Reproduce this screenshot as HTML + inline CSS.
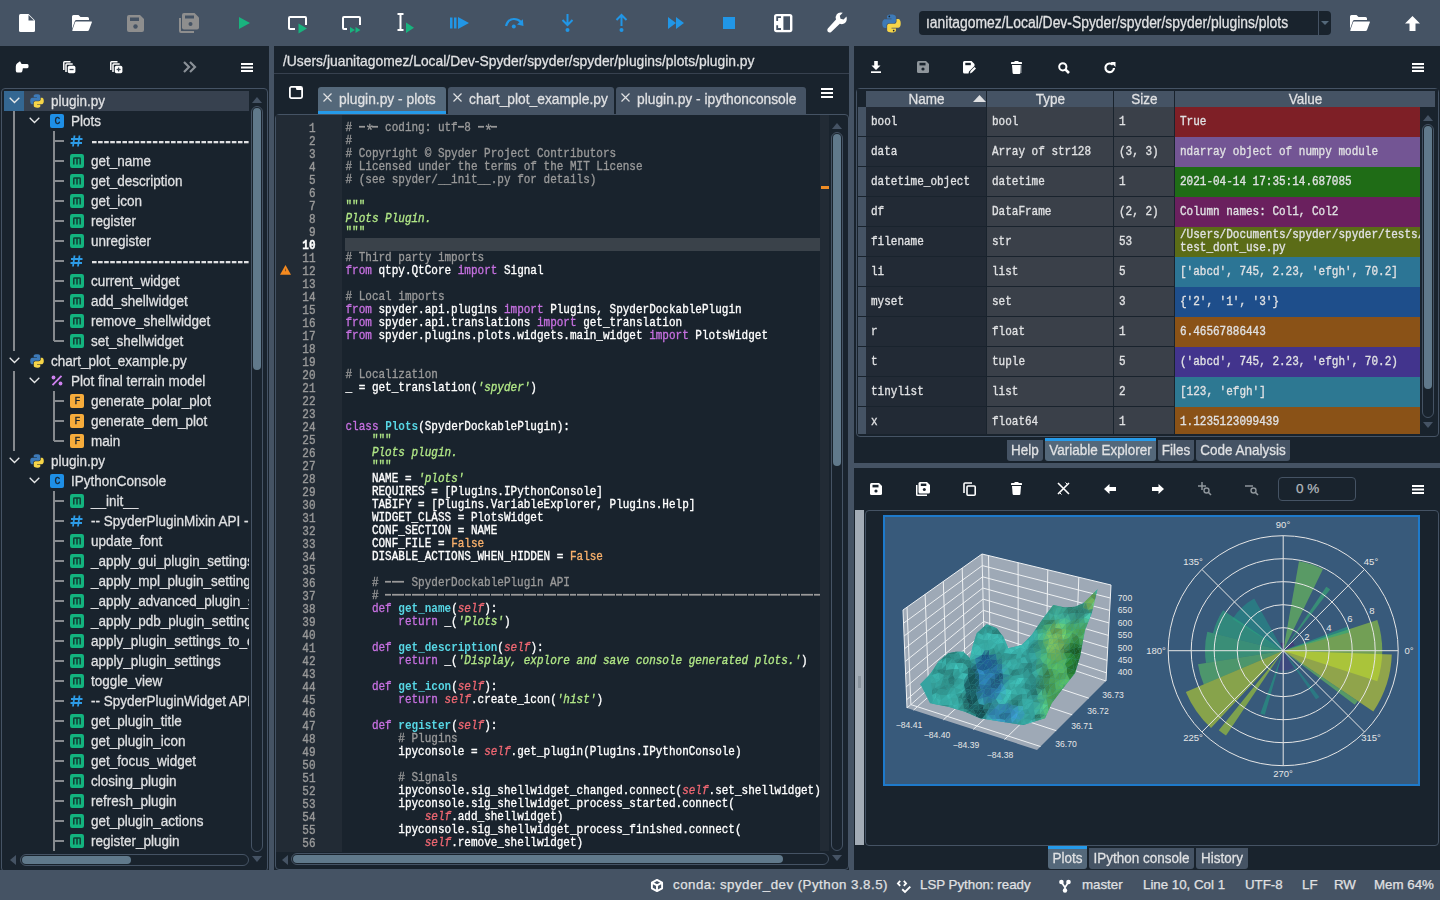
<!DOCTYPE html><html><head><meta charset="utf-8"><style>
*{margin:0;padding:0;box-sizing:border-box}
html,body{width:1440px;height:900px;overflow:hidden;background:#19232D;font-family:"Liberation Sans",sans-serif;color:#E0E1E3;-webkit-text-stroke-width:0.25px}
.a{position:absolute}
svg{position:absolute;overflow:visible}
.tr{position:absolute;height:20px;line-height:20px;font-size:13.5px;white-space:nowrap;color:#E0E1E3;transform:scaleY(1.13);transform-origin:0 14.7px}
.ico{position:absolute;width:14px;height:14px;border-radius:2px;font-family:"Liberation Mono",monospace;font-size:11.5px;font-weight:normal;line-height:14px;text-align:center;color:#19232D;-webkit-text-stroke-width:0.4px}.ico span{display:inline-block;transform:scaleX(0.85)}
.cl{position:absolute;left:345px;height:13px;line-height:13px;font-size:11px;font-family:"Liberation Mono",monospace;white-space:pre;color:#ffffff;transform:scaleY(1.1);transform-origin:0 40%;-webkit-text-stroke-width:0.3px}
.ln{position:absolute;left:280px;width:35.5px;text-align:right;height:13px;line-height:13px;font-size:11px;font-family:"Liberation Mono",monospace;color:#999999;transform:scaleY(1.1);transform-origin:0 40%;-webkit-text-stroke-width:0.35px}
.dsh{display:inline-block;width:6.6px;font-style:normal;color:transparent;-webkit-text-stroke-width:0;background:linear-gradient(currentColor,currentColor) no-repeat 0.2px 4.4px/6.2px 1.6px}.c .dsh{background-image:linear-gradient(#999,#999)}.s.sn{font-style:normal}.ast{display:inline-block;width:6.6px;font-style:normal;font-size:15px;line-height:13px;vertical-align:top;position:relative;top:2.5px;text-align:center}.k{color:#c670e0}.d{color:#57d6e4;font-weight:bold;-webkit-text-stroke-width:0}.c{color:#999999}.s{color:#b0e686;font-style:italic}.i{color:#ee6772;font-style:italic}.b{color:#fab16c}
.vr{position:absolute;height:30px;line-height:30px;font-size:11px;font-family:"Liberation Mono",monospace;white-space:pre;color:#E0E1E3;overflow:hidden;-webkit-text-stroke-width:0.3px;transform:scaleY(1.1);transform-origin:0 17.9px}
.tab{position:absolute;background:#455364;border-radius:3px 3px 0 0;font-size:13.8px;color:#E0E1E3;white-space:nowrap}
.st{position:absolute;top:869.5px;height:30px;line-height:30px;font-size:13.3px;color:#E0E1E3;white-space:nowrap}
.hd{position:absolute;top:91px;height:16px;line-height:18px;background:#455364;font-size:13.5px;text-align:center;color:#E0E1E3}.hd span{display:inline-block;transform:scaleY(1.12);transform-origin:0 13.7px}
</style></head><body><div class="a" style="left:0px;top:0px;width:1440px;height:46px;background:#455364;"></div><svg style="left:19px;top:14px" width="16" height="18" viewBox="0 0 16 18"><path d="M1.5 0 H9.5 L16 6.5 V16.5 Q16 18 14.5 18 H1.5 Q0 18 0 16.5 V1.5 Q0 0 1.5 0Z" fill="#ffffff"/><path d="M9.5 1 V6.5 H15" fill="#455364"/></svg><svg style="left:72px;top:15px" width="20" height="16" viewBox="0 0 20 16"><path d="M1.5 0 H6.5 L8.5 2 H15.5 Q17 2 17 3.5 V5 H4.5 Q3.2 5 2.8 6.2 L0 14 V1.5 Q0 0 1.5 0Z" fill="#ffffff"/><path d="M4 6.5 H19.5 Q20.2 6.5 19.8 7.5 L17 15 Q16.6 16 15.5 16 H0.8 Q0 16 0.3 15.2 L3 7.5 Q3.3 6.5 4 6.5Z" fill="#ffffff"/></svg><svg style="left:127px;top:15px" width="17" height="17" viewBox="0 0 17 17"><path d="M2 0 H13 L17 4 V15 Q17 17 15 17 H2 Q0 17 0 15 V2 Q0 0 2 0Z" fill="#8e8e8e"/><rect x="3" y="2.5" width="9" height="3.5" fill="#455364"/><circle cx="8.5" cy="11.5" r="2.2" fill="#455364"/></svg><svg style="left:179px;top:13px" width="20" height="20" viewBox="0 0 20 20"><path d="M0 5 V18 Q0 20 2 20 H15 V18 H2 V5Z" fill="#8e8e8e"/><path d="M5 0 H15.5 L20 4.5 V14.5 Q20 16.5 18 16.5 H5 Q3 16.5 3 14.5 V2 Q3 0 5 0Z" fill="#8e8e8e"/><rect x="6" y="2.5" width="9" height="3" fill="#455364"/><circle cx="11.5" cy="11" r="2" fill="#455364"/></svg><svg style="left:239px;top:17px" width="11" height="12" viewBox="0 0 11 12"><path d="M0 0 L11 6 L0 12Z" fill="#19b37e"/></svg><svg style="left:287px;top:16px" width="21" height="17" viewBox="0 0 21 17"><path d="M3 1 H18 Q19 1 19 2 V9 M8 13 H3 Q2 13 2 12 V2 Q2 1 3 1" fill="none" stroke="#ffffff" stroke-width="2"/><path d="M11.5 7.5 L20 12.5 L11.5 17.5Z" fill="#19b37e"/></svg><svg style="left:341px;top:16px" width="21" height="17" viewBox="0 0 21 17"><path d="M3 1 H18 Q19 1 19 2 V9 M6 13 H3 Q2 13 2 12 V2 Q2 1 3 1" fill="none" stroke="#ffffff" stroke-width="2"/><path d="M9 11 L14 14 L9 17Z M14.5 11 L19.5 14 L14.5 17Z" fill="#19b37e"/></svg><svg style="left:396px;top:13px" width="19" height="21" viewBox="0 0 19 21"><path d="M1.5 1 H7.5 M4.5 1 V17 M1.5 17 H7.5" fill="none" stroke="#ffffff" stroke-width="2"/><path d="M10 9.5 L18 14.75 L10 20Z" fill="#19b37e"/></svg><svg style="left:450px;top:17px" width="19" height="12" viewBox="0 0 19 12"><rect x="0" y="0.5" width="2.5" height="11" fill="#2196e6"/><rect x="4" y="0.5" width="2.5" height="11" fill="#2196e6"/><path d="M8 0 L19 6 L8 12Z" fill="#2196e6"/></svg><svg style="left:504px;top:16px" width="20" height="13" viewBox="0 0 20 13"><path d="M2 10 Q4 3 10 3 Q14 3 17 6" fill="none" stroke="#2196e6" stroke-width="2.2"/><path d="M18.8 3.2 L19.5 10 L13 8.5Z" fill="#2196e6"/><circle cx="9.8" cy="10.5" r="2" fill="#2196e6"/></svg><svg style="left:561px;top:14px" width="13" height="18" viewBox="0 0 13 18"><path d="M6.5 0 V10 M1.5 6 L6.5 11 L11.5 6" fill="none" stroke="#2196e6" stroke-width="2"/><circle cx="6.5" cy="16" r="2" fill="#2196e6"/></svg><svg style="left:615px;top:14px" width="13" height="18" viewBox="0 0 13 18"><path d="M6.5 12 V1 M1.5 6 L6.5 1 L11.5 6" fill="none" stroke="#2196e6" stroke-width="2"/><circle cx="6.5" cy="16" r="2" fill="#2196e6"/></svg><svg style="left:668px;top:17px" width="16" height="12" viewBox="0 0 16 12"><path d="M0 0 L8 6 L0 12Z M8 0 L16 6 L8 12Z" fill="#2196e6"/></svg><svg style="left:723px;top:17px" width="12" height="12" viewBox="0 0 12 12"><rect width="12" height="12" fill="#2196e6"/></svg><svg style="left:774px;top:14px" width="19" height="18" viewBox="0 0 19 18"><rect x="0" y="0" width="18.4" height="18.2" rx="2.6" fill="#ffffff"/><rect x="9.4" y="2.3" width="6.6" height="13.6" fill="#455364"/><path d="M2.3 2.3 H7 V4.1 H4.1 V6.9 H2.3Z M2.3 15.9 H7 V14.1 H4.1 V11.3 H2.3Z" fill="#455364"/></svg><svg style="left:827px;top:12px" width="21" height="22" viewBox="0 0 21 22"><path d="M19.5 4.5 L16.5 7.5 L13.5 6.8 L12.8 3.8 L15.8 0.8 Q12 -0.5 9.8 2.2 Q8 4.5 9 7.5 L0.8 16.5 Q-0.3 18 0.8 19.8 Q2.5 21.3 4.2 20 L12.8 11.8 Q15.8 12.8 18 11 Q20.5 8.5 19.5 4.5Z" fill="#ffffff"/></svg><svg style="left:882px;top:14px" width="19" height="19" viewBox="0 0 19 19"><g transform="scale(0.950)"><path d="M9.8 0.5 C5 0.5 5.3 2.6 5.3 2.6 V4.8 H10 V5.5 H3.4 C3.4 5.5 0.3 5.2 0.3 10.1 C0.3 15 3 14.8 3 14.8 H4.7 V12.5 C4.7 12.5 4.6 9.8 7.4 9.8 H12 C12 9.8 14.6 9.8 14.6 7.3 V3.1 C14.6 3.1 15 0.5 9.8 0.5Z" fill="#3d7ab8"/><circle cx="7.7" cy="2.6" r="0.9" fill="#19232D"/><path d="M10.2 19.5 C15 19.5 14.7 17.4 14.7 17.4 V15.2 H10 V14.5 H16.6 C16.6 14.5 19.7 14.8 19.7 9.9 C19.7 5 17 5.2 17 5.2 H15.3 V7.5 C15.3 7.5 15.4 10.2 12.6 10.2 H8 C8 10.2 5.4 10.2 5.4 12.7 V16.9 C5.4 16.9 5 19.5 10.2 19.5Z" fill="#f6d548"/><circle cx="12.3" cy="17.4" r="0.9" fill="#19232D"/></g></svg><div class="a" style="left:919px;top:11px;width:412px;height:24px;background:#19232D;border-radius:4px"></div><div class="a" style="left:1318px;top:11px;width:1px;height:24px;background:#455364;"></div><div class="a" style="left:919px;top:11px;width:399px;height:24px;overflow:hidden"><div class="a" style="left:7px;top:0;height:24px;line-height:24px;font-size:13.9px;white-space:nowrap;color:#E0E1E3;transform:scaleY(1.12);transform-origin:0 16.8px">ıanitagomez/Local/Dev-Spyder/spyder/spyder/plugins/plots</div></div><svg style="left:1321px;top:21px" width="8" height="4" viewBox="0 0 8 4"><path d="M0 0 H8 L4 4Z" fill="#54687A"/></svg><svg style="left:1350px;top:15px" width="20" height="16" viewBox="0 0 20 16"><path d="M1.5 0 H6.5 L8.5 2 H15.5 Q17 2 17 3.5 V5 H4.5 Q3.2 5 2.8 6.2 L0 14 V1.5 Q0 0 1.5 0Z" fill="#ffffff"/><path d="M4 6.5 H19.5 Q20.2 6.5 19.8 7.5 L17 15 Q16.6 16 15.5 16 H0.8 Q0 16 0.3 15.2 L3 7.5 Q3.3 6.5 4 6.5Z" fill="#ffffff"/></svg><svg style="left:1405px;top:16px" width="15" height="15" viewBox="0 0 15 15"><path d="M7.5 0 L15 7.5 H10.5 V15 H4.5 V7.5 H0Z" fill="#ffffff"/></svg><div class="a" style="left:269px;top:46px;width:5px;height:824px;background:#455364;"></div><div class="a" style="left:849px;top:46px;width:5px;height:824px;background:#455364;"></div><div class="a" style="left:854px;top:463px;width:586px;height:5px;background:#455364;"></div><div class="a" style="left:0px;top:870px;width:1440px;height:30px;background:#455364;"></div><svg style="left:15px;top:60px" width="14" height="13" viewBox="0 0 14 13"><path d="M5 1.2 L6.6 3.9 H12.3 Q13.6 3.9 13.6 6.1 Q13.6 8.3 12.3 8.3 H7.9 L7.3 11.3 Q7 12.6 5.6 12.6 H2.7 Q0.8 12.6 0.8 10.7 V6.6 Q0.8 4.8 2 3.6Z" fill="#ffffff"/></svg><svg style="left:63px;top:61px" width="13" height="13" viewBox="0 0 13 13"><path d="M0.8 9 V1.6 Q0.8 0.8 1.6 0.8 H7.5 M3 11 V3.8 Q3 3 3.8 3 H9.7" fill="none" stroke="#ffffff" stroke-width="1.5"/><rect x="4.8" y="4.8" width="7.6" height="7.4" rx="1.6" fill="#ffffff"/><path d="M6.6 8.5 H10.6" stroke="#3a4450" stroke-width="1.3"/></svg><svg style="left:110px;top:61px" width="13" height="13" viewBox="0 0 13 13"><path d="M0.8 9 V1.6 Q0.8 0.8 1.6 0.8 H7.5 M3 11 V3.8 Q3 3 3.8 3 H9.7" fill="none" stroke="#ffffff" stroke-width="1.5"/><rect x="4.8" y="4.8" width="7.6" height="7.4" rx="1.6" fill="#ffffff"/><path d="M6.6 8.5 H10.6" stroke="#3a4450" stroke-width="1.3"/><path d="M8.6 6.5 V10.5" stroke="#3a4450" stroke-width="1.3"/></svg><svg style="left:183px;top:61px" width="15" height="12" viewBox="0 0 15 12"><path d="M1 1 L6 6 L1 11 M7 1 L12 6 L7 11" fill="none" stroke="#8a9097" stroke-width="2.2"/></svg><svg style="left:241px;top:63px" width="12" height="9" viewBox="0 0 12 9"><path d="M0 1 H12 M0 4.5 H12 M0 8 H12" stroke="#ffffff" stroke-width="1.8"/></svg><div class="a" style="left:1px;top:88px;width:267px;height:784px;border:1px solid #455364;border-radius:4px"></div><div class="a" style="left:3px;top:91px;width:246px;height:760px;overflow:hidden"><div class="a" style="left:1px;top:0px;width:245px;height:20px;background:#37414F"></div><div class="a" style="left:1px;top:0px;width:20px;height:20px;background:#346792"></div><div class="a" style="left:10px;top:20px;width:2px;height:240px;background:#868a8f"></div><div class="a" style="left:10px;top:280px;width:2px;height:80px;background:#868a8f"></div><svg style="left:5.6px;top:6.4px" width="11" height="7" viewBox="0 0 11 7"><path d="M0.7 0.7 L5.5 5.5 L10.3 0.7" fill="none" stroke="#E8E9EA" stroke-width="1.3"/></svg><svg style="left:27px;top:3px" width="14" height="14" viewBox="0 0 20 20"><path d="M9.8 0.5 C5 0.5 5.3 2.6 5.3 2.6 V4.8 H10 V5.5 H3.4 C3.4 5.5 0.3 5.2 0.3 10.1 C0.3 15 3 14.8 3 14.8 H4.7 V12.5 C4.7 12.5 4.6 9.8 7.4 9.8 H12 C12 9.8 14.6 9.8 14.6 7.3 V3.1 C14.6 3.1 15 0.5 9.8 0.5Z" fill="#3d7ab8"/><path d="M10.2 19.5 C15 19.5 14.7 17.4 14.7 17.4 V15.2 H10 V14.5 H16.6 C16.6 14.5 19.7 14.8 19.7 9.9 C19.7 5 17 5.2 17 5.2 H15.3 V7.5 C15.3 7.5 15.4 10.2 12.6 10.2 H8 C8 10.2 5.4 10.2 5.4 12.7 V16.9 C5.4 16.9 5 19.5 10.2 19.5Z" fill="#f6d548"/></svg><div class="tr" style="left:48px;top:0.5px">plugin.py</div><svg style="left:25.6px;top:26.4px" width="11" height="7" viewBox="0 0 11 7"><path d="M0.7 0.7 L5.5 5.5 L10.3 0.7" fill="none" stroke="#E8E9EA" stroke-width="1.3"/></svg><div class="ico" style="left:47px;top:23px;background:#1e8fe6"><span>C</span></div><div class="tr" style="left:68px;top:20.5px">Plots</div><div class="a" style="left:50px;top:40px;width:2px;height:20px;background:#868a8f"></div><div class="a" style="left:51px;top:49px;width:10px;height:2px;background:#868a8f"></div><svg style="left:67px;top:44px" width="13" height="12" viewBox="0 0 13 12"><path d="M4.5 0.5 L3 11.5 M9.5 0.5 L8 11.5 M1 4 H12.5 M0.5 8 H12" fill="none" stroke="#2d9be6" stroke-width="1.8"/></svg><svg style="left:88.7px;top:49.6px" width="160" height="3"><rect x="0.00" y="0" width="4.6" height="2.3" fill="#E0E1E3"/><rect x="6.08" y="0" width="4.6" height="2.3" fill="#E0E1E3"/><rect x="12.16" y="0" width="4.6" height="2.3" fill="#E0E1E3"/><rect x="18.24" y="0" width="4.6" height="2.3" fill="#E0E1E3"/><rect x="24.32" y="0" width="4.6" height="2.3" fill="#E0E1E3"/><rect x="30.40" y="0" width="4.6" height="2.3" fill="#E0E1E3"/><rect x="36.48" y="0" width="4.6" height="2.3" fill="#E0E1E3"/><rect x="42.56" y="0" width="4.6" height="2.3" fill="#E0E1E3"/><rect x="48.64" y="0" width="4.6" height="2.3" fill="#E0E1E3"/><rect x="54.72" y="0" width="4.6" height="2.3" fill="#E0E1E3"/><rect x="60.80" y="0" width="4.6" height="2.3" fill="#E0E1E3"/><rect x="66.88" y="0" width="4.6" height="2.3" fill="#E0E1E3"/><rect x="72.96" y="0" width="4.6" height="2.3" fill="#E0E1E3"/><rect x="79.04" y="0" width="4.6" height="2.3" fill="#E0E1E3"/><rect x="85.12" y="0" width="4.6" height="2.3" fill="#E0E1E3"/><rect x="91.20" y="0" width="4.6" height="2.3" fill="#E0E1E3"/><rect x="97.28" y="0" width="4.6" height="2.3" fill="#E0E1E3"/><rect x="103.36" y="0" width="4.6" height="2.3" fill="#E0E1E3"/><rect x="109.44" y="0" width="4.6" height="2.3" fill="#E0E1E3"/><rect x="115.52" y="0" width="4.6" height="2.3" fill="#E0E1E3"/><rect x="121.60" y="0" width="4.6" height="2.3" fill="#E0E1E3"/><rect x="127.68" y="0" width="4.6" height="2.3" fill="#E0E1E3"/><rect x="133.76" y="0" width="4.6" height="2.3" fill="#E0E1E3"/><rect x="139.84" y="0" width="4.6" height="2.3" fill="#E0E1E3"/><rect x="145.92" y="0" width="4.6" height="2.3" fill="#E0E1E3"/><rect x="152.00" y="0" width="4.6" height="2.3" fill="#E0E1E3"/></svg><div class="a" style="left:50px;top:60px;width:2px;height:20px;background:#868a8f"></div><div class="a" style="left:51px;top:69px;width:10px;height:2px;background:#868a8f"></div><svg style="left:67px;top:63px" width="14" height="14" viewBox="0 0 14 14"><rect width="14" height="14" rx="2.2" fill="#13b37e"/><path d="M3.8 10.6 V4.6 Q3.8 3.9 4.5 3.9 H9.5 Q10.2 3.9 10.2 4.6 V10.6 M7 3.9 V10.6" fill="none" stroke="#123d33" stroke-width="1.5"/></svg><div class="tr" style="left:88px;top:60.5px">get_name</div><div class="a" style="left:50px;top:80px;width:2px;height:20px;background:#868a8f"></div><div class="a" style="left:51px;top:89px;width:10px;height:2px;background:#868a8f"></div><svg style="left:67px;top:83px" width="14" height="14" viewBox="0 0 14 14"><rect width="14" height="14" rx="2.2" fill="#13b37e"/><path d="M3.8 10.6 V4.6 Q3.8 3.9 4.5 3.9 H9.5 Q10.2 3.9 10.2 4.6 V10.6 M7 3.9 V10.6" fill="none" stroke="#123d33" stroke-width="1.5"/></svg><div class="tr" style="left:88px;top:80.5px">get_description</div><div class="a" style="left:50px;top:100px;width:2px;height:20px;background:#868a8f"></div><div class="a" style="left:51px;top:109px;width:10px;height:2px;background:#868a8f"></div><svg style="left:67px;top:103px" width="14" height="14" viewBox="0 0 14 14"><rect width="14" height="14" rx="2.2" fill="#13b37e"/><path d="M3.8 10.6 V4.6 Q3.8 3.9 4.5 3.9 H9.5 Q10.2 3.9 10.2 4.6 V10.6 M7 3.9 V10.6" fill="none" stroke="#123d33" stroke-width="1.5"/></svg><div class="tr" style="left:88px;top:100.5px">get_icon</div><div class="a" style="left:50px;top:120px;width:2px;height:20px;background:#868a8f"></div><div class="a" style="left:51px;top:129px;width:10px;height:2px;background:#868a8f"></div><svg style="left:67px;top:123px" width="14" height="14" viewBox="0 0 14 14"><rect width="14" height="14" rx="2.2" fill="#13b37e"/><path d="M3.8 10.6 V4.6 Q3.8 3.9 4.5 3.9 H9.5 Q10.2 3.9 10.2 4.6 V10.6 M7 3.9 V10.6" fill="none" stroke="#123d33" stroke-width="1.5"/></svg><div class="tr" style="left:88px;top:120.5px">register</div><div class="a" style="left:50px;top:140px;width:2px;height:20px;background:#868a8f"></div><div class="a" style="left:51px;top:149px;width:10px;height:2px;background:#868a8f"></div><svg style="left:67px;top:143px" width="14" height="14" viewBox="0 0 14 14"><rect width="14" height="14" rx="2.2" fill="#13b37e"/><path d="M3.8 10.6 V4.6 Q3.8 3.9 4.5 3.9 H9.5 Q10.2 3.9 10.2 4.6 V10.6 M7 3.9 V10.6" fill="none" stroke="#123d33" stroke-width="1.5"/></svg><div class="tr" style="left:88px;top:140.5px">unregister</div><div class="a" style="left:50px;top:160px;width:2px;height:20px;background:#868a8f"></div><div class="a" style="left:51px;top:169px;width:10px;height:2px;background:#868a8f"></div><svg style="left:67px;top:164px" width="13" height="12" viewBox="0 0 13 12"><path d="M4.5 0.5 L3 11.5 M9.5 0.5 L8 11.5 M1 4 H12.5 M0.5 8 H12" fill="none" stroke="#2d9be6" stroke-width="1.8"/></svg><svg style="left:88.7px;top:169.6px" width="160" height="3"><rect x="0.00" y="0" width="4.6" height="2.3" fill="#E0E1E3"/><rect x="6.08" y="0" width="4.6" height="2.3" fill="#E0E1E3"/><rect x="12.16" y="0" width="4.6" height="2.3" fill="#E0E1E3"/><rect x="18.24" y="0" width="4.6" height="2.3" fill="#E0E1E3"/><rect x="24.32" y="0" width="4.6" height="2.3" fill="#E0E1E3"/><rect x="30.40" y="0" width="4.6" height="2.3" fill="#E0E1E3"/><rect x="36.48" y="0" width="4.6" height="2.3" fill="#E0E1E3"/><rect x="42.56" y="0" width="4.6" height="2.3" fill="#E0E1E3"/><rect x="48.64" y="0" width="4.6" height="2.3" fill="#E0E1E3"/><rect x="54.72" y="0" width="4.6" height="2.3" fill="#E0E1E3"/><rect x="60.80" y="0" width="4.6" height="2.3" fill="#E0E1E3"/><rect x="66.88" y="0" width="4.6" height="2.3" fill="#E0E1E3"/><rect x="72.96" y="0" width="4.6" height="2.3" fill="#E0E1E3"/><rect x="79.04" y="0" width="4.6" height="2.3" fill="#E0E1E3"/><rect x="85.12" y="0" width="4.6" height="2.3" fill="#E0E1E3"/><rect x="91.20" y="0" width="4.6" height="2.3" fill="#E0E1E3"/><rect x="97.28" y="0" width="4.6" height="2.3" fill="#E0E1E3"/><rect x="103.36" y="0" width="4.6" height="2.3" fill="#E0E1E3"/><rect x="109.44" y="0" width="4.6" height="2.3" fill="#E0E1E3"/><rect x="115.52" y="0" width="4.6" height="2.3" fill="#E0E1E3"/><rect x="121.60" y="0" width="4.6" height="2.3" fill="#E0E1E3"/><rect x="127.68" y="0" width="4.6" height="2.3" fill="#E0E1E3"/><rect x="133.76" y="0" width="4.6" height="2.3" fill="#E0E1E3"/><rect x="139.84" y="0" width="4.6" height="2.3" fill="#E0E1E3"/><rect x="145.92" y="0" width="4.6" height="2.3" fill="#E0E1E3"/><rect x="152.00" y="0" width="4.6" height="2.3" fill="#E0E1E3"/></svg><div class="a" style="left:50px;top:180px;width:2px;height:20px;background:#868a8f"></div><div class="a" style="left:51px;top:189px;width:10px;height:2px;background:#868a8f"></div><svg style="left:67px;top:183px" width="14" height="14" viewBox="0 0 14 14"><rect width="14" height="14" rx="2.2" fill="#13b37e"/><path d="M3.8 10.6 V4.6 Q3.8 3.9 4.5 3.9 H9.5 Q10.2 3.9 10.2 4.6 V10.6 M7 3.9 V10.6" fill="none" stroke="#123d33" stroke-width="1.5"/></svg><div class="tr" style="left:88px;top:180.5px">current_widget</div><div class="a" style="left:50px;top:200px;width:2px;height:20px;background:#868a8f"></div><div class="a" style="left:51px;top:209px;width:10px;height:2px;background:#868a8f"></div><svg style="left:67px;top:203px" width="14" height="14" viewBox="0 0 14 14"><rect width="14" height="14" rx="2.2" fill="#13b37e"/><path d="M3.8 10.6 V4.6 Q3.8 3.9 4.5 3.9 H9.5 Q10.2 3.9 10.2 4.6 V10.6 M7 3.9 V10.6" fill="none" stroke="#123d33" stroke-width="1.5"/></svg><div class="tr" style="left:88px;top:200.5px">add_shellwidget</div><div class="a" style="left:50px;top:220px;width:2px;height:20px;background:#868a8f"></div><div class="a" style="left:51px;top:229px;width:10px;height:2px;background:#868a8f"></div><svg style="left:67px;top:223px" width="14" height="14" viewBox="0 0 14 14"><rect width="14" height="14" rx="2.2" fill="#13b37e"/><path d="M3.8 10.6 V4.6 Q3.8 3.9 4.5 3.9 H9.5 Q10.2 3.9 10.2 4.6 V10.6 M7 3.9 V10.6" fill="none" stroke="#123d33" stroke-width="1.5"/></svg><div class="tr" style="left:88px;top:220.5px">remove_shellwidget</div><div class="a" style="left:50px;top:240px;width:2px;height:10px;background:#868a8f"></div><div class="a" style="left:51px;top:249px;width:10px;height:2px;background:#868a8f"></div><svg style="left:67px;top:243px" width="14" height="14" viewBox="0 0 14 14"><rect width="14" height="14" rx="2.2" fill="#13b37e"/><path d="M3.8 10.6 V4.6 Q3.8 3.9 4.5 3.9 H9.5 Q10.2 3.9 10.2 4.6 V10.6 M7 3.9 V10.6" fill="none" stroke="#123d33" stroke-width="1.5"/></svg><div class="tr" style="left:88px;top:240.5px">set_shellwidget</div><svg style="left:5.6px;top:266.4px" width="11" height="7" viewBox="0 0 11 7"><path d="M0.7 0.7 L5.5 5.5 L10.3 0.7" fill="none" stroke="#E8E9EA" stroke-width="1.3"/></svg><svg style="left:27px;top:263px" width="14" height="14" viewBox="0 0 20 20"><path d="M9.8 0.5 C5 0.5 5.3 2.6 5.3 2.6 V4.8 H10 V5.5 H3.4 C3.4 5.5 0.3 5.2 0.3 10.1 C0.3 15 3 14.8 3 14.8 H4.7 V12.5 C4.7 12.5 4.6 9.8 7.4 9.8 H12 C12 9.8 14.6 9.8 14.6 7.3 V3.1 C14.6 3.1 15 0.5 9.8 0.5Z" fill="#3d7ab8"/><path d="M10.2 19.5 C15 19.5 14.7 17.4 14.7 17.4 V15.2 H10 V14.5 H16.6 C16.6 14.5 19.7 14.8 19.7 9.9 C19.7 5 17 5.2 17 5.2 H15.3 V7.5 C15.3 7.5 15.4 10.2 12.6 10.2 H8 C8 10.2 5.4 10.2 5.4 12.7 V16.9 C5.4 16.9 5 19.5 10.2 19.5Z" fill="#f6d548"/></svg><div class="tr" style="left:48px;top:260.5px">chart_plot_example.py</div><svg style="left:25.6px;top:286.4px" width="11" height="7" viewBox="0 0 11 7"><path d="M0.7 0.7 L5.5 5.5 L10.3 0.7" fill="none" stroke="#E8E9EA" stroke-width="1.3"/></svg><svg style="left:48px;top:284px" width="12" height="11" viewBox="0 0 12 11"><circle cx="2.5" cy="2.5" r="1.9" fill="#cf82f0"/><circle cx="9.5" cy="8.5" r="1.9" fill="#cf82f0"/><path d="M10.5 0.8 L1.5 10.2" stroke="#cf82f0" stroke-width="1.8"/></svg><div class="tr" style="left:68px;top:280.5px">Plot final terrain model</div><div class="a" style="left:50px;top:300px;width:2px;height:20px;background:#868a8f"></div><div class="a" style="left:51px;top:309px;width:10px;height:2px;background:#868a8f"></div><div class="ico" style="left:67px;top:303px;background:#f7ac3b"><span>F</span></div><div class="tr" style="left:88px;top:300.5px">generate_polar_plot</div><div class="a" style="left:50px;top:320px;width:2px;height:20px;background:#868a8f"></div><div class="a" style="left:51px;top:329px;width:10px;height:2px;background:#868a8f"></div><div class="ico" style="left:67px;top:323px;background:#f7ac3b"><span>F</span></div><div class="tr" style="left:88px;top:320.5px">generate_dem_plot</div><div class="a" style="left:50px;top:340px;width:2px;height:10px;background:#868a8f"></div><div class="a" style="left:51px;top:349px;width:10px;height:2px;background:#868a8f"></div><div class="ico" style="left:67px;top:343px;background:#f7ac3b"><span>F</span></div><div class="tr" style="left:88px;top:340.5px">main</div><svg style="left:5.6px;top:366.4px" width="11" height="7" viewBox="0 0 11 7"><path d="M0.7 0.7 L5.5 5.5 L10.3 0.7" fill="none" stroke="#E8E9EA" stroke-width="1.3"/></svg><svg style="left:27px;top:363px" width="14" height="14" viewBox="0 0 20 20"><path d="M9.8 0.5 C5 0.5 5.3 2.6 5.3 2.6 V4.8 H10 V5.5 H3.4 C3.4 5.5 0.3 5.2 0.3 10.1 C0.3 15 3 14.8 3 14.8 H4.7 V12.5 C4.7 12.5 4.6 9.8 7.4 9.8 H12 C12 9.8 14.6 9.8 14.6 7.3 V3.1 C14.6 3.1 15 0.5 9.8 0.5Z" fill="#3d7ab8"/><path d="M10.2 19.5 C15 19.5 14.7 17.4 14.7 17.4 V15.2 H10 V14.5 H16.6 C16.6 14.5 19.7 14.8 19.7 9.9 C19.7 5 17 5.2 17 5.2 H15.3 V7.5 C15.3 7.5 15.4 10.2 12.6 10.2 H8 C8 10.2 5.4 10.2 5.4 12.7 V16.9 C5.4 16.9 5 19.5 10.2 19.5Z" fill="#f6d548"/></svg><div class="tr" style="left:48px;top:360.5px">plugin.py</div><svg style="left:25.6px;top:386.4px" width="11" height="7" viewBox="0 0 11 7"><path d="M0.7 0.7 L5.5 5.5 L10.3 0.7" fill="none" stroke="#E8E9EA" stroke-width="1.3"/></svg><div class="ico" style="left:47px;top:383px;background:#1e8fe6"><span>C</span></div><div class="tr" style="left:68px;top:380.5px">IPythonConsole</div><div class="a" style="left:50px;top:400px;width:2px;height:20px;background:#868a8f"></div><div class="a" style="left:51px;top:409px;width:10px;height:2px;background:#868a8f"></div><svg style="left:67px;top:403px" width="14" height="14" viewBox="0 0 14 14"><rect width="14" height="14" rx="2.2" fill="#13b37e"/><path d="M3.8 10.6 V4.6 Q3.8 3.9 4.5 3.9 H9.5 Q10.2 3.9 10.2 4.6 V10.6 M7 3.9 V10.6" fill="none" stroke="#123d33" stroke-width="1.5"/></svg><div class="tr" style="left:88px;top:400.5px">__init__</div><div class="a" style="left:50px;top:420px;width:2px;height:20px;background:#868a8f"></div><div class="a" style="left:51px;top:429px;width:10px;height:2px;background:#868a8f"></div><svg style="left:67px;top:424px" width="13" height="12" viewBox="0 0 13 12"><path d="M4.5 0.5 L3 11.5 M9.5 0.5 L8 11.5 M1 4 H12.5 M0.5 8 H12" fill="none" stroke="#2d9be6" stroke-width="1.8"/></svg><div class="tr" style="left:88px;top:420.5px">-- SpyderPluginMixin API -----</div><div class="a" style="left:50px;top:440px;width:2px;height:20px;background:#868a8f"></div><div class="a" style="left:51px;top:449px;width:10px;height:2px;background:#868a8f"></div><svg style="left:67px;top:443px" width="14" height="14" viewBox="0 0 14 14"><rect width="14" height="14" rx="2.2" fill="#13b37e"/><path d="M3.8 10.6 V4.6 Q3.8 3.9 4.5 3.9 H9.5 Q10.2 3.9 10.2 4.6 V10.6 M7 3.9 V10.6" fill="none" stroke="#123d33" stroke-width="1.5"/></svg><div class="tr" style="left:88px;top:440.5px">update_font</div><div class="a" style="left:50px;top:460px;width:2px;height:20px;background:#868a8f"></div><div class="a" style="left:51px;top:469px;width:10px;height:2px;background:#868a8f"></div><svg style="left:67px;top:463px" width="14" height="14" viewBox="0 0 14 14"><rect width="14" height="14" rx="2.2" fill="#13b37e"/><path d="M3.8 10.6 V4.6 Q3.8 3.9 4.5 3.9 H9.5 Q10.2 3.9 10.2 4.6 V10.6 M7 3.9 V10.6" fill="none" stroke="#123d33" stroke-width="1.5"/></svg><div class="tr" style="left:88px;top:460.5px">_apply_gui_plugin_settings</div><div class="a" style="left:50px;top:480px;width:2px;height:20px;background:#868a8f"></div><div class="a" style="left:51px;top:489px;width:10px;height:2px;background:#868a8f"></div><svg style="left:67px;top:483px" width="14" height="14" viewBox="0 0 14 14"><rect width="14" height="14" rx="2.2" fill="#13b37e"/><path d="M3.8 10.6 V4.6 Q3.8 3.9 4.5 3.9 H9.5 Q10.2 3.9 10.2 4.6 V10.6 M7 3.9 V10.6" fill="none" stroke="#123d33" stroke-width="1.5"/></svg><div class="tr" style="left:88px;top:480.5px">_apply_mpl_plugin_settings</div><div class="a" style="left:50px;top:500px;width:2px;height:20px;background:#868a8f"></div><div class="a" style="left:51px;top:509px;width:10px;height:2px;background:#868a8f"></div><svg style="left:67px;top:503px" width="14" height="14" viewBox="0 0 14 14"><rect width="14" height="14" rx="2.2" fill="#13b37e"/><path d="M3.8 10.6 V4.6 Q3.8 3.9 4.5 3.9 H9.5 Q10.2 3.9 10.2 4.6 V10.6 M7 3.9 V10.6" fill="none" stroke="#123d33" stroke-width="1.5"/></svg><div class="tr" style="left:88px;top:500.5px">_apply_advanced_plugin_settings</div><div class="a" style="left:50px;top:520px;width:2px;height:20px;background:#868a8f"></div><div class="a" style="left:51px;top:529px;width:10px;height:2px;background:#868a8f"></div><svg style="left:67px;top:523px" width="14" height="14" viewBox="0 0 14 14"><rect width="14" height="14" rx="2.2" fill="#13b37e"/><path d="M3.8 10.6 V4.6 Q3.8 3.9 4.5 3.9 H9.5 Q10.2 3.9 10.2 4.6 V10.6 M7 3.9 V10.6" fill="none" stroke="#123d33" stroke-width="1.5"/></svg><div class="tr" style="left:88px;top:520.5px">_apply_pdb_plugin_settings</div><div class="a" style="left:50px;top:540px;width:2px;height:20px;background:#868a8f"></div><div class="a" style="left:51px;top:549px;width:10px;height:2px;background:#868a8f"></div><svg style="left:67px;top:543px" width="14" height="14" viewBox="0 0 14 14"><rect width="14" height="14" rx="2.2" fill="#13b37e"/><path d="M3.8 10.6 V4.6 Q3.8 3.9 4.5 3.9 H9.5 Q10.2 3.9 10.2 4.6 V10.6 M7 3.9 V10.6" fill="none" stroke="#123d33" stroke-width="1.5"/></svg><div class="tr" style="left:88px;top:540.5px">apply_plugin_settings_to_console</div><div class="a" style="left:50px;top:560px;width:2px;height:20px;background:#868a8f"></div><div class="a" style="left:51px;top:569px;width:10px;height:2px;background:#868a8f"></div><svg style="left:67px;top:563px" width="14" height="14" viewBox="0 0 14 14"><rect width="14" height="14" rx="2.2" fill="#13b37e"/><path d="M3.8 10.6 V4.6 Q3.8 3.9 4.5 3.9 H9.5 Q10.2 3.9 10.2 4.6 V10.6 M7 3.9 V10.6" fill="none" stroke="#123d33" stroke-width="1.5"/></svg><div class="tr" style="left:88px;top:560.5px">apply_plugin_settings</div><div class="a" style="left:50px;top:580px;width:2px;height:20px;background:#868a8f"></div><div class="a" style="left:51px;top:589px;width:10px;height:2px;background:#868a8f"></div><svg style="left:67px;top:583px" width="14" height="14" viewBox="0 0 14 14"><rect width="14" height="14" rx="2.2" fill="#13b37e"/><path d="M3.8 10.6 V4.6 Q3.8 3.9 4.5 3.9 H9.5 Q10.2 3.9 10.2 4.6 V10.6 M7 3.9 V10.6" fill="none" stroke="#123d33" stroke-width="1.5"/></svg><div class="tr" style="left:88px;top:580.5px">toggle_view</div><div class="a" style="left:50px;top:600px;width:2px;height:20px;background:#868a8f"></div><div class="a" style="left:51px;top:609px;width:10px;height:2px;background:#868a8f"></div><svg style="left:67px;top:604px" width="13" height="12" viewBox="0 0 13 12"><path d="M4.5 0.5 L3 11.5 M9.5 0.5 L8 11.5 M1 4 H12.5 M0.5 8 H12" fill="none" stroke="#2d9be6" stroke-width="1.8"/></svg><div class="tr" style="left:88px;top:600.5px">-- SpyderPluginWidget API -----</div><div class="a" style="left:50px;top:620px;width:2px;height:20px;background:#868a8f"></div><div class="a" style="left:51px;top:629px;width:10px;height:2px;background:#868a8f"></div><svg style="left:67px;top:623px" width="14" height="14" viewBox="0 0 14 14"><rect width="14" height="14" rx="2.2" fill="#13b37e"/><path d="M3.8 10.6 V4.6 Q3.8 3.9 4.5 3.9 H9.5 Q10.2 3.9 10.2 4.6 V10.6 M7 3.9 V10.6" fill="none" stroke="#123d33" stroke-width="1.5"/></svg><div class="tr" style="left:88px;top:620.5px">get_plugin_title</div><div class="a" style="left:50px;top:640px;width:2px;height:20px;background:#868a8f"></div><div class="a" style="left:51px;top:649px;width:10px;height:2px;background:#868a8f"></div><svg style="left:67px;top:643px" width="14" height="14" viewBox="0 0 14 14"><rect width="14" height="14" rx="2.2" fill="#13b37e"/><path d="M3.8 10.6 V4.6 Q3.8 3.9 4.5 3.9 H9.5 Q10.2 3.9 10.2 4.6 V10.6 M7 3.9 V10.6" fill="none" stroke="#123d33" stroke-width="1.5"/></svg><div class="tr" style="left:88px;top:640.5px">get_plugin_icon</div><div class="a" style="left:50px;top:660px;width:2px;height:20px;background:#868a8f"></div><div class="a" style="left:51px;top:669px;width:10px;height:2px;background:#868a8f"></div><svg style="left:67px;top:663px" width="14" height="14" viewBox="0 0 14 14"><rect width="14" height="14" rx="2.2" fill="#13b37e"/><path d="M3.8 10.6 V4.6 Q3.8 3.9 4.5 3.9 H9.5 Q10.2 3.9 10.2 4.6 V10.6 M7 3.9 V10.6" fill="none" stroke="#123d33" stroke-width="1.5"/></svg><div class="tr" style="left:88px;top:660.5px">get_focus_widget</div><div class="a" style="left:50px;top:680px;width:2px;height:20px;background:#868a8f"></div><div class="a" style="left:51px;top:689px;width:10px;height:2px;background:#868a8f"></div><svg style="left:67px;top:683px" width="14" height="14" viewBox="0 0 14 14"><rect width="14" height="14" rx="2.2" fill="#13b37e"/><path d="M3.8 10.6 V4.6 Q3.8 3.9 4.5 3.9 H9.5 Q10.2 3.9 10.2 4.6 V10.6 M7 3.9 V10.6" fill="none" stroke="#123d33" stroke-width="1.5"/></svg><div class="tr" style="left:88px;top:680.5px">closing_plugin</div><div class="a" style="left:50px;top:700px;width:2px;height:20px;background:#868a8f"></div><div class="a" style="left:51px;top:709px;width:10px;height:2px;background:#868a8f"></div><svg style="left:67px;top:703px" width="14" height="14" viewBox="0 0 14 14"><rect width="14" height="14" rx="2.2" fill="#13b37e"/><path d="M3.8 10.6 V4.6 Q3.8 3.9 4.5 3.9 H9.5 Q10.2 3.9 10.2 4.6 V10.6 M7 3.9 V10.6" fill="none" stroke="#123d33" stroke-width="1.5"/></svg><div class="tr" style="left:88px;top:700.5px">refresh_plugin</div><div class="a" style="left:50px;top:720px;width:2px;height:20px;background:#868a8f"></div><div class="a" style="left:51px;top:729px;width:10px;height:2px;background:#868a8f"></div><svg style="left:67px;top:723px" width="14" height="14" viewBox="0 0 14 14"><rect width="14" height="14" rx="2.2" fill="#13b37e"/><path d="M3.8 10.6 V4.6 Q3.8 3.9 4.5 3.9 H9.5 Q10.2 3.9 10.2 4.6 V10.6 M7 3.9 V10.6" fill="none" stroke="#123d33" stroke-width="1.5"/></svg><div class="tr" style="left:88px;top:720.5px">get_plugin_actions</div><div class="a" style="left:50px;top:740px;width:2px;height:20px;background:#868a8f"></div><div class="a" style="left:51px;top:749px;width:10px;height:2px;background:#868a8f"></div><svg style="left:67px;top:743px" width="14" height="14" viewBox="0 0 14 14"><rect width="14" height="14" rx="2.2" fill="#13b37e"/><path d="M3.8 10.6 V4.6 Q3.8 3.9 4.5 3.9 H9.5 Q10.2 3.9 10.2 4.6 V10.6 M7 3.9 V10.6" fill="none" stroke="#123d33" stroke-width="1.5"/></svg><div class="tr" style="left:88px;top:740.5px">register_plugin</div></div><svg style="left:252px;top:97px" width="10" height="6" viewBox="0 0 10 6"><path d="M0 6 L5 0 L10 6Z" fill="#455364"/></svg><div class="a" style="left:251px;top:106px;width:12px;height:746px;border:1px solid #455364;border-radius:6px"></div><div class="a" style="left:253px;top:108px;width:8px;height:262px;background:#60798B;border-radius:4px"></div><svg style="left:252px;top:856px" width="10" height="6" viewBox="0 0 10 6"><path d="M0 0 L10 0 L5 6Z" fill="#455364"/></svg><svg style="left:10px;top:855px" width="6" height="10" viewBox="0 0 6 10"><path d="M6 0 L6 10 L0 5Z" fill="#455364"/></svg><div class="a" style="left:20px;top:854px;width:229px;height:12px;border:1px solid #455364;border-radius:6px"></div><div class="a" style="left:22px;top:856px;width:109px;height:8px;background:#60798B;border-radius:4px"></div><div class="a" style="left:283px;top:51px;height:20px;line-height:20px;font-size:13.86px;white-space:nowrap;color:#E0E1E3;transform:scaleY(1.12);transform-origin:0 14.8px">/Users/juanitagomez/Local/Dev-Spyder/spyder/spyder/plugins/plots/plugin.py</div><div class="a" style="left:274px;top:73px;width:575px;height:1px;background:#37414F;"></div><svg style="left:289px;top:86px" width="14" height="13" viewBox="0 0 14 13"><rect x="0.9" y="0.9" width="12.2" height="11.2" rx="1.5" fill="none" stroke="#ffffff" stroke-width="1.8"/><path d="M1 1 H6.5 L7.5 4 H13 V1Z" fill="#ffffff"/></svg><div class="tab" style="left:318px;top:87px;width:128px;height:27px;background:#54687A"><svg style="left:5px;top:6px" width="9" height="9" viewBox="0 0 9 9"><path d="M0.5 0.5 L8.5 8.5 M8.5 0.5 L0.5 8.5" stroke="#E0E1E3" stroke-width="1.2"/></svg><div class="a" style="left:21px;top:3px;height:20px;line-height:20px;transform:scaleY(1.12);transform-origin:0 14.8px">plugin.py - plots</div><div class="a" style="left:0;top:24px;width:100%;height:3px;background:#259AE9"></div></div><div class="tab" style="left:448px;top:87px;width:166px;height:27px;background:#455364"><svg style="left:5px;top:6px" width="9" height="9" viewBox="0 0 9 9"><path d="M0.5 0.5 L8.5 8.5 M8.5 0.5 L0.5 8.5" stroke="#E0E1E3" stroke-width="1.2"/></svg><div class="a" style="left:21px;top:3px;height:20px;line-height:20px;transform:scaleY(1.12);transform-origin:0 14.8px">chart_plot_example.py</div></div><div class="tab" style="left:616px;top:87px;width:190px;height:27px;background:#455364"><svg style="left:5px;top:6px" width="9" height="9" viewBox="0 0 9 9"><path d="M0.5 0.5 L8.5 8.5 M8.5 0.5 L0.5 8.5" stroke="#E0E1E3" stroke-width="1.2"/></svg><div class="a" style="left:21px;top:3px;height:20px;line-height:20px;transform:scaleY(1.12);transform-origin:0 14.8px">plugin.py - ipythonconsole</div></div><svg style="left:821px;top:88px" width="12" height="10" viewBox="0 0 12 10"><path d="M0 1 H12 M0 5 H12 M0 9 H12" stroke="#ffffff" stroke-width="1.8"/></svg><div class="a" style="left:275px;top:114px;width:574px;height:756px;border:1px solid #455364;border-radius:4px"></div><div class="a" style="left:276px;top:115px;width:66px;height:737px;background:#222b35;"></div><div class="a" style="left:345px;top:238px;width:475px;height:13px;background:#3a424a;"></div><svg style="left:280px;top:265.3px" width="11" height="10" viewBox="0 0 11 10"><path d="M5.5 0 L11 9.8 H0Z" fill="#f58a1f"/><path d="M5.5 3.5 V6.5" stroke="#b86a20" stroke-width="0.9"/><circle cx="5.5" cy="5.2" r="0.6" fill="#6a4a30"/></svg><div class="a" style="left:276px;top:115px;width:544px;height:737px;overflow:hidden"><div class="ln" style="left:4px;top:8.200000000000006px;color:#999999">1</div><div class="cl" style="left:69.5px;top:7.400000000000006px"><span class="c"># <i class="dsh">-</i><i class="ast">*</i><i class="dsh">-</i> coding: utf<i class="dsh">-</i>8 <i class="dsh">-</i><i class="ast">*</i><i class="dsh">-</i></span></div><div class="ln" style="left:4px;top:21.200000000000006px;color:#999999">2</div><div class="cl" style="left:69.5px;top:20.400000000000006px"><span class="c">#</span></div><div class="ln" style="left:4px;top:34.2px;color:#999999">3</div><div class="cl" style="left:69.5px;top:33.400000000000006px"><span class="c"># Copyright © Spyder Project Contributors</span></div><div class="ln" style="left:4px;top:47.2px;color:#999999">4</div><div class="cl" style="left:69.5px;top:46.400000000000006px"><span class="c"># Licensed under the terms of the MIT License</span></div><div class="ln" style="left:4px;top:60.2px;color:#999999">5</div><div class="cl" style="left:69.5px;top:59.400000000000006px"><span class="c"># (see spyder/__init__.py for details)</span></div><div class="ln" style="left:4px;top:73.2px;color:#999999">6</div><div class="cl" style="left:69.5px;top:72.4px"></div><div class="ln" style="left:4px;top:86.2px;color:#999999">7</div><div class="cl" style="left:69.5px;top:85.4px"><span class="s sn">&quot;&quot;&quot;</span></div><div class="ln" style="left:4px;top:99.2px;color:#999999">8</div><div class="cl" style="left:69.5px;top:98.4px"><span class="s">Plots Plugin.</span></div><div class="ln" style="left:4px;top:112.2px;color:#999999">9</div><div class="cl" style="left:69.5px;top:111.4px"><span class="s sn">&quot;&quot;&quot;</span></div><div class="ln" style="left:4px;top:125.2px;color:#ffffff;font-weight:bold">10</div><div class="cl" style="left:69.5px;top:124.4px"></div><div class="ln" style="left:4px;top:138.20000000000002px;color:#999999">11</div><div class="cl" style="left:69.5px;top:137.4px"><span class="c"># Third party imports</span></div><div class="ln" style="left:4px;top:151.2px;color:#999999">12</div><div class="cl" style="left:69.5px;top:150.39999999999998px"><span class="k">from</span> qtpy.QtCore <span class="k">import</span> Signal</div><div class="ln" style="left:4px;top:164.2px;color:#999999">13</div><div class="cl" style="left:69.5px;top:163.39999999999998px"></div><div class="ln" style="left:4px;top:177.2px;color:#999999">14</div><div class="cl" style="left:69.5px;top:176.39999999999998px"><span class="c"># Local imports</span></div><div class="ln" style="left:4px;top:190.2px;color:#999999">15</div><div class="cl" style="left:69.5px;top:189.39999999999998px"><span class="k">from</span> spyder.api.plugins <span class="k">import</span> Plugins, SpyderDockablePlugin</div><div class="ln" style="left:4px;top:203.2px;color:#999999">16</div><div class="cl" style="left:69.5px;top:202.39999999999998px"><span class="k">from</span> spyder.api.translations <span class="k">import</span> get_translation</div><div class="ln" style="left:4px;top:216.2px;color:#999999">17</div><div class="cl" style="left:69.5px;top:215.39999999999998px"><span class="k">from</span> spyder.plugins.plots.widgets.main_widget <span class="k">import</span> PlotsWidget</div><div class="ln" style="left:4px;top:229.2px;color:#999999">18</div><div class="cl" style="left:69.5px;top:228.39999999999998px"></div><div class="ln" style="left:4px;top:242.2px;color:#999999">19</div><div class="cl" style="left:69.5px;top:241.39999999999998px"></div><div class="ln" style="left:4px;top:255.2px;color:#999999">20</div><div class="cl" style="left:69.5px;top:254.39999999999998px"><span class="c"># Localization</span></div><div class="ln" style="left:4px;top:268.2px;color:#999999">21</div><div class="cl" style="left:69.5px;top:267.4px">_ = get_translation(<span class="s">&#x27;spyder&#x27;</span>)</div><div class="ln" style="left:4px;top:281.2px;color:#999999">22</div><div class="cl" style="left:69.5px;top:280.4px"></div><div class="ln" style="left:4px;top:294.2px;color:#999999">23</div><div class="cl" style="left:69.5px;top:293.4px"></div><div class="ln" style="left:4px;top:307.2px;color:#999999">24</div><div class="cl" style="left:69.5px;top:306.4px"><span class="k">class</span> <span class="d">Plots</span>(SpyderDockablePlugin):</div><div class="ln" style="left:4px;top:320.2px;color:#999999">25</div><div class="cl" style="left:69.5px;top:319.4px">    <span class="s sn">&quot;&quot;&quot;</span></div><div class="ln" style="left:4px;top:333.2px;color:#999999">26</div><div class="cl" style="left:69.5px;top:332.4px">    <span class="s">Plots plugin.</span></div><div class="ln" style="left:4px;top:346.2px;color:#999999">27</div><div class="cl" style="left:69.5px;top:345.4px">    <span class="s sn">&quot;&quot;&quot;</span></div><div class="ln" style="left:4px;top:359.2px;color:#999999">28</div><div class="cl" style="left:69.5px;top:358.4px">    NAME = <span class="s">&#x27;plots&#x27;</span></div><div class="ln" style="left:4px;top:372.2px;color:#999999">29</div><div class="cl" style="left:69.5px;top:371.4px">    REQUIRES = [Plugins.IPythonConsole]</div><div class="ln" style="left:4px;top:385.2px;color:#999999">30</div><div class="cl" style="left:69.5px;top:384.4px">    TABIFY = [Plugins.VariableExplorer, Plugins.Help]</div><div class="ln" style="left:4px;top:398.2px;color:#999999">31</div><div class="cl" style="left:69.5px;top:397.4px">    WIDGET_CLASS = PlotsWidget</div><div class="ln" style="left:4px;top:411.2px;color:#999999">32</div><div class="cl" style="left:69.5px;top:410.4px">    CONF_SECTION = NAME</div><div class="ln" style="left:4px;top:424.2px;color:#999999">33</div><div class="cl" style="left:69.5px;top:423.4px">    CONF_FILE = <span class="b">False</span></div><div class="ln" style="left:4px;top:437.2px;color:#999999">34</div><div class="cl" style="left:69.5px;top:436.4px">    DISABLE_ACTIONS_WHEN_HIDDEN = <span class="b">False</span></div><div class="ln" style="left:4px;top:450.2px;color:#999999">35</div><div class="cl" style="left:69.5px;top:449.4px"></div><div class="ln" style="left:4px;top:463.2px;color:#999999">36</div><div class="cl" style="left:69.5px;top:462.4px">    <span class="c"># <i class="dsh">-</i><i class="dsh">-</i><i class="dsh">-</i> SpyderDockablePlugin API</span></div><div class="ln" style="left:4px;top:476.2px;color:#999999">37</div><div class="cl" style="left:69.5px;top:475.4px">    <span class="c"># <i class="dsh">-</i><i class="dsh">-</i><i class="dsh">-</i><i class="dsh">-</i><i class="dsh">-</i><i class="dsh">-</i><i class="dsh">-</i><i class="dsh">-</i><i class="dsh">-</i><i class="dsh">-</i><i class="dsh">-</i><i class="dsh">-</i><i class="dsh">-</i><i class="dsh">-</i><i class="dsh">-</i><i class="dsh">-</i><i class="dsh">-</i><i class="dsh">-</i><i class="dsh">-</i><i class="dsh">-</i><i class="dsh">-</i><i class="dsh">-</i><i class="dsh">-</i><i class="dsh">-</i><i class="dsh">-</i><i class="dsh">-</i><i class="dsh">-</i><i class="dsh">-</i><i class="dsh">-</i><i class="dsh">-</i><i class="dsh">-</i><i class="dsh">-</i><i class="dsh">-</i><i class="dsh">-</i><i class="dsh">-</i><i class="dsh">-</i><i class="dsh">-</i><i class="dsh">-</i><i class="dsh">-</i><i class="dsh">-</i><i class="dsh">-</i><i class="dsh">-</i><i class="dsh">-</i><i class="dsh">-</i><i class="dsh">-</i><i class="dsh">-</i><i class="dsh">-</i><i class="dsh">-</i><i class="dsh">-</i><i class="dsh">-</i><i class="dsh">-</i><i class="dsh">-</i><i class="dsh">-</i><i class="dsh">-</i><i class="dsh">-</i><i class="dsh">-</i><i class="dsh">-</i><i class="dsh">-</i><i class="dsh">-</i><i class="dsh">-</i><i class="dsh">-</i><i class="dsh">-</i><i class="dsh">-</i><i class="dsh">-</i><i class="dsh">-</i><i class="dsh">-</i><i class="dsh">-</i><i class="dsh">-</i><i class="dsh">-</i><i class="dsh">-</i><i class="dsh">-</i><i class="dsh">-</i></span></div><div class="ln" style="left:4px;top:489.2px;color:#999999">38</div><div class="cl" style="left:69.5px;top:488.4px">    <span class="k">def</span> <span class="d">get_name</span>(<span class="i">self</span>):</div><div class="ln" style="left:4px;top:502.2px;color:#999999">39</div><div class="cl" style="left:69.5px;top:501.4px">        <span class="k">return</span> _(<span class="s">&#x27;Plots&#x27;</span>)</div><div class="ln" style="left:4px;top:515.1999999999999px;color:#999999">40</div><div class="cl" style="left:69.5px;top:514.4px"></div><div class="ln" style="left:4px;top:528.1999999999999px;color:#999999">41</div><div class="cl" style="left:69.5px;top:527.4px">    <span class="k">def</span> <span class="d">get_description</span>(<span class="i">self</span>):</div><div class="ln" style="left:4px;top:541.1999999999999px;color:#999999">42</div><div class="cl" style="left:69.5px;top:540.4px">        <span class="k">return</span> _(<span class="s">&#x27;Display, explore and save console generated plots.&#x27;</span>)</div><div class="ln" style="left:4px;top:554.1999999999999px;color:#999999">43</div><div class="cl" style="left:69.5px;top:553.4px"></div><div class="ln" style="left:4px;top:567.1999999999999px;color:#999999">44</div><div class="cl" style="left:69.5px;top:566.4px">    <span class="k">def</span> <span class="d">get_icon</span>(<span class="i">self</span>):</div><div class="ln" style="left:4px;top:580.1999999999999px;color:#999999">45</div><div class="cl" style="left:69.5px;top:579.4px">        <span class="k">return</span> <span class="i">self</span>.create_icon(<span class="s">&#x27;hist&#x27;</span>)</div><div class="ln" style="left:4px;top:593.1999999999999px;color:#999999">46</div><div class="cl" style="left:69.5px;top:592.4px"></div><div class="ln" style="left:4px;top:606.1999999999999px;color:#999999">47</div><div class="cl" style="left:69.5px;top:605.4px">    <span class="k">def</span> <span class="d">register</span>(<span class="i">self</span>):</div><div class="ln" style="left:4px;top:619.1999999999999px;color:#999999">48</div><div class="cl" style="left:69.5px;top:618.4px">        <span class="c"># Plugins</span></div><div class="ln" style="left:4px;top:632.1999999999999px;color:#999999">49</div><div class="cl" style="left:69.5px;top:631.4px">        ipyconsole = <span class="i">self</span>.get_plugin(Plugins.IPythonConsole)</div><div class="ln" style="left:4px;top:645.1999999999999px;color:#999999">50</div><div class="cl" style="left:69.5px;top:644.4px"></div><div class="ln" style="left:4px;top:658.1999999999999px;color:#999999">51</div><div class="cl" style="left:69.5px;top:657.4px">        <span class="c"># Signals</span></div><div class="ln" style="left:4px;top:671.1999999999999px;color:#999999">52</div><div class="cl" style="left:69.5px;top:670.4px">        ipyconsole.sig_shellwidget_changed.connect(<span class="i">self</span>.set_shellwidget)</div><div class="ln" style="left:4px;top:684.1999999999999px;color:#999999">53</div><div class="cl" style="left:69.5px;top:683.4px">        ipyconsole.sig_shellwidget_process_started.connect(</div><div class="ln" style="left:4px;top:697.1999999999999px;color:#999999">54</div><div class="cl" style="left:69.5px;top:696.4px">            <span class="i">self</span>.add_shellwidget)</div><div class="ln" style="left:4px;top:710.1999999999999px;color:#999999">55</div><div class="cl" style="left:69.5px;top:709.4px">        ipyconsole.sig_shellwidget_process_finished.connect(</div><div class="ln" style="left:4px;top:723.1999999999999px;color:#999999">56</div><div class="cl" style="left:69.5px;top:722.4px">            <span class="i">self</span>.remove_shellwidget)</div></div><div class="a" style="left:820px;top:115px;width:9px;height:736px;background:#222b35;"></div><div class="a" style="left:821px;top:186px;width:8px;height:3px;background:#f08d24;"></div><svg style="left:832px;top:123px" width="10" height="6" viewBox="0 0 10 6"><path d="M0 6 L5 0 L10 6Z" fill="#455364"/></svg><div class="a" style="left:831px;top:132px;width:12px;height:719px;border:1px solid #455364;border-radius:6px"></div><div class="a" style="left:833px;top:134px;width:8px;height:332px;background:#60798B;border-radius:4px"></div><svg style="left:282px;top:855px" width="6" height="10" viewBox="0 0 6 10"><path d="M6 0 L6 10 L0 5Z" fill="#455364"/></svg><div class="a" style="left:291px;top:853px;width:538px;height:12px;border:1px solid #455364;border-radius:6px"></div><div class="a" style="left:293px;top:855px;width:490px;height:8px;background:#60798B;border-radius:4px"></div><svg style="left:832px;top:855px" width="10" height="6" viewBox="0 0 10 6"><path d="M0 0 L10 0 L5 6Z" fill="#455364"/></svg><svg style="left:871px;top:61px" width="10" height="12" viewBox="0 0 10 12"><path d="M3.2 0 H6.8 V4.5 H9.5 L5 9 L0.5 4.5 H3.2Z" fill="#ffffff"/><rect x="0" y="10.3" width="10" height="1.7" fill="#ffffff"/></svg><svg style="left:917px;top:61px" width="12" height="12" viewBox="0 0 12 12"><path d="M1.5 0 H9 L12 3 V10.5 Q12 12 10.5 12 H1.5 Q0 12 0 10.5 V1.5 Q0 0 1.5 0Z" fill="#8f969c"/><rect x="2.5" y="1.8" width="6" height="2.6" fill="#19232D"/><circle cx="6" cy="8" r="1.6" fill="#19232D"/></svg><svg style="left:963px;top:61px" width="13" height="13" viewBox="0 0 13 13"><path d="M1.5 0 H8.5 L11.5 3 V5 L6 10.5 L5.5 12.5 H1.5 Q0 12.5 0 11 V1.5 Q0 0 1.5 0Z" fill="#ffffff"/><rect x="2.3" y="1.8" width="5.5" height="2.4" fill="#19232D"/><path d="M7 12.5 L7.5 10 L11.5 6 L13 7.5 L9 11.5Z" fill="#ffffff"/></svg><svg style="left:1011px;top:61px" width="11" height="13" viewBox="0 0 11 13"><rect x="0" y="1" width="11" height="2" rx="0.6" fill="#ffffff"/><rect x="3.5" y="0" width="4" height="1.5" fill="#ffffff"/><path d="M1 4 H10 L9.4 12 Q9.3 13 8.3 13 H2.7 Q1.7 13 1.6 12Z" fill="#ffffff"/><path d="M10 4 V12" stroke="#9aa0a6" stroke-width="1"/></svg><svg style="left:1058px;top:62px" width="12" height="12" viewBox="0 0 12 12"><circle cx="4.8" cy="4.8" r="3.6" fill="none" stroke="#ffffff" stroke-width="2"/><path d="M7.3 7.3 L11 11" stroke="#ffffff" stroke-width="2.6"/></svg><svg style="left:1104px;top:62px" width="12" height="12" viewBox="0 0 12 12"><path d="M10 6 A4.3 4.3 0 1 1 8.8 2.8" fill="none" stroke="#ffffff" stroke-width="2.2"/><path d="M6.5 0 H11.5 V5Z" fill="#ffffff"/></svg><svg style="left:1412px;top:63px" width="12" height="9" viewBox="0 0 12 9"><path d="M0 1 H12 M0 4.5 H12 M0 8 H12" stroke="#ffffff" stroke-width="1.8"/></svg><div class="a" style="left:856px;top:88px;width:583px;height:349px;border:1px solid #455364;border-radius:4px"></div><div class="a" style="left:857px;top:89px;width:581px;height:18px;background:#19232D"></div><div class="hd" style="left:866px;width:121px"><span>Name</span></div><div class="a" style="left:986px;top:91px;width:1px;height:16px;background:#19232D;"></div><div class="hd" style="left:987px;width:127px"><span>Type</span></div><div class="a" style="left:1113px;top:91px;width:1px;height:16px;background:#19232D;"></div><div class="hd" style="left:1114px;width:61px"><span>Size</span></div><div class="a" style="left:1174px;top:91px;width:1px;height:16px;background:#19232D;"></div><div class="hd" style="left:1175px;width:261px"><span>Value</span></div><div class="a" style="left:1435px;top:91px;width:1px;height:16px;background:#19232D;"></div><svg style="left:973px;top:95px" width="13" height="7" viewBox="0 0 13 7"><path d="M0 7 L6.5 0 L13 7Z" fill="#E0E1E3"/></svg><div class="a" style="left:857px;top:107px;width:581px;height:327px;overflow:hidden"><div class="a" style="left:1px;top:0px;width:8px;height:29px;background:#455364"></div><div class="a" style="left:9px;top:0px;width:120px;height:29px;background:#222a35"></div><div class="a" style="left:130px;top:0px;width:126px;height:29px;background:#3a4049"></div><div class="a" style="left:257px;top:0px;width:60px;height:29px;background:#3a4049"></div><div class="a" style="left:318px;top:0px;width:245px;height:30px;background:#7e1f26"></div><div class="vr" style="left:14px;top:0px">bool</div><div class="vr" style="left:135px;top:0px">bool</div><div class="vr" style="left:262px;top:0px">1</div><div class="vr" style="left:323px;top:0px">True</div><div class="a" style="left:1px;top:30px;width:8px;height:29px;background:#455364"></div><div class="a" style="left:9px;top:30px;width:120px;height:29px;background:#222a35"></div><div class="a" style="left:130px;top:30px;width:126px;height:29px;background:#3a4049"></div><div class="a" style="left:257px;top:30px;width:60px;height:29px;background:#3a4049"></div><div class="a" style="left:318px;top:30px;width:245px;height:30px;background:#735594"></div><div class="vr" style="left:14px;top:30px">data</div><div class="vr" style="left:135px;top:30px">Array of str128</div><div class="vr" style="left:262px;top:30px">(3, 3)</div><div class="vr" style="left:323px;top:30px">ndarray object of numpy module</div><div class="a" style="left:1px;top:60px;width:8px;height:29px;background:#455364"></div><div class="a" style="left:9px;top:60px;width:120px;height:29px;background:#222a35"></div><div class="a" style="left:130px;top:60px;width:126px;height:29px;background:#3a4049"></div><div class="a" style="left:257px;top:60px;width:60px;height:29px;background:#3a4049"></div><div class="a" style="left:318px;top:60px;width:245px;height:30px;background:#1f6c16"></div><div class="vr" style="left:14px;top:60px">datetime_object</div><div class="vr" style="left:135px;top:60px">datetime</div><div class="vr" style="left:262px;top:60px">1</div><div class="vr" style="left:323px;top:60px">2021-04-14 17:35:14.687085</div><div class="a" style="left:1px;top:90px;width:8px;height:29px;background:#455364"></div><div class="a" style="left:9px;top:90px;width:120px;height:29px;background:#222a35"></div><div class="a" style="left:130px;top:90px;width:126px;height:29px;background:#3a4049"></div><div class="a" style="left:257px;top:90px;width:60px;height:29px;background:#3a4049"></div><div class="a" style="left:318px;top:90px;width:245px;height:30px;background:#6a205e"></div><div class="vr" style="left:14px;top:90px">df</div><div class="vr" style="left:135px;top:90px">DataFrame</div><div class="vr" style="left:262px;top:90px">(2, 2)</div><div class="vr" style="left:323px;top:90px">Column names: Col1, Col2</div><div class="a" style="left:1px;top:120px;width:8px;height:29px;background:#455364"></div><div class="a" style="left:9px;top:120px;width:120px;height:29px;background:#222a35"></div><div class="a" style="left:130px;top:120px;width:126px;height:29px;background:#3a4049"></div><div class="a" style="left:257px;top:120px;width:60px;height:29px;background:#3a4049"></div><div class="a" style="left:318px;top:120px;width:245px;height:30px;background:#5b6c17"></div><div class="vr" style="left:14px;top:120px">filename</div><div class="vr" style="left:135px;top:120px">str</div><div class="vr" style="left:262px;top:120px">53</div><div class="vr" style="left:323px;top:122px;height:13px;line-height:13px;transform-origin:0 9.4px">/Users/Documents/spyder/spyder/tests/</div><div class="vr" style="left:323px;top:135px;height:13px;line-height:13px;transform-origin:0 9.4px">test_dont_use.py</div><div class="a" style="left:1px;top:150px;width:8px;height:29px;background:#455364"></div><div class="a" style="left:9px;top:150px;width:120px;height:29px;background:#222a35"></div><div class="a" style="left:130px;top:150px;width:126px;height:29px;background:#3a4049"></div><div class="a" style="left:257px;top:150px;width:60px;height:29px;background:#3a4049"></div><div class="a" style="left:318px;top:150px;width:245px;height:30px;background:#2c7595"></div><div class="vr" style="left:14px;top:150px">li</div><div class="vr" style="left:135px;top:150px">list</div><div class="vr" style="left:262px;top:150px">5</div><div class="vr" style="left:323px;top:150px">[&#x27;abcd&#x27;, 745, 2.23, &#x27;efgh&#x27;, 70.2]</div><div class="a" style="left:1px;top:180px;width:8px;height:29px;background:#455364"></div><div class="a" style="left:9px;top:180px;width:120px;height:29px;background:#222a35"></div><div class="a" style="left:130px;top:180px;width:126px;height:29px;background:#3a4049"></div><div class="a" style="left:257px;top:180px;width:60px;height:29px;background:#3a4049"></div><div class="a" style="left:318px;top:180px;width:245px;height:30px;background:#1e4e8b"></div><div class="vr" style="left:14px;top:180px">myset</div><div class="vr" style="left:135px;top:180px">set</div><div class="vr" style="left:262px;top:180px">3</div><div class="vr" style="left:323px;top:180px">{&#x27;2&#x27;, &#x27;1&#x27;, &#x27;3&#x27;}</div><div class="a" style="left:1px;top:210px;width:8px;height:29px;background:#455364"></div><div class="a" style="left:9px;top:210px;width:120px;height:29px;background:#222a35"></div><div class="a" style="left:130px;top:210px;width:126px;height:29px;background:#3a4049"></div><div class="a" style="left:257px;top:210px;width:60px;height:29px;background:#3a4049"></div><div class="a" style="left:318px;top:210px;width:245px;height:30px;background:#8a5217"></div><div class="vr" style="left:14px;top:210px">r</div><div class="vr" style="left:135px;top:210px">float</div><div class="vr" style="left:262px;top:210px">1</div><div class="vr" style="left:323px;top:210px">6.46567886443</div><div class="a" style="left:1px;top:240px;width:8px;height:29px;background:#455364"></div><div class="a" style="left:9px;top:240px;width:120px;height:29px;background:#222a35"></div><div class="a" style="left:130px;top:240px;width:126px;height:29px;background:#3a4049"></div><div class="a" style="left:257px;top:240px;width:60px;height:29px;background:#3a4049"></div><div class="a" style="left:318px;top:240px;width:245px;height:30px;background:#42348d"></div><div class="vr" style="left:14px;top:240px">t</div><div class="vr" style="left:135px;top:240px">tuple</div><div class="vr" style="left:262px;top:240px">5</div><div class="vr" style="left:323px;top:240px">(&#x27;abcd&#x27;, 745, 2.23, &#x27;efgh&#x27;, 70.2)</div><div class="a" style="left:1px;top:270px;width:8px;height:29px;background:#455364"></div><div class="a" style="left:9px;top:270px;width:120px;height:29px;background:#222a35"></div><div class="a" style="left:130px;top:270px;width:126px;height:29px;background:#3a4049"></div><div class="a" style="left:257px;top:270px;width:60px;height:29px;background:#3a4049"></div><div class="a" style="left:318px;top:270px;width:245px;height:30px;background:#2d7892"></div><div class="vr" style="left:14px;top:270px">tinylist</div><div class="vr" style="left:135px;top:270px">list</div><div class="vr" style="left:262px;top:270px">2</div><div class="vr" style="left:323px;top:270px">[123, &#x27;efgh&#x27;]</div><div class="a" style="left:1px;top:300px;width:8px;height:29px;background:#455364"></div><div class="a" style="left:9px;top:300px;width:120px;height:29px;background:#222a35"></div><div class="a" style="left:130px;top:300px;width:126px;height:29px;background:#3a4049"></div><div class="a" style="left:257px;top:300px;width:60px;height:29px;background:#3a4049"></div><div class="a" style="left:318px;top:300px;width:245px;height:30px;background:#8a5217"></div><div class="vr" style="left:14px;top:300px">x</div><div class="vr" style="left:135px;top:300px">float64</div><div class="vr" style="left:262px;top:300px">1</div><div class="vr" style="left:323px;top:300px">1.1235123099439</div></div><div class="a" style="left:1420px;top:107px;width:17px;height:327px;background:#19232D;"></div><svg style="left:1423px;top:115px" width="10" height="6" viewBox="0 0 10 6"><path d="M0 6 L5 0 L10 6Z" fill="#455364"/></svg><div class="a" style="left:1422px;top:124px;width:12px;height:294px;border:1px solid #455364;border-radius:6px"></div><div class="a" style="left:1424px;top:126px;width:8px;height:263px;background:#60798B;border-radius:4px"></div><svg style="left:1423px;top:422px" width="10" height="6" viewBox="0 0 10 6"><path d="M0 0 L10 0 L5 6Z" fill="#455364"/></svg><div class="a" style="left:1007px;top:440px;width:36px;height:21px;background:#455364;border-radius:0 0 3px 3px"></div><div class="a" style="left:1007px;top:440.2px;width:36px;height:21px;font-size:13.5px;line-height:21px;text-align:center;color:#E0E1E3;white-space:nowrap"><span style="display:inline-block;transform:scaleY(1.12);transform-origin:0 15.2px">Help</span></div><div class="a" style="left:1045px;top:438px;width:111px;height:23px;background:#54687A;border-radius:0 0 3px 3px"></div><div class="a" style="left:1045px;top:440.2px;width:111px;height:21px;font-size:13.5px;line-height:21px;text-align:center;color:#E0E1E3;white-space:nowrap"><span style="display:inline-block;transform:scaleY(1.12);transform-origin:0 15.2px">Variable Explorer</span></div><div class="a" style="left:1045px;top:438px;width:111px;height:3px;background:#259AE9;"></div><div class="a" style="left:1158px;top:440px;width:36px;height:21px;background:#455364;border-radius:0 0 3px 3px"></div><div class="a" style="left:1158px;top:440.2px;width:36px;height:21px;font-size:13.5px;line-height:21px;text-align:center;color:#E0E1E3;white-space:nowrap"><span style="display:inline-block;transform:scaleY(1.12);transform-origin:0 15.2px">Files</span></div><div class="a" style="left:1196px;top:440px;width:94px;height:21px;background:#455364;border-radius:0 0 3px 3px"></div><div class="a" style="left:1196px;top:440.2px;width:94px;height:21px;font-size:13.5px;line-height:21px;text-align:center;color:#E0E1E3;white-space:nowrap"><span style="display:inline-block;transform:scaleY(1.12);transform-origin:0 15.2px">Code Analysis</span></div><svg style="left:870px;top:483px" width="12" height="12" viewBox="0 0 12 12"><path d="M1.5 0 H9 L12 3 V10.5 Q12 12 10.5 12 H1.5 Q0 12 0 10.5 V1.5 Q0 0 1.5 0Z" fill="#ffffff"/><rect x="2.5" y="1.8" width="6" height="2.6" fill="#19232D"/><circle cx="6" cy="8" r="1.6" fill="#19232D"/></svg><svg style="left:916px;top:482px" width="14" height="14" viewBox="0 0 14 14"><path d="M0 3 V12.5 Q0 14 1.5 14 H11 V12.5 H1.5 V3Z" fill="#ffffff"/><path d="M4 0 H11 L14 3 V10 Q14 11.5 12.5 11.5 H4 Q2.5 11.5 2.5 10 V1.5 Q2.5 0 4 0Z" fill="#ffffff"/><rect x="4.8" y="1.6" width="5.5" height="2.4" fill="#19232D"/><circle cx="8.3" cy="7.5" r="1.5" fill="#19232D"/></svg><svg style="left:963px;top:482px" width="13" height="14" viewBox="0 0 13 14"><path d="M1 11 V2 Q1 1 2 1 H9" fill="none" stroke="#ffffff" stroke-width="1.6"/><rect x="4" y="4" width="8.2" height="9.2" rx="1" fill="none" stroke="#ffffff" stroke-width="1.6"/></svg><svg style="left:1011px;top:482px" width="11" height="13" viewBox="0 0 11 13"><rect x="0" y="1" width="11" height="2" rx="0.6" fill="#ffffff"/><rect x="3.5" y="0" width="4" height="1.5" fill="#ffffff"/><path d="M1 4 H10 L9.4 12 Q9.3 13 8.3 13 H2.7 Q1.7 13 1.6 12Z" fill="#ffffff"/></svg><svg style="left:1057px;top:482px" width="13" height="13" viewBox="0 0 13 13"><path d="M1 1 L12 12 M12 1 L1 12" stroke="#ffffff" stroke-width="1.6"/><path d="M8.5 0.5 L11 3 M2 10 L4.5 12.5" stroke="#ffffff" stroke-width="1"/></svg><svg style="left:1104px;top:484px" width="12" height="10" viewBox="0 0 12 10"><path d="M0 5 L5.5 0 V3 H12 V7 H5.5 V10Z" fill="#ffffff"/></svg><svg style="left:1152px;top:484px" width="12" height="10" viewBox="0 0 12 10"><path d="M12 5 L6.5 0 V3 H0 V7 H6.5 V10Z" fill="#ffffff"/></svg><svg style="left:1198px;top:482px" width="14" height="14" viewBox="0 0 14 14"><path d="M4 0 V8 M0 4 H8" stroke="#8f969c" stroke-width="1.5"/><circle cx="8.5" cy="8.5" r="2.5" fill="none" stroke="#8f969c" stroke-width="1.4"/><path d="M10.3 10.3 L13 13" stroke="#8f969c" stroke-width="1.6"/></svg><svg style="left:1245px;top:484px" width="14" height="12" viewBox="0 0 14 12"><path d="M0 2 H8" stroke="#8f969c" stroke-width="1.5"/><circle cx="8.5" cy="6.5" r="2.5" fill="none" stroke="#8f969c" stroke-width="1.4"/><path d="M10.3 8.3 L13 11" stroke="#8f969c" stroke-width="1.6"/></svg><div class="a" style="left:1278px;top:477px;width:78px;height:24px;border:1px solid #455364;border-radius:4px;font-size:13.5px;line-height:22px;color:#b4b9be;padding-left:17px">0 %</div><svg style="left:1412px;top:485px" width="12" height="9" viewBox="0 0 12 9"><path d="M0 1 H12 M0 4.5 H12 M0 8 H12" stroke="#ffffff" stroke-width="1.8"/></svg><div class="a" style="left:855px;top:510px;width:9px;height:335px;background:#a3acb6;"></div><div class="a" style="left:858px;top:676px;width:3px;height:12px;background:#8a949e;"></div><div class="a" style="left:865px;top:510px;width:574px;height:336px;border:1px solid #455364;border-radius:4px"></div><div class="a" style="left:883px;top:515px;width:537px;height:271px;border:2px solid #1e7acb;background:#385a7b"></div><svg style="left:0;top:0;-webkit-text-stroke-width:0" width="1440" height="900" viewBox="0 0 1440 900"><defs><clipPath id="cv"><rect x="885" y="517" width="533" height="267"/></clipPath></defs><g clip-path="url(#cv)" font-family="Liberation Sans"><path d="M1283.2 650.7 L1377.3 681.3 A98.9 98.9 0 0 0 1377.3 620.1Z" fill="#a2d937" fill-opacity="0.55"/><path d="M1283.2 650.7 L1373.3 711.5 A108.7 108.7 0 0 0 1391.8 654.5Z" fill="#d9e225" fill-opacity="0.55"/><path d="M1283.2 650.7 L1349.7 632.3 A69.0 69.0 0 0 0 1347.8 626.5Z" fill="#22a884" fill-opacity="0.55"/><path d="M1283.2 650.7 L1330.1 589.6 A77.0 77.0 0 0 0 1326.3 586.8Z" fill="#39b875" fill-opacity="0.55"/><path d="M1283.2 650.7 L1323.0 569.0 A90.9 90.9 0 0 0 1299.0 561.2Z" fill="#74cf54" fill-opacity="0.55"/><path d="M1283.2 650.7 L1254.2 598.4 A59.8 59.8 0 0 0 1232.5 619.0Z" fill="#21958a" fill-opacity="0.55"/><path d="M1283.2 650.7 L1223.1 610.2 A72.5 72.5 0 0 0 1212.9 633.2Z" fill="#2cae7e" fill-opacity="0.55"/><path d="M1283.2 650.7 L1207.3 631.8 A78.2 78.2 0 0 0 1206.0 662.9Z" fill="#3dba74" fill-opacity="0.55"/><path d="M1283.2 650.7 L1198.0 664.2 A86.2 86.2 0 0 0 1203.8 684.4Z" fill="#5fc860" fill-opacity="0.55"/><path d="M1283.2 650.7 L1185.8 692.0 A105.8 105.8 0 0 0 1211.0 728.1Z" fill="#c9e025" fill-opacity="0.55"/><path d="M1283.2 650.7 L1218.8 730.2 A102.4 102.4 0 0 0 1226.0 735.6Z" fill="#b6dd2a" fill-opacity="0.55"/><path d="M1283.2 650.7 L1260.4 713.4 A66.7 66.7 0 0 0 1264.8 714.8Z" fill="#21a385" fill-opacity="0.55"/><path d="M1283.2 650.7 L1316.0 699.3 A58.6 58.6 0 0 0 1319.3 696.9Z" fill="#21938b" fill-opacity="0.55"/><path d="M1283.2 650.7 L1354.8 704.7 A89.7 89.7 0 0 0 1357.6 700.9Z" fill="#6fcd57" fill-opacity="0.55"/><path d="M1283.2 650.7 L1284.6 642.8 A8.0 8.0 0 0 0 1280.4 643.1Z" fill="#46196b" fill-opacity="0.55"/><path d="M1283.2 650.7 L1294.7 645.4 A12.7 12.7 0 0 0 1292.1 641.8Z" fill="#472776" fill-opacity="0.55"/><path d="M1283.2 650.7 L1278.0 670.1 A20.1 20.1 0 0 0 1293.3 668.1Z" fill="#423b82" fill-opacity="0.55"/><circle cx="1283.2" cy="650.7" r="23.0" fill="none" stroke="#e6e6e6" stroke-width="1"/><circle cx="1283.2" cy="650.7" r="46.0" fill="none" stroke="#e6e6e6" stroke-width="1"/><circle cx="1283.2" cy="650.7" r="69.0" fill="none" stroke="#e6e6e6" stroke-width="1"/><circle cx="1283.2" cy="650.7" r="92.0" fill="none" stroke="#e6e6e6" stroke-width="1"/><circle cx="1283.2" cy="650.7" r="115.0" fill="none" stroke="#e6e6e6" stroke-width="1"/><path d="M1283.2 650.7 L1398.2 650.7" stroke="#e6e6e6" stroke-width="1"/><path d="M1283.2 650.7 L1364.5 569.4" stroke="#e6e6e6" stroke-width="1"/><path d="M1283.2 650.7 L1283.2 535.7" stroke="#e6e6e6" stroke-width="1"/><path d="M1283.2 650.7 L1201.9 569.4" stroke="#e6e6e6" stroke-width="1"/><path d="M1283.2 650.7 L1168.2 650.7" stroke="#e6e6e6" stroke-width="1"/><path d="M1283.2 650.7 L1201.9 732.0" stroke="#e6e6e6" stroke-width="1"/><path d="M1283.2 650.7 L1283.2 765.7" stroke="#e6e6e6" stroke-width="1"/><path d="M1283.2 650.7 L1364.5 732.0" stroke="#e6e6e6" stroke-width="1"/><text x="1283" y="528" text-anchor="middle" font-size="9.5" fill="#e6e6e6">90°</text><text x="1371" y="565" text-anchor="middle" font-size="9.5" fill="#e6e6e6">45°</text><text x="1409" y="654" text-anchor="middle" font-size="9.5" fill="#e6e6e6">0°</text><text x="1193" y="565" text-anchor="middle" font-size="9.5" fill="#e6e6e6">135°</text><text x="1156" y="654" text-anchor="middle" font-size="9.5" fill="#e6e6e6">180°</text><text x="1193" y="741" text-anchor="middle" font-size="9.5" fill="#e6e6e6">225°</text><text x="1283" y="777" text-anchor="middle" font-size="9.5" fill="#e6e6e6">270°</text><text x="1371" y="741" text-anchor="middle" font-size="9.5" fill="#e6e6e6">315°</text><text x="1307" y="640" text-anchor="middle" font-size="9.5" fill="#e6e6e6">2</text><text x="1329" y="631" text-anchor="middle" font-size="9.5" fill="#e6e6e6">4</text><text x="1350" y="622" text-anchor="middle" font-size="9.5" fill="#e6e6e6">6</text><text x="1372" y="614" text-anchor="middle" font-size="9.5" fill="#e6e6e6">8</text><path d="M903 610 L982 554 L984 640 L907 708Z" fill="#9ea9b6"/><path d="M982 554 L1111 585 L1106 681 L984 640Z" fill="#9ea9b6"/><path d="M907 708 L984 640 L1106 681 L1037 750Z" fill="#9ea9b6"/><path d="M907.0 607.2 L910.9 704.6" stroke="#eef1f3" stroke-width="1"/><path d="M988.5 555.5 L990.1 642.0" stroke="#eef1f3" stroke-width="1"/><path d="M913.5 710.1 L990.1 642.0" stroke="#eef1f3" stroke-width="1"/><path d="M910.9 704.6 L1040.5 746.5" stroke="#eef1f3" stroke-width="1"/><path d="M925.1 594.3 L928.6 689.0" stroke="#eef1f3" stroke-width="1"/><path d="M1018.1 562.7 L1018.2 651.5" stroke="#eef1f3" stroke-width="1"/><path d="M943.4 719.8 L1018.2 651.5" stroke="#eef1f3" stroke-width="1"/><path d="M928.6 689.0 L1056.3 730.7" stroke="#eef1f3" stroke-width="1"/><path d="M943.3 581.4 L946.3 673.3" stroke="#eef1f3" stroke-width="1"/><path d="M1047.8 569.8 L1046.2 660.9" stroke="#eef1f3" stroke-width="1"/><path d="M973.3 729.4 L1046.2 660.9" stroke="#eef1f3" stroke-width="1"/><path d="M946.3 673.3 L1072.2 714.8" stroke="#eef1f3" stroke-width="1"/><path d="M962.2 568.0 L964.8 657.0" stroke="#eef1f3" stroke-width="1"/><path d="M1078.8 577.2 L1075.5 670.8" stroke="#eef1f3" stroke-width="1"/><path d="M1004.5 739.5 L1075.5 670.8" stroke="#eef1f3" stroke-width="1"/><path d="M964.8 657.0 L1088.8 698.2" stroke="#eef1f3" stroke-width="1"/><path d="M903.5 623.2 L982.3 565.6" stroke="#eef1f3" stroke-width="1"/><path d="M982.3 565.6 L1110.3 598.0" stroke="#eef1f3" stroke-width="1"/><path d="M904.1 636.0 L982.5 576.8" stroke="#eef1f3" stroke-width="1"/><path d="M982.5 576.8 L1109.7 610.4" stroke="#eef1f3" stroke-width="1"/><path d="M904.6 648.7 L982.8 588.0" stroke="#eef1f3" stroke-width="1"/><path d="M982.8 588.0 L1109.0 622.9" stroke="#eef1f3" stroke-width="1"/><path d="M905.1 661.5 L983.0 599.1" stroke="#eef1f3" stroke-width="1"/><path d="M983.0 599.1 L1108.4 635.4" stroke="#eef1f3" stroke-width="1"/><path d="M905.6 674.2 L983.3 610.3" stroke="#eef1f3" stroke-width="1"/><path d="M983.3 610.3 L1107.7 647.9" stroke="#eef1f3" stroke-width="1"/><path d="M906.1 686.9 L983.6 621.5" stroke="#eef1f3" stroke-width="1"/><path d="M983.6 621.5 L1107.1 660.4" stroke="#eef1f3" stroke-width="1"/><path d="M906.7 699.7 L983.8 632.7" stroke="#eef1f3" stroke-width="1"/><path d="M983.8 632.7 L1106.4 672.8" stroke="#eef1f3" stroke-width="1"/><path d="M903.0 610.0 L982.0 554.0" stroke="#eef1f3" stroke-width="1"/><path d="M982.0 554.0 L1111.0 585.0" stroke="#eef1f3" stroke-width="1"/><path d="M982.0 554.0 L984.0 640.0" stroke="#eef1f3" stroke-width="1"/><path d="M903.0 610.0 L907.0 708.0" stroke="#eef1f3" stroke-width="1"/><path d="M1111.0 585.0 L1106.0 681.0" stroke="#eef1f3" stroke-width="1"/><path d="M907.0 708.0 L984.0 640.0" stroke="#eef1f3" stroke-width="1"/><path d="M984.0 640.0 L1106.0 681.0" stroke="#eef1f3" stroke-width="1"/><defs><clipPath id="sil"><path d="M920.0 684.2 L930.8 673.3 L938.3 661.7 L948.3 653.3 L955.8 651.7 L963.3 651.7 L970.0 658.3 L972.5 646.7 L976.7 633.3 L986.7 624.2 L996.7 628.3 L1003.3 636.7 L1008.3 648.3 L1021.7 645.0 L1031.7 635.0 L1043.3 618.3 L1053.3 605.0 L1065.0 607.5 L1075.0 606.7 L1083.3 603.3 L1097.5 589.2 L1091.7 613.3 L1085.0 630.0 L1080.0 656.7 L1075.0 673.3 L1061.7 690.0 L1051.7 703.3 L1045.0 718.3 L1023.3 725.0 L1001.7 721.7 L980.0 718.3 L965.0 711.7 L948.3 706.7 L930.0 703.3 L921.7 686.7Z"/></clipPath></defs><defs><filter id="bl2" x="-5%" y="-5%" width="110%" height="110%"><feGaussianBlur stdDeviation="0.35"/></filter></defs><path d="M920.0 684.2 L930.8 673.3 L938.3 661.7 L948.3 653.3 L955.8 651.7 L963.3 651.7 L970.0 658.3 L972.5 646.7 L976.7 633.3 L986.7 624.2 L996.7 628.3 L1003.3 636.7 L1008.3 648.3 L1021.7 645.0 L1031.7 635.0 L1043.3 618.3 L1053.3 605.0 L1065.0 607.5 L1075.0 606.7 L1083.3 603.3 L1097.5 589.2 L1091.7 613.3 L1085.0 630.0 L1080.0 656.7 L1075.0 673.3 L1061.7 690.0 L1051.7 703.3 L1045.0 718.3 L1023.3 725.0 L1001.7 721.7 L980.0 718.3 L965.0 711.7 L948.3 706.7 L930.0 703.3 L921.7 686.7Z" fill="#35a3a0"/><g clip-path="url(#sil)" filter="url(#bl2)"><path d="M913 585 920 586 915 589Z" fill="#39ada6"/><path d="M920 586 920 589 915 589Z" fill="#36a49e"/><path d="M915 589 920 589 915 595Z" fill="#3cb5ae"/><path d="M920 589 921 595 915 595Z" fill="#3dbab3"/><path d="M915 595 921 595 917 599Z" fill="#3cb7b0"/><path d="M921 595 921 599 917 599Z" fill="#3bb2ab"/><path d="M917 599 921 599 917 603Z" fill="#349e98"/><path d="M921 599 922 604 917 603Z" fill="#2f908a"/><path d="M917 603 922 604 916 609Z" fill="#2b827d"/><path d="M922 604 922 608 916 609Z" fill="#2a817c"/><path d="M916 609 922 608 919 613Z" fill="#319590"/><path d="M922 608 923 615 919 613Z" fill="#3ab1ab"/><path d="M919 613 923 615 921 618Z" fill="#3bb2ac"/><path d="M923 615 924 619 921 618Z" fill="#3ab1aa"/><path d="M921 618 924 619 920 623Z" fill="#3bb3ac"/><path d="M924 619 925 623 920 623Z" fill="#39aea7"/><path d="M920 623 925 623 923 630Z" fill="#38aaa3"/><path d="M925 623 925 630 923 630Z" fill="#339a94"/><path d="M923 630 925 630 923 634Z" fill="#36a39d"/><path d="M925 630 928 634 923 634Z" fill="#349e98"/><path d="M923 634 928 634 921 638Z" fill="#339b95"/><path d="M928 634 928 640 921 638Z" fill="#2c8580"/><path d="M921 638 928 640 924 643Z" fill="#31938e"/><path d="M928 640 930 645 924 643Z" fill="#339994"/><path d="M924 643 930 645 926 649Z" fill="#38aba5"/><path d="M930 645 929 651 926 649Z" fill="#40c1ba"/><path d="M926 649 929 651 924 655Z" fill="#38aaa4"/><path d="M929 651 932 654 924 655Z" fill="#3aafa8"/><path d="M924 655 932 654 925 660Z" fill="#3db8b1"/><path d="M932 654 932 659 925 660Z" fill="#37a7a1"/><path d="M925 660 932 659 927 664Z" fill="#349f99"/><path d="M932 659 931 663 927 664Z" fill="#339c96"/><path d="M927 664 931 663 927 669Z" fill="#3ebbb4"/><path d="M931 663 934 668 927 669Z" fill="#3bb2ac"/><path d="M927 669 934 668 927 673Z" fill="#3bb3ac"/><path d="M934 668 932 675 927 673Z" fill="#35a19b"/><path d="M927 673 932 675 930 678Z" fill="#37a7a0"/><path d="M932 675 935 679 930 678Z" fill="#37a6a0"/><path d="M930 678 935 679 931 683Z" fill="#38a9a2"/><path d="M935 679 936 683 931 683Z" fill="#37a6a0"/><path d="M931 683 936 683 932 690Z" fill="#349d97"/><path d="M936 683 935 688 932 690Z" fill="#329791"/><path d="M932 690 935 688 932 695Z" fill="#2e8b86"/><path d="M935 688 936 693 932 695Z" fill="#2f8f89"/><path d="M932 695 936 693 933 700Z" fill="#3ab1aa"/><path d="M936 693 936 698 933 700Z" fill="#3db8b1"/><path d="M933 700 936 698 932 704Z" fill="#3bb3ac"/><path d="M936 698 939 706 932 704Z" fill="#39aea7"/><path d="M932 704 939 706 935 708Z" fill="#36a49e"/><path d="M939 706 940 709 935 708Z" fill="#31948f"/><path d="M935 708 940 709 936 715Z" fill="#2d8883"/><path d="M940 709 939 715 936 715Z" fill="#287a76"/><path d="M936 715 939 715 935 719Z" fill="#287a75"/><path d="M939 715 941 720 935 719Z" fill="#2e8c86"/><path d="M935 719 941 720 936 724Z" fill="#36a59f"/><path d="M941 720 940 723 936 724Z" fill="#39aca5"/><path d="M936 724 940 723 939 729Z" fill="#36a49e"/><path d="M940 723 943 730 939 729Z" fill="#30938d"/><path d="M939 729 943 730 936 733Z" fill="#329892"/><path d="M943 730 944 734 936 733Z" fill="#339a94"/><path d="M920 586 924 584 920 589Z" fill="#39aea7"/><path d="M924 584 926 588 920 589Z" fill="#36a59f"/><path d="M920 589 926 588 921 595Z" fill="#38a9a2"/><path d="M926 588 926 593 921 595Z" fill="#38a9a3"/><path d="M921 595 926 593 921 599Z" fill="#3db9b2"/><path d="M926 593 927 597 921 599Z" fill="#3fbeb6"/><path d="M921 599 927 597 922 604Z" fill="#35a29c"/><path d="M927 597 928 605 922 604Z" fill="#37a6a0"/><path d="M922 604 928 605 922 608Z" fill="#30928d"/><path d="M928 605 926 609 922 608Z" fill="#329993"/><path d="M922 608 926 609 923 615Z" fill="#36a59f"/><path d="M926 609 929 615 923 615Z" fill="#37a59f"/><path d="M923 615 929 615 924 619Z" fill="#35a19a"/><path d="M929 615 930 618 924 619Z" fill="#30928c"/><path d="M924 619 930 618 925 623Z" fill="#36a29c"/><path d="M930 618 930 625 925 623Z" fill="#339a95"/><path d="M925 623 930 625 925 630Z" fill="#36a39c"/><path d="M930 625 932 628 925 630Z" fill="#349e98"/><path d="M925 630 932 628 928 634Z" fill="#35a09a"/><path d="M932 628 931 633 928 634Z" fill="#30938d"/><path d="M928 634 931 633 928 640Z" fill="#2a7e7a"/><path d="M931 633 931 639 928 640Z" fill="#2a7f7a"/><path d="M928 640 931 639 930 645Z" fill="#349d97"/><path d="M931 639 932 645 930 645Z" fill="#39aca5"/><path d="M930 645 932 645 929 651Z" fill="#3ebcb5"/><path d="M932 645 935 648 929 651Z" fill="#3db8b1"/><path d="M929 651 935 648 932 654Z" fill="#3cb7b0"/><path d="M935 648 935 653 932 654Z" fill="#3aafa9"/><path d="M932 654 935 653 932 659Z" fill="#359f99"/><path d="M935 653 936 658 932 659Z" fill="#329791"/><path d="M932 659 936 658 931 663Z" fill="#31948e"/><path d="M936 658 936 663 931 663Z" fill="#2f8f89"/><path d="M931 663 936 663 934 668Z" fill="#349f99"/><path d="M936 663 937 670 934 668Z" fill="#339c96"/><path d="M934 668 937 670 932 675Z" fill="#2f908a"/><path d="M937 670 939 673 932 675Z" fill="#31948e"/><path d="M932 675 939 673 935 679Z" fill="#3bb2ab"/><path d="M939 673 940 680 935 679Z" fill="#3ab1aa"/><path d="M935 679 940 680 936 683Z" fill="#39aca6"/><path d="M940 680 941 685 936 683Z" fill="#35a09a"/><path d="M936 683 941 685 935 688Z" fill="#36a49e"/><path d="M941 685 939 689 935 688Z" fill="#339a94"/><path d="M935 688 939 689 936 693Z" fill="#2e8c87"/><path d="M939 689 940 695 936 693Z" fill="#329791"/><path d="M936 693 940 695 936 698Z" fill="#37a7a1"/><path d="M940 695 941 700 936 698Z" fill="#39ada6"/><path d="M936 698 941 700 939 706Z" fill="#3cb5af"/><path d="M941 700 942 705 939 706Z" fill="#38aba5"/><path d="M939 706 942 705 940 709Z" fill="#2f8e88"/><path d="M942 705 943 708 940 709Z" fill="#2c8681"/><path d="M940 709 943 708 939 715Z" fill="#2a807b"/><path d="M943 708 944 713 939 715Z" fill="#2c8681"/><path d="M939 715 944 713 941 720Z" fill="#2e8b86"/><path d="M944 713 947 718 941 720Z" fill="#3bb1ab"/><path d="M941 720 947 718 940 723Z" fill="#39aea8"/><path d="M947 718 946 724 940 723Z" fill="#38aaa4"/><path d="M940 723 946 724 943 730Z" fill="#35a09a"/><path d="M946 724 949 728 943 730Z" fill="#339c96"/><path d="M943 730 949 728 944 734Z" fill="#30928c"/><path d="M949 728 948 734 944 734Z" fill="#297e79"/><path d="M924 584 930 585 926 588Z" fill="#3cb7b0"/><path d="M930 585 929 590 926 588Z" fill="#39ada7"/><path d="M926 588 929 590 926 593Z" fill="#35a19b"/><path d="M929 590 931 594 926 593Z" fill="#349d97"/><path d="M926 593 931 594 927 597Z" fill="#329993"/><path d="M931 594 930 600 927 597Z" fill="#39aca5"/><path d="M927 597 930 600 928 605Z" fill="#40c1ba"/><path d="M930 600 934 604 928 605Z" fill="#3ab0a9"/><path d="M928 605 934 604 926 609Z" fill="#349d97"/><path d="M934 604 932 611 926 609Z" fill="#37a8a2"/><path d="M926 609 932 611 929 615Z" fill="#36a39d"/><path d="M932 611 933 613 929 615Z" fill="#35a19b"/><path d="M929 615 933 613 930 618Z" fill="#2f908a"/><path d="M933 613 933 620 930 618Z" fill="#2f8e88"/><path d="M930 618 933 620 930 625Z" fill="#30908b"/><path d="M933 620 936 624 930 625Z" fill="#30938d"/><path d="M930 625 936 624 932 628Z" fill="#2f8f89"/><path d="M936 624 937 627 932 628Z" fill="#2d8984"/><path d="M932 628 937 627 931 633Z" fill="#2c8782"/><path d="M937 627 937 634 931 633Z" fill="#329892"/><path d="M931 633 937 634 931 639Z" fill="#2d8a84"/><path d="M937 634 938 639 931 639Z" fill="#339b96"/><path d="M931 639 938 639 932 645Z" fill="#3ab0a9"/><path d="M938 639 938 643 932 645Z" fill="#3bb3ac"/><path d="M932 645 938 643 935 648Z" fill="#3ab1aa"/><path d="M938 643 938 649 935 648Z" fill="#35a29b"/><path d="M935 648 938 649 935 653Z" fill="#35a09a"/><path d="M938 649 939 655 935 653Z" fill="#349c96"/><path d="M935 653 939 655 936 658Z" fill="#329892"/><path d="M939 655 942 660 936 658Z" fill="#339b95"/><path d="M936 658 942 660 936 663Z" fill="#319690"/><path d="M942 660 942 663 936 663Z" fill="#3aafa9"/><path d="M936 663 942 663 937 670Z" fill="#35a19a"/><path d="M942 663 942 669 937 670Z" fill="#339a94"/><path d="M937 670 942 669 939 673Z" fill="#2a807b"/><path d="M942 669 944 675 939 673Z" fill="#2b847f"/><path d="M939 673 944 675 940 680Z" fill="#37a8a1"/><path d="M944 675 943 679 940 680Z" fill="#359f99"/><path d="M940 680 943 679 941 685Z" fill="#36a49e"/><path d="M943 679 945 685 941 685Z" fill="#30928c"/><path d="M941 685 945 685 939 689Z" fill="#30938d"/><path d="M945 685 947 690 939 689Z" fill="#2d8883"/><path d="M939 689 947 690 940 695Z" fill="#31958f"/><path d="M947 690 947 695 940 695Z" fill="#329791"/><path d="M940 695 947 695 941 700Z" fill="#36a49d"/><path d="M947 695 948 700 941 700Z" fill="#39ada7"/><path d="M941 700 948 700 942 705Z" fill="#38aaa4"/><path d="M948 700 949 705 942 705Z" fill="#38aaa4"/><path d="M942 705 949 705 943 708Z" fill="#30918b"/><path d="M949 705 948 710 943 708Z" fill="#329993"/><path d="M943 708 948 710 944 713Z" fill="#2f8f8a"/><path d="M948 710 949 714 944 713Z" fill="#349d97"/><path d="M944 713 949 714 947 718Z" fill="#3ab1aa"/><path d="M949 714 952 720 947 718Z" fill="#38aba5"/><path d="M947 718 952 720 946 724Z" fill="#339a94"/><path d="M952 720 953 722 946 724Z" fill="#339c96"/><path d="M946 724 953 722 949 728Z" fill="#349f99"/><path d="M953 722 952 728 949 728Z" fill="#2d8a85"/><path d="M949 728 952 728 948 734Z" fill="#2b837e"/><path d="M952 728 953 733 948 734Z" fill="#2c8781"/><path d="M930 585 934 583 929 590Z" fill="#39aca5"/><path d="M934 583 934 590 929 590Z" fill="#35a29c"/><path d="M929 590 934 590 931 594Z" fill="#2e8c86"/><path d="M934 590 936 594 931 594Z" fill="#2f8f8a"/><path d="M931 594 936 594 930 600Z" fill="#35a19b"/><path d="M936 594 935 600 930 600Z" fill="#3bb3ac"/><path d="M930 600 935 600 934 604Z" fill="#3fc0b9"/><path d="M935 600 938 603 934 604Z" fill="#3cb5ae"/><path d="M934 604 938 603 932 611Z" fill="#3aafa8"/><path d="M938 603 937 609 932 611Z" fill="#3cb7b0"/><path d="M932 611 937 609 933 613Z" fill="#3ab0a9"/><path d="M937 609 939 613 933 613Z" fill="#38a9a3"/><path d="M933 613 939 613 933 620Z" fill="#2f908b"/><path d="M939 613 941 618 933 620Z" fill="#329993"/><path d="M933 620 941 618 936 624Z" fill="#2d8983"/><path d="M941 618 940 625 936 624Z" fill="#2f908b"/><path d="M936 624 940 625 937 627Z" fill="#2e8c87"/><path d="M940 625 940 630 937 627Z" fill="#319590"/><path d="M937 627 940 630 937 634Z" fill="#339a94"/><path d="M940 630 941 634 937 634Z" fill="#36a49d"/><path d="M937 634 941 634 938 639Z" fill="#3bb3ad"/><path d="M941 634 942 639 938 639Z" fill="#3db9b2"/><path d="M938 639 942 639 938 643Z" fill="#38aaa3"/><path d="M942 639 945 644 938 643Z" fill="#38aaa3"/><path d="M938 643 945 644 938 649Z" fill="#349f99"/><path d="M945 644 944 649 938 649Z" fill="#2c8681"/><path d="M938 649 944 649 939 655Z" fill="#2d8984"/><path d="M944 649 944 653 939 655Z" fill="#30928d"/><path d="M939 655 944 653 942 660Z" fill="#2f908b"/><path d="M944 653 946 658 942 660Z" fill="#2a807b"/><path d="M942 660 946 658 942 663Z" fill="#329791"/><path d="M946 658 946 665 942 663Z" fill="#39ada7"/><path d="M942 663 946 665 942 669Z" fill="#37a6a0"/><path d="M946 665 946 670 942 669Z" fill="#2f8e88"/><path d="M942 669 946 670 944 675Z" fill="#2a7f7b"/><path d="M946 670 950 675 944 675Z" fill="#2e8b85"/><path d="M944 675 950 675 943 679Z" fill="#30918b"/><path d="M950 675 948 679 943 679Z" fill="#329791"/><path d="M943 679 948 679 945 685Z" fill="#2f8f89"/><path d="M948 679 949 684 945 685Z" fill="#30928c"/><path d="M945 685 949 684 947 690Z" fill="#2f8e89"/><path d="M949 684 951 688 947 690Z" fill="#30918c"/><path d="M947 690 951 688 947 695Z" fill="#329791"/><path d="M951 688 950 694 947 695Z" fill="#36a59f"/><path d="M947 695 950 694 948 700Z" fill="#3ebbb4"/><path d="M950 694 951 698 948 700Z" fill="#3cb6af"/><path d="M948 700 951 698 949 705Z" fill="#39aea7"/><path d="M951 698 953 705 949 705Z" fill="#3bb3ac"/><path d="M949 705 953 705 948 710Z" fill="#37a8a2"/><path d="M953 705 954 708 948 710Z" fill="#37a6a0"/><path d="M948 710 954 708 949 714Z" fill="#38a8a2"/><path d="M954 708 956 715 949 714Z" fill="#39ada7"/><path d="M949 714 956 715 952 720Z" fill="#3aafa8"/><path d="M956 715 956 718 952 720Z" fill="#35a29b"/><path d="M952 720 956 718 953 722Z" fill="#36a39d"/><path d="M956 718 955 724 953 722Z" fill="#329993"/><path d="M953 722 955 724 952 728Z" fill="#2e8b86"/><path d="M955 724 957 728 952 728Z" fill="#2f908a"/><path d="M952 728 957 728 953 733Z" fill="#30938d"/><path d="M957 728 959 735 953 733Z" fill="#39aea7"/><path d="M934 583 940 585 934 590Z" fill="#3db8b1"/><path d="M940 585 938 589 934 590Z" fill="#3fbfb8"/><path d="M934 590 938 589 936 594Z" fill="#36a49d"/><path d="M938 589 939 595 936 594Z" fill="#339b95"/><path d="M936 594 939 595 935 600Z" fill="#37a6a0"/><path d="M939 595 942 600 935 600Z" fill="#39aca5"/><path d="M935 600 942 600 938 603Z" fill="#36a59f"/><path d="M942 600 941 603 938 603Z" fill="#30918c"/><path d="M938 603 941 603 937 609Z" fill="#329691"/><path d="M941 603 944 609 937 609Z" fill="#38aba4"/><path d="M937 609 944 609 939 613Z" fill="#41c4bd"/><path d="M944 609 944 614 939 613Z" fill="#36a39d"/><path d="M939 613 944 614 941 618Z" fill="#36a49e"/><path d="M944 614 946 618 941 618Z" fill="#349d97"/><path d="M941 618 946 618 940 625Z" fill="#329892"/><path d="M946 618 945 624 940 625Z" fill="#30928d"/><path d="M940 625 945 624 940 630Z" fill="#30918b"/><path d="M945 624 946 629 940 630Z" fill="#31958f"/><path d="M940 630 946 629 941 634Z" fill="#38aba5"/><path d="M946 629 948 633 941 634Z" fill="#3bb2ab"/><path d="M941 634 948 633 942 639Z" fill="#3cb6af"/><path d="M948 633 946 639 942 639Z" fill="#3bb3ac"/><path d="M942 639 946 639 945 644Z" fill="#39aea7"/><path d="M946 639 949 643 945 644Z" fill="#37a6a0"/><path d="M945 644 949 643 944 649Z" fill="#30938e"/><path d="M949 643 949 648 944 649Z" fill="#31958f"/><path d="M944 649 949 648 944 653Z" fill="#2d8a85"/><path d="M949 648 949 654 944 653Z" fill="#2a807b"/><path d="M944 653 949 654 946 658Z" fill="#2c847f"/><path d="M949 654 952 659 946 658Z" fill="#2b827d"/><path d="M946 658 952 659 946 665Z" fill="#2f8f89"/><path d="M952 659 951 663 946 665Z" fill="#35a19a"/><path d="M946 665 951 663 946 670Z" fill="#37a8a2"/><path d="M951 663 954 669 946 670Z" fill="#3aafa8"/><path d="M946 670 954 669 950 675Z" fill="#2d8a85"/><path d="M954 669 953 675 950 675Z" fill="#2b827d"/><path d="M950 675 953 675 948 679Z" fill="#2b847f"/><path d="M953 675 955 679 948 679Z" fill="#287974"/><path d="M948 679 955 679 949 684Z" fill="#2a7e7a"/><path d="M955 679 954 685 949 684Z" fill="#2a807b"/><path d="M949 684 954 685 951 688Z" fill="#2e8c86"/><path d="M954 685 955 688 951 688Z" fill="#329892"/><path d="M951 688 955 688 950 694Z" fill="#35a19a"/><path d="M955 688 956 694 950 694Z" fill="#38aba5"/><path d="M950 694 956 694 951 698Z" fill="#3ab0a9"/><path d="M956 694 958 698 951 698Z" fill="#39aca5"/><path d="M951 698 958 698 953 705Z" fill="#37a7a0"/><path d="M958 698 959 704 953 705Z" fill="#39aca5"/><path d="M953 705 959 704 954 708Z" fill="#3cb5ae"/><path d="M959 704 958 710 954 708Z" fill="#3aafa9"/><path d="M954 708 958 710 956 715Z" fill="#37a7a1"/><path d="M958 710 961 715 956 715Z" fill="#35a09a"/><path d="M956 715 961 715 956 718Z" fill="#339b95"/><path d="M961 715 961 718 956 718Z" fill="#329993"/><path d="M956 718 961 718 955 724Z" fill="#31948f"/><path d="M961 718 962 725 955 724Z" fill="#2e8d88"/><path d="M955 724 962 725 957 728Z" fill="#339b95"/><path d="M962 725 962 730 957 728Z" fill="#38aaa3"/><path d="M957 728 962 730 959 735Z" fill="#38a9a2"/><path d="M962 730 965 734 959 735Z" fill="#38aaa4"/><path d="M940 585 945 585 938 589Z" fill="#3db8b1"/><path d="M945 585 946 587 938 589Z" fill="#3bb4ad"/><path d="M938 589 946 587 939 595Z" fill="#3bb3ac"/><path d="M946 587 945 594 939 595Z" fill="#3bb3ac"/><path d="M939 595 945 594 942 600Z" fill="#36a39d"/><path d="M945 594 947 600 942 600Z" fill="#36a59f"/><path d="M942 600 947 600 941 603Z" fill="#30938d"/><path d="M947 600 948 603 941 603Z" fill="#2f8e89"/><path d="M941 603 948 603 944 609Z" fill="#2e8d88"/><path d="M948 603 949 609 944 609Z" fill="#2e8c86"/><path d="M944 609 949 609 944 614Z" fill="#31958f"/><path d="M949 609 950 613 944 614Z" fill="#31958f"/><path d="M944 614 950 613 946 618Z" fill="#349f99"/><path d="M950 613 951 619 946 618Z" fill="#36a39d"/><path d="M946 618 951 619 945 624Z" fill="#30928d"/><path d="M951 619 951 625 945 624Z" fill="#2e8b86"/><path d="M945 624 951 625 946 629Z" fill="#2c8782"/><path d="M951 625 952 629 946 629Z" fill="#31948e"/><path d="M946 629 952 629 948 633Z" fill="#329993"/><path d="M952 629 951 634 948 633Z" fill="#339c96"/><path d="M948 633 951 634 946 639Z" fill="#39ada6"/><path d="M951 634 952 639 946 639Z" fill="#39ada6"/><path d="M946 639 952 639 949 643Z" fill="#38aaa4"/><path d="M952 639 955 644 949 643Z" fill="#349d97"/><path d="M949 643 955 644 949 648Z" fill="#30928d"/><path d="M955 644 953 647 949 648Z" fill="#2b847f"/><path d="M949 648 953 647 949 654Z" fill="#2b827d"/><path d="M953 647 955 654 949 654Z" fill="#2a7e79"/><path d="M949 654 955 654 952 659Z" fill="#2f8f89"/><path d="M955 654 954 660 952 659Z" fill="#2e8c87"/><path d="M952 659 954 660 951 663Z" fill="#31948e"/><path d="M954 660 956 663 951 663Z" fill="#339a94"/><path d="M951 663 956 663 954 669Z" fill="#39ada6"/><path d="M956 663 959 669 954 669Z" fill="#40c4bc"/><path d="M954 669 959 669 953 675Z" fill="#36a49d"/><path d="M959 669 960 674 953 675Z" fill="#339c96"/><path d="M953 675 960 674 955 679Z" fill="#329893"/><path d="M960 674 958 678 955 679Z" fill="#339b95"/><path d="M955 679 958 678 954 685Z" fill="#2f908a"/><path d="M958 678 960 684 954 685Z" fill="#339c96"/><path d="M954 685 960 684 955 688Z" fill="#35a29c"/><path d="M960 684 962 690 955 688Z" fill="#39aea7"/><path d="M955 688 962 690 956 694Z" fill="#36a39c"/><path d="M962 690 962 693 956 694Z" fill="#3bb2ab"/><path d="M956 694 962 693 958 698Z" fill="#329993"/><path d="M962 693 962 699 958 698Z" fill="#2a807b"/><path d="M958 698 962 699 959 704Z" fill="#2f8e89"/><path d="M962 699 963 703 959 704Z" fill="#329893"/><path d="M959 704 963 703 958 710Z" fill="#36a49d"/><path d="M963 703 964 709 958 710Z" fill="#30908b"/><path d="M958 710 964 709 961 715Z" fill="#349f99"/><path d="M964 709 963 715 961 715Z" fill="#339b95"/><path d="M961 715 963 715 961 718Z" fill="#329993"/><path d="M963 715 966 720 961 718Z" fill="#319690"/><path d="M961 718 966 720 962 725Z" fill="#319590"/><path d="M966 720 967 725 962 725Z" fill="#30938d"/><path d="M962 725 967 725 962 730Z" fill="#36a39c"/><path d="M967 725 969 729 962 730Z" fill="#38aaa4"/><path d="M962 730 969 729 965 734Z" fill="#3db8b1"/><path d="M969 729 968 732 965 734Z" fill="#3aafa9"/><path d="M945 585 950 584 946 587Z" fill="#36a39d"/><path d="M950 584 950 591 946 587Z" fill="#3ab1ab"/><path d="M946 587 950 591 945 594Z" fill="#3cb5ae"/><path d="M950 591 950 593 945 594Z" fill="#38aaa3"/><path d="M945 594 950 593 947 600Z" fill="#349d97"/><path d="M950 593 952 600 947 600Z" fill="#349e98"/><path d="M947 600 952 600 948 603Z" fill="#329892"/><path d="M952 600 952 603 948 603Z" fill="#30938d"/><path d="M948 603 952 603 949 609Z" fill="#2e8b86"/><path d="M952 603 953 610 949 609Z" fill="#2d8983"/><path d="M949 609 953 610 950 613Z" fill="#30918b"/><path d="M953 610 954 614 950 613Z" fill="#339a94"/><path d="M950 613 954 614 951 619Z" fill="#37a7a1"/><path d="M954 614 954 619 951 619Z" fill="#36a59f"/><path d="M951 619 954 619 951 625Z" fill="#329892"/><path d="M954 619 956 625 951 625Z" fill="#349e98"/><path d="M951 625 956 625 952 629Z" fill="#329791"/><path d="M956 625 957 630 952 629Z" fill="#329892"/><path d="M952 629 957 630 951 634Z" fill="#349e98"/><path d="M957 630 957 633 951 634Z" fill="#35a19b"/><path d="M951 634 957 633 952 639Z" fill="#38a9a2"/><path d="M957 633 959 640 952 639Z" fill="#2f908a"/><path d="M952 639 959 640 955 644Z" fill="#2d8984"/><path d="M959 640 960 643 955 644Z" fill="#287a76"/><path d="M955 644 960 643 953 647Z" fill="#277671"/><path d="M960 643 961 650 953 647Z" fill="#2c8782"/><path d="M953 647 961 650 955 654Z" fill="#2c847f"/><path d="M961 650 959 653 955 654Z" fill="#36a59e"/><path d="M955 654 959 653 954 660Z" fill="#31948e"/><path d="M959 653 961 658 954 660Z" fill="#329691"/><path d="M954 660 961 658 956 663Z" fill="#2d8a85"/><path d="M961 658 963 663 956 663Z" fill="#2a7f7a"/><path d="M956 663 963 663 959 669Z" fill="#39ada6"/><path d="M963 663 963 668 959 669Z" fill="#3cb6af"/><path d="M959 669 963 668 960 674Z" fill="#3ab1ab"/><path d="M963 668 962 673 960 674Z" fill="#37a7a1"/><path d="M960 674 962 673 958 678Z" fill="#36a49e"/><path d="M962 673 964 680 958 678Z" fill="#3cb6af"/><path d="M958 678 964 680 960 684Z" fill="#35a19b"/><path d="M964 680 964 685 960 684Z" fill="#38a8a2"/><path d="M960 684 964 685 962 690Z" fill="#39ada6"/><path d="M964 685 965 689 962 690Z" fill="#35a29e"/><path d="M962 690 965 689 962 693Z" fill="#3cb7b0"/><path d="M965 689 966 693 962 693Z" fill="#319896"/><path d="M962 693 966 693 962 699Z" fill="#30928d"/><path d="M966 693 966 698 962 699Z" fill="#247170"/><path d="M962 699 966 698 963 703Z" fill="#2a807c"/><path d="M966 698 969 704 963 703Z" fill="#206767"/><path d="M963 703 969 704 964 709Z" fill="#25716e"/><path d="M969 704 968 710 964 709Z" fill="#226c6b"/><path d="M964 709 968 710 963 715Z" fill="#30928c"/><path d="M968 710 970 712 963 715Z" fill="#287b77"/><path d="M963 715 970 712 966 720Z" fill="#31958f"/><path d="M970 712 971 719 966 720Z" fill="#2f918c"/><path d="M966 720 971 719 967 725Z" fill="#349f99"/><path d="M971 719 971 724 967 725Z" fill="#36a39d"/><path d="M967 725 971 724 969 729Z" fill="#38aaa4"/><path d="M971 724 974 729 969 729Z" fill="#40c2ba"/><path d="M969 729 974 729 968 732Z" fill="#3fc0b8"/><path d="M974 729 973 734 968 732Z" fill="#3db9b2"/><path d="M950 584 954 584 950 591Z" fill="#30938d"/><path d="M954 584 956 589 950 591Z" fill="#329993"/><path d="M950 591 956 589 950 593Z" fill="#38aaa4"/><path d="M956 589 955 594 950 593Z" fill="#36a59f"/><path d="M950 593 955 594 952 600Z" fill="#31958f"/><path d="M955 594 956 600 952 600Z" fill="#329792"/><path d="M952 600 956 600 952 603Z" fill="#31938e"/><path d="M956 600 956 604 952 603Z" fill="#30928c"/><path d="M952 603 956 604 953 610Z" fill="#2f8f8a"/><path d="M956 604 958 608 953 610Z" fill="#349f99"/><path d="M953 610 958 608 954 614Z" fill="#39aea7"/><path d="M958 608 959 614 954 614Z" fill="#3fc0b9"/><path d="M954 614 959 614 954 619Z" fill="#39aea7"/><path d="M959 614 958 619 954 619Z" fill="#3ab0a9"/><path d="M954 619 958 619 956 625Z" fill="#3bb2ac"/><path d="M958 619 959 625 956 625Z" fill="#39aea7"/><path d="M956 625 959 625 957 630Z" fill="#36a59f"/><path d="M959 625 961 628 957 630Z" fill="#39ada6"/><path d="M957 630 961 628 957 633Z" fill="#35a09a"/><path d="M961 628 961 633 957 633Z" fill="#35a09a"/><path d="M957 633 961 633 959 640Z" fill="#2e8d88"/><path d="M961 633 962 638 959 640Z" fill="#2a7f7a"/><path d="M959 640 962 638 960 643Z" fill="#297d78"/><path d="M962 638 964 645 960 643Z" fill="#2f8f8a"/><path d="M960 643 964 645 961 650Z" fill="#36a49e"/><path d="M964 645 964 648 961 650Z" fill="#3ab1aa"/><path d="M961 650 964 648 959 653Z" fill="#3bb4ad"/><path d="M964 648 965 653 959 653Z" fill="#39aea7"/><path d="M959 653 965 653 961 658Z" fill="#38aba4"/><path d="M965 653 966 660 961 658Z" fill="#329691"/><path d="M961 658 966 660 963 663Z" fill="#2b827d"/><path d="M966 660 966 665 963 663Z" fill="#2c8580"/><path d="M963 663 966 665 963 668Z" fill="#37a69f"/><path d="M966 665 968 668 963 668Z" fill="#37a7a0"/><path d="M963 668 968 668 962 673Z" fill="#37a7a1"/><path d="M968 668 968 674 962 673Z" fill="#2d8b88"/><path d="M962 673 968 674 964 680Z" fill="#3dbab4"/><path d="M968 674 968 678 964 680Z" fill="#2d8e8f"/><path d="M964 680 968 678 964 685Z" fill="#2c8b8b"/><path d="M968 678 970 685 964 685Z" fill="#1e6468"/><path d="M964 685 970 685 965 689Z" fill="#1f6669"/><path d="M970 685 971 690 965 689Z" fill="#19555a"/><path d="M965 689 971 690 966 693Z" fill="#1d6369"/><path d="M971 690 970 693 966 693Z" fill="#1c6167"/><path d="M966 693 970 693 966 698Z" fill="#1d6267"/><path d="M970 693 972 700 966 698Z" fill="#195459"/><path d="M966 698 972 700 969 704Z" fill="#164b50"/><path d="M972 700 973 705 969 704Z" fill="#174d52"/><path d="M969 704 973 705 968 710Z" fill="#1a5659"/><path d="M973 705 973 709 968 710Z" fill="#1d5f62"/><path d="M968 710 973 709 970 712Z" fill="#1f6465"/><path d="M973 709 976 715 970 712Z" fill="#216868"/><path d="M970 712 976 715 971 719Z" fill="#29817f"/><path d="M976 715 976 718 971 719Z" fill="#2c8a87"/><path d="M971 719 976 718 971 724Z" fill="#36a59f"/><path d="M976 718 978 723 971 724Z" fill="#39aba5"/><path d="M971 724 978 723 974 729Z" fill="#3cb6af"/><path d="M978 723 979 730 974 729Z" fill="#3cb7b0"/><path d="M974 729 979 730 973 734Z" fill="#3bb2ac"/><path d="M979 730 979 734 973 734Z" fill="#329892"/><path d="M954 584 958 583 956 589Z" fill="#349e98"/><path d="M958 583 960 589 956 589Z" fill="#37a8a2"/><path d="M956 589 960 589 955 594Z" fill="#31948e"/><path d="M960 589 960 595 955 594Z" fill="#2a807b"/><path d="M955 594 960 595 956 600Z" fill="#329892"/><path d="M960 595 960 598 956 600Z" fill="#30918c"/><path d="M956 600 960 598 956 604Z" fill="#2f8e88"/><path d="M960 598 961 603 956 604Z" fill="#319690"/><path d="M956 604 961 603 958 608Z" fill="#329892"/><path d="M961 603 964 610 958 608Z" fill="#37a8a2"/><path d="M958 608 964 610 959 614Z" fill="#39aea8"/><path d="M964 610 963 613 959 614Z" fill="#38aaa4"/><path d="M959 614 963 613 958 619Z" fill="#3fbfb7"/><path d="M963 613 963 620 958 619Z" fill="#3cb5ae"/><path d="M958 619 963 620 959 625Z" fill="#39aea8"/><path d="M963 620 965 623 959 625Z" fill="#3fbeb7"/><path d="M959 625 965 623 961 628Z" fill="#3bb2ab"/><path d="M965 623 966 630 961 628Z" fill="#3cb6af"/><path d="M961 628 966 630 961 633Z" fill="#3cb5ae"/><path d="M966 630 967 635 961 633Z" fill="#3cb7b0"/><path d="M961 633 967 635 962 638Z" fill="#36a59f"/><path d="M967 635 968 639 962 638Z" fill="#339a94"/><path d="M962 638 968 639 964 645Z" fill="#349d97"/><path d="M968 639 969 644 964 645Z" fill="#35a29c"/><path d="M964 645 969 644 964 648Z" fill="#3fbeb6"/><path d="M969 644 968 649 964 648Z" fill="#3ebbb3"/><path d="M964 648 968 649 965 653Z" fill="#3bb2ab"/><path d="M968 649 970 653 965 653Z" fill="#39ada6"/><path d="M965 653 970 653 966 660Z" fill="#339c96"/><path d="M970 653 970 660 966 660Z" fill="#319690"/><path d="M966 660 970 660 966 665Z" fill="#2b847f"/><path d="M970 660 972 663 966 665Z" fill="#2b827e"/><path d="M966 665 972 663 968 668Z" fill="#2a827e"/><path d="M972 663 971 668 968 668Z" fill="#277978"/><path d="M968 668 971 668 968 674Z" fill="#206767"/><path d="M971 668 975 673 968 674Z" fill="#1d5e64"/><path d="M968 674 975 673 968 678Z" fill="#1d6066"/><path d="M975 673 975 678 968 678Z" fill="#185257"/><path d="M968 678 975 678 970 685Z" fill="#185257"/><path d="M975 678 975 684 970 685Z" fill="#185358"/><path d="M970 685 975 684 971 690Z" fill="#19555a"/><path d="M975 684 977 689 971 690Z" fill="#1a5a5f"/><path d="M971 690 977 689 970 693Z" fill="#1b5d63"/><path d="M977 689 976 693 970 693Z" fill="#1c6167"/><path d="M970 693 976 693 972 700Z" fill="#1d6268"/><path d="M976 693 978 700 972 700Z" fill="#19575c"/><path d="M972 700 978 700 973 705Z" fill="#185257"/><path d="M978 700 979 704 973 705Z" fill="#227073"/><path d="M973 705 979 704 973 709Z" fill="#1e6367"/><path d="M979 704 978 710 973 709Z" fill="#1d6063"/><path d="M973 709 978 710 976 715Z" fill="#185256"/><path d="M978 710 981 713 976 715Z" fill="#164d51"/><path d="M976 715 981 713 976 718Z" fill="#185358"/><path d="M981 713 981 720 976 718Z" fill="#195459"/><path d="M976 718 981 720 978 723Z" fill="#2d8b89"/><path d="M981 720 982 725 978 723Z" fill="#39ada6"/><path d="M978 723 982 725 979 730Z" fill="#39ada6"/><path d="M982 725 983 728 979 730Z" fill="#37a7a0"/><path d="M979 730 983 728 979 734Z" fill="#2c8680"/><path d="M983 728 985 733 979 734Z" fill="#2b847f"/><path d="M958 583 964 586 960 589Z" fill="#39aca6"/><path d="M964 586 964 589 960 589Z" fill="#3cb5ae"/><path d="M960 589 964 589 960 595Z" fill="#2c8580"/><path d="M964 589 966 593 960 595Z" fill="#297e79"/><path d="M960 595 966 593 960 598Z" fill="#2b827d"/><path d="M966 593 966 600 960 598Z" fill="#30928c"/><path d="M960 598 966 600 961 603Z" fill="#35a19a"/><path d="M966 600 968 605 961 603Z" fill="#3ab0a9"/><path d="M961 603 968 605 964 610Z" fill="#35a19b"/><path d="M968 605 969 610 964 610Z" fill="#31948f"/><path d="M964 610 969 610 963 613Z" fill="#31958f"/><path d="M969 610 970 615 963 613Z" fill="#339a94"/><path d="M963 613 970 615 963 620Z" fill="#38a9a3"/><path d="M970 615 971 619 963 620Z" fill="#3db8b1"/><path d="M963 620 971 619 965 623Z" fill="#3ebdb5"/><path d="M971 619 971 624 965 623Z" fill="#38a9a2"/><path d="M965 623 971 624 966 630Z" fill="#329791"/><path d="M971 624 973 629 966 630Z" fill="#35a29b"/><path d="M966 630 973 629 967 635Z" fill="#39aea7"/><path d="M973 629 972 635 967 635Z" fill="#37a8a2"/><path d="M967 635 972 635 968 639Z" fill="#37a6a0"/><path d="M972 635 972 638 968 639Z" fill="#37a59f"/><path d="M968 639 972 638 969 644Z" fill="#30928c"/><path d="M972 638 973 643 969 644Z" fill="#339b95"/><path d="M969 644 973 643 968 649Z" fill="#3db9b2"/><path d="M973 643 973 648 968 649Z" fill="#3db8b1"/><path d="M968 649 973 648 970 653Z" fill="#3cb7b0"/><path d="M973 648 975 655 970 653Z" fill="#3ebcb5"/><path d="M970 653 975 655 970 660Z" fill="#3cb5ae"/><path d="M975 655 975 659 970 660Z" fill="#39aea7"/><path d="M970 660 975 659 972 663Z" fill="#329792"/><path d="M975 659 976 664 972 663Z" fill="#339a9d"/><path d="M972 663 976 664 971 668Z" fill="#2a8489"/><path d="M976 664 977 669 971 668Z" fill="#226977"/><path d="M971 668 977 669 975 673Z" fill="#1c5965"/><path d="M977 669 979 674 975 673Z" fill="#226683"/><path d="M975 673 979 674 975 678Z" fill="#1e5e6f"/><path d="M979 674 979 680 975 678Z" fill="#1e5d73"/><path d="M975 678 979 680 975 684Z" fill="#19545e"/><path d="M979 680 979 684 975 684Z" fill="#1e5f71"/><path d="M975 684 979 684 977 689Z" fill="#1c5c67"/><path d="M979 684 981 690 977 689Z" fill="#20637c"/><path d="M977 689 981 690 976 693Z" fill="#206578"/><path d="M981 690 983 693 976 693Z" fill="#277099"/><path d="M976 693 983 693 978 700Z" fill="#26748c"/><path d="M983 693 983 698 978 700Z" fill="#2d7fa6"/><path d="M978 700 983 698 979 704Z" fill="#3296a8"/><path d="M983 698 984 705 979 704Z" fill="#369fb1"/><path d="M979 704 984 705 978 710Z" fill="#1c5e62"/><path d="M984 705 983 709 978 710Z" fill="#164d52"/><path d="M978 710 983 709 981 713Z" fill="#164c50"/><path d="M983 709 986 714 981 713Z" fill="#15484c"/><path d="M981 713 986 714 981 720Z" fill="#185256"/><path d="M986 714 986 720 981 720Z" fill="#2c8a8a"/><path d="M981 720 986 720 982 725Z" fill="#3ebbb3"/><path d="M986 720 986 725 982 725Z" fill="#3db9b2"/><path d="M982 725 986 725 983 728Z" fill="#3ebbb4"/><path d="M986 725 986 728 983 728Z" fill="#3ebbb4"/><path d="M983 728 986 728 985 733Z" fill="#349d97"/><path d="M986 728 987 734 985 733Z" fill="#2d8a84"/><path d="M964 586 968 582 964 589Z" fill="#3db8b1"/><path d="M968 582 971 588 964 589Z" fill="#40c1ba"/><path d="M964 589 971 588 966 593Z" fill="#339a94"/><path d="M971 588 971 594 966 593Z" fill="#297e79"/><path d="M966 593 971 594 966 600Z" fill="#2a807b"/><path d="M971 594 973 600 966 600Z" fill="#31958f"/><path d="M966 600 973 600 968 605Z" fill="#3aafa8"/><path d="M973 600 973 603 968 605Z" fill="#2f8f8a"/><path d="M968 605 973 603 969 610Z" fill="#31938e"/><path d="M973 603 974 608 969 610Z" fill="#30928c"/><path d="M969 610 974 608 970 615Z" fill="#349d97"/><path d="M974 608 975 613 970 615Z" fill="#37a7a0"/><path d="M970 615 975 613 971 619Z" fill="#40c1b9"/><path d="M975 613 974 618 971 619Z" fill="#40c4bc"/><path d="M971 619 974 618 971 624Z" fill="#3fc0b9"/><path d="M974 618 975 625 971 624Z" fill="#35a29c"/><path d="M971 624 975 625 973 629Z" fill="#2f8f8a"/><path d="M975 625 977 630 973 629Z" fill="#30928c"/><path d="M973 629 977 630 972 635Z" fill="#35a09a"/><path d="M977 630 978 633 972 635Z" fill="#36a39d"/><path d="M972 635 978 633 972 638Z" fill="#37a69f"/><path d="M978 633 977 638 972 638Z" fill="#35a19b"/><path d="M972 638 977 638 973 643Z" fill="#35a19b"/><path d="M977 638 978 645 973 643Z" fill="#36a39c"/><path d="M973 643 978 645 973 648Z" fill="#3ab1aa"/><path d="M978 645 981 648 973 648Z" fill="#3dbab3"/><path d="M973 648 981 648 975 655Z" fill="#3db9b2"/><path d="M981 648 982 655 975 655Z" fill="#3db9b3"/><path d="M975 655 982 655 975 659Z" fill="#37a8ac"/><path d="M982 655 981 660 975 659Z" fill="#267096"/><path d="M975 659 981 660 976 664Z" fill="#2c80a0"/><path d="M981 660 983 663 976 664Z" fill="#1f5a89"/><path d="M976 664 983 663 977 669Z" fill="#236692"/><path d="M983 663 983 671 977 669Z" fill="#215f91"/><path d="M977 669 983 671 979 674Z" fill="#2f83bd"/><path d="M983 671 985 675 979 674Z" fill="#328ac5"/><path d="M979 674 985 675 979 680Z" fill="#2c7bb0"/><path d="M985 675 983 680 979 680Z" fill="#2c7baf"/><path d="M979 680 983 680 979 684Z" fill="#2b78a8"/><path d="M983 680 985 685 979 684Z" fill="#2e81b8"/><path d="M979 684 985 685 981 690Z" fill="#2972a2"/><path d="M985 685 985 689 981 690Z" fill="#266a97"/><path d="M981 690 985 689 983 693Z" fill="#286f9e"/><path d="M985 689 985 695 983 693Z" fill="#276e9d"/><path d="M983 693 985 695 983 698Z" fill="#28709f"/><path d="M985 695 988 697 983 698Z" fill="#276d9b"/><path d="M983 698 988 697 984 705Z" fill="#2d82a3"/><path d="M988 697 988 703 984 705Z" fill="#2b7c95"/><path d="M984 705 988 703 983 709Z" fill="#297c82"/><path d="M988 703 989 709 983 709Z" fill="#28797a"/><path d="M983 709 989 709 986 714Z" fill="#206367"/><path d="M989 709 988 715 986 714Z" fill="#2d8093"/><path d="M986 714 988 715 986 720Z" fill="#32939f"/><path d="M988 715 992 719 986 720Z" fill="#38a1b4"/><path d="M986 720 992 719 986 725Z" fill="#3db8b4"/><path d="M992 719 992 724 986 725Z" fill="#40c0bb"/><path d="M986 725 992 724 986 728Z" fill="#40c2ba"/><path d="M992 724 993 729 986 728Z" fill="#38aba5"/><path d="M986 728 993 729 987 734Z" fill="#319590"/><path d="M993 729 993 735 987 734Z" fill="#2f8f8a"/><path d="M968 582 973 583 971 588Z" fill="#36a59f"/><path d="M973 583 976 588 971 588Z" fill="#2d8a85"/><path d="M971 588 976 588 971 594Z" fill="#297d79"/><path d="M976 588 974 595 971 594Z" fill="#2a807b"/><path d="M971 594 974 595 973 600Z" fill="#2d8a85"/><path d="M974 595 975 599 973 600Z" fill="#31958f"/><path d="M973 600 975 599 973 603Z" fill="#2f8f8a"/><path d="M975 599 977 603 973 603Z" fill="#2d8883"/><path d="M973 603 977 603 974 608Z" fill="#297d78"/><path d="M977 603 978 609 974 608Z" fill="#30918c"/><path d="M974 608 978 609 975 613Z" fill="#36a49e"/><path d="M978 609 978 614 975 613Z" fill="#38aaa4"/><path d="M975 613 978 614 974 618Z" fill="#3dbab2"/><path d="M978 614 978 618 974 618Z" fill="#3fbeb6"/><path d="M974 618 978 618 975 625Z" fill="#3ab1aa"/><path d="M978 618 979 623 975 625Z" fill="#35a19b"/><path d="M975 625 979 623 977 630Z" fill="#2d8782"/><path d="M979 623 981 628 977 630Z" fill="#2f8d88"/><path d="M977 630 981 628 978 633Z" fill="#30928d"/><path d="M981 628 983 635 978 633Z" fill="#30938d"/><path d="M978 633 983 635 977 638Z" fill="#3bb2ab"/><path d="M983 635 983 640 977 638Z" fill="#3cb5ae"/><path d="M977 638 983 640 978 645Z" fill="#37a8a1"/><path d="M983 640 984 643 978 645Z" fill="#36a59e"/><path d="M978 645 984 643 981 648Z" fill="#39aea7"/><path d="M984 643 985 650 981 648Z" fill="#38aaa4"/><path d="M981 648 985 650 982 655Z" fill="#3bb2ae"/><path d="M985 650 985 655 982 655Z" fill="#287794"/><path d="M982 655 985 655 981 660Z" fill="#1c5381"/><path d="M985 655 986 660 981 660Z" fill="#1e598a"/><path d="M981 660 986 660 983 663Z" fill="#205e92"/><path d="M986 660 986 665 983 663Z" fill="#216095"/><path d="M983 663 986 665 983 671Z" fill="#1f5b8e"/><path d="M986 665 989 669 983 671Z" fill="#1f5b8e"/><path d="M983 671 989 669 985 675Z" fill="#2873aa"/><path d="M989 669 990 673 985 675Z" fill="#2870a4"/><path d="M985 675 990 673 983 680Z" fill="#2b78ab"/><path d="M990 673 990 678 983 680Z" fill="#2d7db2"/><path d="M983 680 990 678 985 685Z" fill="#2f83bb"/><path d="M990 678 991 684 985 685Z" fill="#2971a2"/><path d="M985 685 991 684 985 689Z" fill="#276d9c"/><path d="M991 684 991 688 985 689Z" fill="#256793"/><path d="M985 689 991 688 985 695Z" fill="#256792"/><path d="M991 688 991 695 985 695Z" fill="#256793"/><path d="M985 695 991 695 988 697Z" fill="#276c9a"/><path d="M991 695 993 699 988 697Z" fill="#2a76a5"/><path d="M988 697 993 699 988 703Z" fill="#2a789b"/><path d="M993 699 992 703 988 703Z" fill="#2b7c94"/><path d="M988 703 992 703 989 709Z" fill="#267078"/><path d="M992 703 995 708 989 709Z" fill="#2c7f8e"/><path d="M989 709 995 708 988 715Z" fill="#2c7b96"/><path d="M995 708 995 715 988 715Z" fill="#2f7ea6"/><path d="M988 715 995 715 992 719Z" fill="#338cb0"/><path d="M995 715 996 719 992 719Z" fill="#358eb9"/><path d="M992 719 996 719 992 724Z" fill="#39a2bb"/><path d="M996 719 998 725 992 724Z" fill="#3aa8b8"/><path d="M992 724 998 725 993 729Z" fill="#36a59f"/><path d="M998 725 996 729 993 729Z" fill="#349f99"/><path d="M993 729 996 729 993 735Z" fill="#339994"/><path d="M996 729 998 735 993 735Z" fill="#349e98"/><path d="M973 583 980 583 976 588Z" fill="#2c8580"/><path d="M980 583 980 589 976 588Z" fill="#287a75"/><path d="M976 588 980 589 974 595Z" fill="#2b837e"/><path d="M980 589 979 593 974 595Z" fill="#2e8d87"/><path d="M974 595 979 593 975 599Z" fill="#329993"/><path d="M979 593 981 598 975 599Z" fill="#3aafa8"/><path d="M975 599 981 598 977 603Z" fill="#349f99"/><path d="M981 598 983 606 977 603Z" fill="#31948e"/><path d="M977 603 983 606 978 609Z" fill="#2f8f89"/><path d="M983 606 984 609 978 609Z" fill="#39aca5"/><path d="M978 609 984 609 978 614Z" fill="#39aea7"/><path d="M984 609 985 614 978 614Z" fill="#3cb5ae"/><path d="M978 614 985 614 978 618Z" fill="#3aafa8"/><path d="M985 614 985 620 978 618Z" fill="#3bb1ab"/><path d="M978 618 985 620 979 623Z" fill="#38aba4"/><path d="M985 620 984 624 979 623Z" fill="#339b95"/><path d="M979 623 984 624 981 628Z" fill="#30918c"/><path d="M984 624 986 628 981 628Z" fill="#2f8e88"/><path d="M981 628 986 628 983 635Z" fill="#319690"/><path d="M986 628 987 633 983 635Z" fill="#35a19b"/><path d="M983 635 987 633 983 640Z" fill="#39aca6"/><path d="M987 633 988 640 983 640Z" fill="#3cb5ae"/><path d="M983 640 988 640 984 643Z" fill="#37a6a0"/><path d="M988 640 988 643 984 643Z" fill="#36a59e"/><path d="M984 643 988 643 985 650Z" fill="#37a8a1"/><path d="M988 643 989 650 985 650Z" fill="#38aaa4"/><path d="M985 650 989 650 985 655Z" fill="#2e8c96"/><path d="M989 650 989 655 985 655Z" fill="#236883"/><path d="M985 655 989 655 986 660Z" fill="#1c5382"/><path d="M989 655 990 659 986 660Z" fill="#1f5b8e"/><path d="M986 660 990 659 986 665Z" fill="#216198"/><path d="M990 659 993 665 986 665Z" fill="#205e92"/><path d="M986 665 993 665 989 669Z" fill="#205d91"/><path d="M993 665 991 670 989 669Z" fill="#216091"/><path d="M989 669 991 670 990 673Z" fill="#236494"/><path d="M991 670 995 674 990 673Z" fill="#276e9d"/><path d="M990 673 995 674 990 678Z" fill="#2e81b8"/><path d="M995 674 995 679 990 678Z" fill="#2971a2"/><path d="M990 678 995 679 991 684Z" fill="#23628b"/><path d="M995 679 994 684 991 684Z" fill="#205a80"/><path d="M991 684 994 684 991 688Z" fill="#215c83"/><path d="M994 684 997 689 991 688Z" fill="#225d85"/><path d="M991 688 997 689 991 695Z" fill="#2971a1"/><path d="M997 689 995 693 991 695Z" fill="#2b78ab"/><path d="M991 695 995 693 993 699Z" fill="#2a75a7"/><path d="M995 693 996 699 993 699Z" fill="#2c7ca3"/><path d="M993 699 996 699 992 703Z" fill="#2e859f"/><path d="M996 699 999 704 992 703Z" fill="#2f8b98"/><path d="M992 703 999 704 995 708Z" fill="#308a98"/><path d="M999 704 999 710 995 708Z" fill="#348fb3"/><path d="M995 708 999 710 995 715Z" fill="#3183ae"/><path d="M999 710 999 715 995 715Z" fill="#3183ae"/><path d="M995 715 999 715 996 719Z" fill="#3182ad"/><path d="M999 715 1000 719 996 719Z" fill="#3182ad"/><path d="M996 719 1000 719 998 725Z" fill="#3ba4c9"/><path d="M1000 719 1000 723 998 725Z" fill="#3ba6c4"/><path d="M998 725 1000 723 996 729Z" fill="#37a7a1"/><path d="M1000 723 1002 728 996 729Z" fill="#37a8a1"/><path d="M996 729 1002 728 998 735Z" fill="#38aaa4"/><path d="M1002 728 1003 734 998 735Z" fill="#3bb4ad"/><path d="M980 583 984 585 980 589Z" fill="#2c8782"/><path d="M984 585 985 588 980 589Z" fill="#2e8c87"/><path d="M980 589 985 588 979 593Z" fill="#2a7f7b"/><path d="M985 588 986 594 979 593Z" fill="#2e8b85"/><path d="M979 593 986 594 981 598Z" fill="#36a39d"/><path d="M986 594 987 601 981 598Z" fill="#35a09a"/><path d="M981 598 987 601 983 606Z" fill="#319690"/><path d="M987 601 987 603 983 606Z" fill="#30938d"/><path d="M983 606 987 603 984 609Z" fill="#39aca5"/><path d="M987 603 988 609 984 609Z" fill="#3bb2ab"/><path d="M984 609 988 609 985 614Z" fill="#3cb5ae"/><path d="M988 609 988 613 985 614Z" fill="#3cb7b0"/><path d="M985 614 988 613 985 620Z" fill="#3aafa8"/><path d="M988 613 989 619 985 620Z" fill="#35a29c"/><path d="M985 620 989 619 984 624Z" fill="#339a94"/><path d="M989 619 991 625 984 624Z" fill="#37a8a1"/><path d="M984 624 991 625 986 628Z" fill="#35a09a"/><path d="M991 625 992 630 986 628Z" fill="#2e8d87"/><path d="M986 628 992 630 987 633Z" fill="#30918b"/><path d="M992 630 992 634 987 633Z" fill="#339a94"/><path d="M987 633 992 634 988 640Z" fill="#3fbeb7"/><path d="M992 634 991 640 988 640Z" fill="#3cb5ae"/><path d="M988 640 991 640 988 643Z" fill="#39ada6"/><path d="M991 640 994 643 988 643Z" fill="#39ada6"/><path d="M988 643 994 643 989 650Z" fill="#39aba5"/><path d="M994 643 994 648 989 650Z" fill="#3bb3ac"/><path d="M989 650 994 648 989 655Z" fill="#339a94"/><path d="M994 648 996 654 989 655Z" fill="#2f8f8a"/><path d="M989 655 996 654 990 659Z" fill="#23688a"/><path d="M996 654 997 660 990 659Z" fill="#287694"/><path d="M990 659 997 660 993 665Z" fill="#205e8c"/><path d="M997 660 998 664 993 665Z" fill="#24678a"/><path d="M993 665 998 664 991 670Z" fill="#22608e"/><path d="M998 664 997 670 991 670Z" fill="#2a74a5"/><path d="M991 670 997 670 995 674Z" fill="#286e9e"/><path d="M997 670 1000 673 995 674Z" fill="#276d9c"/><path d="M995 674 1000 673 995 679Z" fill="#24648e"/><path d="M1000 673 999 680 995 679Z" fill="#1e5579"/><path d="M995 679 999 680 994 684Z" fill="#20587e"/><path d="M999 680 1001 683 994 684Z" fill="#20597f"/><path d="M994 684 1001 683 997 689Z" fill="#225e86"/><path d="M1001 683 1001 690 997 689Z" fill="#2c7aac"/><path d="M997 689 1001 690 995 693Z" fill="#2c7cb0"/><path d="M1001 690 1000 693 995 693Z" fill="#328dba"/><path d="M995 693 1000 693 996 699Z" fill="#2d81a7"/><path d="M1000 693 1003 700 996 699Z" fill="#39a8ba"/><path d="M996 699 1003 700 999 704Z" fill="#3cb5b9"/><path d="M1003 700 1005 704 999 704Z" fill="#3cb4b4"/><path d="M999 704 1005 704 999 710Z" fill="#328ba9"/><path d="M1005 704 1005 711 999 710Z" fill="#3183ae"/><path d="M999 710 1005 711 999 715Z" fill="#3287b3"/><path d="M1005 711 1004 713 999 715Z" fill="#2b749a"/><path d="M999 715 1004 713 1000 719Z" fill="#296d91"/><path d="M1004 713 1005 720 1000 719Z" fill="#2b7297"/><path d="M1000 719 1005 720 1000 723Z" fill="#3896c4"/><path d="M1005 720 1005 724 1000 723Z" fill="#399fc1"/><path d="M1000 723 1005 724 1002 728Z" fill="#3aacb1"/><path d="M1005 724 1009 728 1002 728Z" fill="#37a8a2"/><path d="M1002 728 1009 728 1003 734Z" fill="#3cb6af"/><path d="M1009 728 1008 734 1003 734Z" fill="#3ebdb5"/><path d="M984 585 990 584 985 588Z" fill="#319690"/><path d="M990 584 990 590 985 588Z" fill="#2f8f8a"/><path d="M985 588 990 590 986 594Z" fill="#2c8680"/><path d="M990 590 991 593 986 594Z" fill="#339994"/><path d="M986 594 991 593 987 601Z" fill="#38aaa3"/><path d="M991 593 992 599 987 601Z" fill="#349d97"/><path d="M987 601 992 599 987 603Z" fill="#2f8e89"/><path d="M992 599 994 605 987 603Z" fill="#2d8a85"/><path d="M987 603 994 605 988 609Z" fill="#35a09a"/><path d="M994 605 993 609 988 609Z" fill="#349d97"/><path d="M988 609 993 609 988 613Z" fill="#38a9a3"/><path d="M993 609 993 613 988 613Z" fill="#339b95"/><path d="M988 613 993 613 989 619Z" fill="#37a8a2"/><path d="M993 613 994 618 989 619Z" fill="#39aea7"/><path d="M989 619 994 618 991 625Z" fill="#349f99"/><path d="M994 618 996 623 991 625Z" fill="#38aba4"/><path d="M991 625 996 623 992 630Z" fill="#349f99"/><path d="M996 623 997 629 992 630Z" fill="#329993"/><path d="M992 630 997 629 992 634Z" fill="#2c8681"/><path d="M997 629 998 634 992 634Z" fill="#2a7f7a"/><path d="M992 634 998 634 991 640Z" fill="#3bb3ac"/><path d="M998 634 999 638 991 640Z" fill="#3ebbb4"/><path d="M991 640 999 638 994 643Z" fill="#3bb2ab"/><path d="M999 638 997 644 994 643Z" fill="#3db8b1"/><path d="M994 643 997 644 994 648Z" fill="#3bb2ac"/><path d="M997 644 999 651 994 648Z" fill="#35a19b"/><path d="M994 648 999 651 996 654Z" fill="#349e98"/><path d="M999 651 1002 655 996 654Z" fill="#2e8b86"/><path d="M996 654 1002 655 997 660Z" fill="#30908c"/><path d="M1002 655 1002 658 997 660Z" fill="#2e8b86"/><path d="M997 660 1002 658 998 664Z" fill="#2a7c88"/><path d="M1002 658 1002 664 998 664Z" fill="#2c828b"/><path d="M998 664 1002 664 997 670Z" fill="#2a7797"/><path d="M1002 664 1002 669 997 670Z" fill="#297894"/><path d="M997 670 1002 669 1000 673Z" fill="#29749d"/><path d="M1002 669 1003 674 1000 673Z" fill="#2e84a6"/><path d="M1000 673 1003 674 999 680Z" fill="#1e5474"/><path d="M1003 674 1003 679 999 680Z" fill="#215f7e"/><path d="M999 680 1003 679 1001 683Z" fill="#256891"/><path d="M1003 679 1004 685 1001 683Z" fill="#297696"/><path d="M1001 683 1004 685 1001 690Z" fill="#3089af"/><path d="M1004 685 1006 689 1001 690Z" fill="#38a3bc"/><path d="M1001 690 1006 689 1000 693Z" fill="#38a2bd"/><path d="M1006 689 1006 695 1000 693Z" fill="#3eb7c0"/><path d="M1000 693 1006 695 1003 700Z" fill="#39aaad"/><path d="M1006 695 1008 700 1003 700Z" fill="#3ebdb6"/><path d="M1003 700 1008 700 1005 704Z" fill="#3ebdb6"/><path d="M1008 700 1008 703 1005 704Z" fill="#36a1a0"/><path d="M1005 704 1008 703 1005 711Z" fill="#3188a6"/><path d="M1008 703 1009 708 1005 711Z" fill="#2e7ba0"/><path d="M1005 711 1009 708 1004 713Z" fill="#2e7ca5"/><path d="M1009 708 1011 713 1004 713Z" fill="#2f7fa9"/><path d="M1004 713 1011 713 1005 720Z" fill="#2a7095"/><path d="M1011 713 1011 718 1005 720Z" fill="#2f7ea8"/><path d="M1005 720 1011 718 1005 724Z" fill="#3183ac"/><path d="M1011 718 1012 723 1005 724Z" fill="#328aaa"/><path d="M1005 724 1012 723 1009 728Z" fill="#308e90"/><path d="M1012 723 1011 728 1009 728Z" fill="#329993"/><path d="M1009 728 1011 728 1008 734Z" fill="#3bb3ac"/><path d="M1011 728 1014 734 1008 734Z" fill="#3bb2ab"/><path d="M990 584 994 585 990 590Z" fill="#30928d"/><path d="M994 585 996 588 990 590Z" fill="#2e8b86"/><path d="M990 590 996 588 991 593Z" fill="#37a8a2"/><path d="M996 588 996 595 991 593Z" fill="#41c6bf"/><path d="M991 593 996 595 992 599Z" fill="#3ebdb5"/><path d="M996 595 997 599 992 599Z" fill="#38aaa4"/><path d="M992 599 997 599 994 605Z" fill="#2f8f8a"/><path d="M997 599 997 605 994 605Z" fill="#339a94"/><path d="M994 605 997 605 993 609Z" fill="#35a19b"/><path d="M997 605 997 609 993 609Z" fill="#37a7a1"/><path d="M993 609 997 609 993 613Z" fill="#35a29c"/><path d="M997 609 999 615 993 613Z" fill="#3bb3ac"/><path d="M993 613 999 615 994 618Z" fill="#37a8a1"/><path d="M999 615 999 620 994 618Z" fill="#3db8b1"/><path d="M994 618 999 620 996 623Z" fill="#3bb4ad"/><path d="M999 620 999 623 996 623Z" fill="#3cb6af"/><path d="M996 623 999 623 997 629Z" fill="#39aea7"/><path d="M999 623 1001 629 997 629Z" fill="#36a59f"/><path d="M997 629 1001 629 998 634Z" fill="#287b76"/><path d="M1001 629 1002 635 998 634Z" fill="#297b77"/><path d="M998 634 1002 635 999 638Z" fill="#38aaa4"/><path d="M1002 635 1002 639 999 638Z" fill="#3bb4ad"/><path d="M999 638 1002 639 997 644Z" fill="#3ebcb5"/><path d="M1002 639 1004 643 997 644Z" fill="#3ebbb4"/><path d="M997 644 1004 643 999 651Z" fill="#38aaa4"/><path d="M1004 643 1006 648 999 651Z" fill="#36a29c"/><path d="M999 651 1006 648 1002 655Z" fill="#339a94"/><path d="M1006 648 1004 653 1002 655Z" fill="#349d97"/><path d="M1002 655 1004 653 1002 658Z" fill="#2f908a"/><path d="M1004 653 1006 660 1002 658Z" fill="#30928c"/><path d="M1002 658 1006 660 1002 664Z" fill="#319590"/><path d="M1006 660 1006 665 1002 664Z" fill="#37a7a1"/><path d="M1002 664 1006 665 1002 669Z" fill="#349ba3"/><path d="M1006 665 1008 668 1002 669Z" fill="#38aba8"/><path d="M1002 669 1008 668 1003 674Z" fill="#38a7b3"/><path d="M1008 668 1010 675 1003 674Z" fill="#37a8a3"/><path d="M1003 674 1010 675 1003 679Z" fill="#2e8997"/><path d="M1010 675 1009 680 1003 679Z" fill="#309293"/><path d="M1003 679 1009 680 1004 685Z" fill="#2f8a9b"/><path d="M1009 680 1009 684 1004 685Z" fill="#37a4a5"/><path d="M1004 685 1009 684 1006 689Z" fill="#38a6ab"/><path d="M1009 684 1011 690 1006 689Z" fill="#35a19b"/><path d="M1006 689 1011 690 1006 695Z" fill="#3fc0b8"/><path d="M1011 690 1011 694 1006 695Z" fill="#42c7bf"/><path d="M1006 695 1011 694 1008 700Z" fill="#40c1b9"/><path d="M1011 694 1011 700 1008 700Z" fill="#39ada6"/><path d="M1008 700 1011 700 1008 703Z" fill="#349d97"/><path d="M1011 700 1012 705 1008 703Z" fill="#308f8d"/><path d="M1008 703 1012 705 1009 708Z" fill="#2d7e92"/><path d="M1012 705 1013 709 1009 708Z" fill="#3084a6"/><path d="M1009 708 1013 709 1011 713Z" fill="#3285b1"/><path d="M1013 709 1016 713 1011 713Z" fill="#348cba"/><path d="M1011 713 1016 713 1011 718Z" fill="#358ebd"/><path d="M1016 713 1016 719 1011 718Z" fill="#3b9cd0"/><path d="M1011 718 1016 719 1012 723Z" fill="#3a9dc7"/><path d="M1016 719 1017 724 1012 723Z" fill="#3495a8"/><path d="M1012 723 1017 724 1011 728Z" fill="#31938f"/><path d="M1017 724 1018 728 1011 728Z" fill="#30928c"/><path d="M1011 728 1018 728 1014 734Z" fill="#36a29c"/><path d="M1018 728 1017 732 1014 734Z" fill="#36a49e"/><path d="M994 585 999 584 996 588Z" fill="#2d8883"/><path d="M999 584 1001 588 996 588Z" fill="#267470"/><path d="M996 588 1001 588 996 595Z" fill="#349d97"/><path d="M1001 588 1001 594 996 595Z" fill="#3ab1ab"/><path d="M996 595 1001 594 997 599Z" fill="#39aea7"/><path d="M1001 594 1001 600 997 599Z" fill="#329892"/><path d="M997 599 1001 600 997 605Z" fill="#2f908b"/><path d="M1001 600 1002 604 997 605Z" fill="#2d8984"/><path d="M997 605 1002 604 997 609Z" fill="#30928c"/><path d="M1002 604 1003 608 997 609Z" fill="#339a95"/><path d="M997 609 1003 608 999 615Z" fill="#35a29c"/><path d="M1003 608 1005 614 999 615Z" fill="#3cb6af"/><path d="M999 615 1005 614 999 620Z" fill="#42c8c1"/><path d="M1005 614 1003 619 999 620Z" fill="#3bb4ad"/><path d="M999 620 1003 619 999 623Z" fill="#3db9b2"/><path d="M1003 619 1007 626 999 623Z" fill="#329691"/><path d="M999 623 1007 626 1001 629Z" fill="#349f99"/><path d="M1007 626 1006 628 1001 629Z" fill="#339a95"/><path d="M1001 629 1006 628 1002 635Z" fill="#30908b"/><path d="M1006 628 1008 633 1002 635Z" fill="#2f908a"/><path d="M1002 635 1008 633 1002 639Z" fill="#36a59f"/><path d="M1008 633 1006 638 1002 639Z" fill="#35a29b"/><path d="M1002 639 1006 638 1004 643Z" fill="#3ab1aa"/><path d="M1006 638 1009 645 1004 643Z" fill="#3bb3ad"/><path d="M1004 643 1009 645 1006 648Z" fill="#39aea7"/><path d="M1009 645 1008 648 1006 648Z" fill="#3bb2ab"/><path d="M1006 648 1008 648 1004 653Z" fill="#3bb4ad"/><path d="M1008 648 1011 654 1004 653Z" fill="#3dbab3"/><path d="M1004 653 1011 654 1006 660Z" fill="#329792"/><path d="M1011 654 1010 660 1006 660Z" fill="#30918c"/><path d="M1006 660 1010 660 1006 665Z" fill="#349d97"/><path d="M1010 660 1012 665 1006 665Z" fill="#3bb2ab"/><path d="M1006 665 1012 665 1008 668Z" fill="#3bb4ad"/><path d="M1012 665 1013 670 1008 668Z" fill="#37a8a2"/><path d="M1008 668 1013 670 1010 675Z" fill="#329892"/><path d="M1013 670 1013 676 1010 675Z" fill="#2a7f7b"/><path d="M1010 675 1013 676 1009 680Z" fill="#31958f"/><path d="M1013 676 1015 680 1009 680Z" fill="#35a29c"/><path d="M1009 680 1015 680 1009 684Z" fill="#39aba5"/><path d="M1015 680 1015 684 1009 684Z" fill="#3cb7b0"/><path d="M1009 684 1015 684 1011 690Z" fill="#3aafa8"/><path d="M1015 684 1015 688 1011 690Z" fill="#37a7a1"/><path d="M1011 690 1015 688 1011 694Z" fill="#3cb5ae"/><path d="M1015 688 1018 695 1011 694Z" fill="#3ab0a9"/><path d="M1011 694 1018 695 1011 700Z" fill="#35a099"/><path d="M1018 695 1018 700 1011 700Z" fill="#2d8a85"/><path d="M1011 700 1018 700 1012 705Z" fill="#2a817c"/><path d="M1018 700 1018 706 1012 705Z" fill="#277773"/><path d="M1012 705 1018 706 1013 709Z" fill="#2f849a"/><path d="M1018 706 1019 711 1013 709Z" fill="#379bb9"/><path d="M1013 709 1019 711 1016 713Z" fill="#3897c6"/><path d="M1019 711 1018 714 1016 713Z" fill="#3a9dca"/><path d="M1016 713 1018 714 1016 719Z" fill="#3ca1d5"/><path d="M1018 714 1021 720 1016 719Z" fill="#389abc"/><path d="M1016 719 1021 720 1017 724Z" fill="#379eaf"/><path d="M1021 720 1021 725 1017 724Z" fill="#339c97"/><path d="M1017 724 1021 725 1018 728Z" fill="#2d8a85"/><path d="M1021 725 1022 730 1018 728Z" fill="#2c8580"/><path d="M1018 728 1022 730 1017 732Z" fill="#349f99"/><path d="M1022 730 1024 734 1017 732Z" fill="#3db8b1"/><path d="M999 584 1002 585 1001 588Z" fill="#297d78"/><path d="M1002 585 1003 588 1001 588Z" fill="#287a76"/><path d="M1001 588 1003 588 1001 594Z" fill="#2d8984"/><path d="M1003 588 1004 595 1001 594Z" fill="#35a099"/><path d="M1001 594 1004 595 1001 600Z" fill="#38a9a2"/><path d="M1004 595 1005 600 1001 600Z" fill="#38aaa3"/><path d="M1001 600 1005 600 1002 604Z" fill="#349f99"/><path d="M1005 600 1006 603 1002 604Z" fill="#37a69f"/><path d="M1002 604 1006 603 1003 608Z" fill="#39ada6"/><path d="M1006 603 1009 610 1003 608Z" fill="#3ab0aa"/><path d="M1003 608 1009 610 1005 614Z" fill="#3cb5ae"/><path d="M1009 610 1007 614 1005 614Z" fill="#37a8a1"/><path d="M1005 614 1007 614 1003 619Z" fill="#35a099"/><path d="M1007 614 1009 619 1003 619Z" fill="#329792"/><path d="M1003 619 1009 619 1007 626Z" fill="#2f8d88"/><path d="M1009 619 1009 622 1007 626Z" fill="#30938d"/><path d="M1007 626 1009 622 1006 628Z" fill="#349f99"/><path d="M1009 622 1010 630 1006 628Z" fill="#349c96"/><path d="M1006 628 1010 630 1008 633Z" fill="#2e8c86"/><path d="M1010 630 1012 634 1008 633Z" fill="#2e8a85"/><path d="M1008 633 1012 634 1006 638Z" fill="#2c8580"/><path d="M1012 634 1012 640 1006 638Z" fill="#31958f"/><path d="M1006 638 1012 640 1009 645Z" fill="#3cb5ae"/><path d="M1012 640 1015 643 1009 645Z" fill="#3db9b2"/><path d="M1009 645 1015 643 1008 648Z" fill="#3db9b2"/><path d="M1015 643 1015 650 1008 648Z" fill="#3bb3ac"/><path d="M1008 648 1015 650 1011 654Z" fill="#3fbeb7"/><path d="M1015 650 1017 654 1011 654Z" fill="#39ada7"/><path d="M1011 654 1017 654 1010 660Z" fill="#2f8e89"/><path d="M1017 654 1016 659 1010 660Z" fill="#329892"/><path d="M1010 660 1016 659 1012 665Z" fill="#37a7a1"/><path d="M1016 659 1018 663 1012 665Z" fill="#38aaa3"/><path d="M1012 665 1018 663 1013 670Z" fill="#3aafa9"/><path d="M1018 663 1018 669 1013 670Z" fill="#37a6a0"/><path d="M1013 670 1018 669 1013 676Z" fill="#2b827d"/><path d="M1018 669 1020 675 1013 676Z" fill="#2d8984"/><path d="M1013 676 1020 675 1015 680Z" fill="#36a59f"/><path d="M1020 675 1018 678 1015 680Z" fill="#39aca5"/><path d="M1015 680 1018 678 1015 684Z" fill="#3aafa9"/><path d="M1018 678 1020 684 1015 684Z" fill="#3fbfb8"/><path d="M1015 684 1020 684 1015 688Z" fill="#3bb4ad"/><path d="M1020 684 1021 688 1015 688Z" fill="#36a39d"/><path d="M1015 688 1021 688 1018 695Z" fill="#36a59f"/><path d="M1021 688 1022 694 1018 695Z" fill="#38a9a3"/><path d="M1018 695 1022 694 1018 700Z" fill="#2e8a85"/><path d="M1022 694 1022 699 1018 700Z" fill="#2d8a85"/><path d="M1018 700 1022 699 1018 706Z" fill="#2d8883"/><path d="M1022 699 1023 706 1018 706Z" fill="#31948e"/><path d="M1018 706 1023 706 1019 711Z" fill="#3aa9b2"/><path d="M1023 706 1023 710 1019 711Z" fill="#3bacb8"/><path d="M1019 711 1023 710 1018 714Z" fill="#3ba4c4"/><path d="M1023 710 1025 714 1018 714Z" fill="#389eb4"/><path d="M1018 714 1025 714 1021 720Z" fill="#3699b1"/><path d="M1025 714 1024 719 1021 720Z" fill="#37a2aa"/><path d="M1021 720 1024 719 1021 725Z" fill="#36a39d"/><path d="M1024 719 1027 724 1021 725Z" fill="#37a8a2"/><path d="M1021 725 1027 724 1022 730Z" fill="#31948e"/><path d="M1027 724 1028 729 1022 730Z" fill="#30908b"/><path d="M1022 730 1028 729 1024 734Z" fill="#349f99"/><path d="M1028 729 1027 735 1024 734Z" fill="#38a9a3"/><path d="M1002 585 1008 584 1003 588Z" fill="#2b837e"/><path d="M1008 584 1011 590 1003 588Z" fill="#2b847f"/><path d="M1003 588 1011 590 1004 595Z" fill="#2e8d87"/><path d="M1011 590 1012 594 1004 595Z" fill="#319690"/><path d="M1004 595 1012 594 1005 600Z" fill="#35a19b"/><path d="M1012 594 1013 598 1005 600Z" fill="#329993"/><path d="M1005 600 1013 598 1006 603Z" fill="#37a6a0"/><path d="M1013 598 1012 604 1006 603Z" fill="#36a59f"/><path d="M1006 603 1012 604 1009 610Z" fill="#36a49d"/><path d="M1012 604 1014 610 1009 610Z" fill="#329893"/><path d="M1009 610 1014 610 1007 614Z" fill="#31958f"/><path d="M1014 610 1014 615 1007 614Z" fill="#2b847f"/><path d="M1007 614 1014 615 1009 619Z" fill="#2d8782"/><path d="M1014 615 1014 619 1009 619Z" fill="#2d8983"/><path d="M1009 619 1014 619 1009 622Z" fill="#30918c"/><path d="M1014 619 1014 624 1009 622Z" fill="#329892"/><path d="M1009 622 1014 624 1010 630Z" fill="#30938d"/><path d="M1014 624 1015 630 1010 630Z" fill="#2b847f"/><path d="M1010 630 1015 630 1012 634Z" fill="#2d8882"/><path d="M1015 630 1016 635 1012 634Z" fill="#2d8984"/><path d="M1012 634 1016 635 1012 640Z" fill="#329792"/><path d="M1016 635 1018 639 1012 640Z" fill="#329993"/><path d="M1012 640 1018 639 1015 643Z" fill="#35a09a"/><path d="M1018 639 1017 644 1015 643Z" fill="#39ada6"/><path d="M1015 643 1017 644 1015 650Z" fill="#3fbfb8"/><path d="M1017 644 1020 648 1015 650Z" fill="#40c2bb"/><path d="M1015 650 1020 648 1017 654Z" fill="#3aafa8"/><path d="M1020 648 1022 654 1017 654Z" fill="#39aca5"/><path d="M1017 654 1022 654 1016 659Z" fill="#39ada6"/><path d="M1022 654 1021 658 1016 659Z" fill="#38aba5"/><path d="M1016 659 1021 658 1018 663Z" fill="#349d97"/><path d="M1021 658 1021 663 1018 663Z" fill="#36a39d"/><path d="M1018 663 1021 663 1018 669Z" fill="#38a9a2"/><path d="M1021 663 1024 668 1018 669Z" fill="#349d97"/><path d="M1018 669 1024 668 1020 675Z" fill="#30918c"/><path d="M1024 668 1023 674 1020 675Z" fill="#329791"/><path d="M1020 675 1023 674 1018 678Z" fill="#37a6a0"/><path d="M1023 674 1024 678 1018 678Z" fill="#37a8a1"/><path d="M1018 678 1024 678 1020 684Z" fill="#40c3bb"/><path d="M1024 678 1025 683 1020 684Z" fill="#3aafa8"/><path d="M1020 684 1025 683 1021 688Z" fill="#37a8a2"/><path d="M1025 683 1025 689 1021 688Z" fill="#329791"/><path d="M1021 688 1025 689 1022 694Z" fill="#38aaa4"/><path d="M1025 689 1027 694 1022 694Z" fill="#39ada7"/><path d="M1022 694 1027 694 1022 699Z" fill="#339b95"/><path d="M1027 694 1027 699 1022 699Z" fill="#35a09a"/><path d="M1022 699 1027 699 1023 706Z" fill="#38a9a3"/><path d="M1027 699 1027 704 1023 706Z" fill="#39ada7"/><path d="M1023 706 1027 704 1023 710Z" fill="#38a9a3"/><path d="M1027 704 1028 709 1023 710Z" fill="#3aafa8"/><path d="M1023 710 1028 709 1025 714Z" fill="#359f9f"/><path d="M1028 709 1030 714 1025 714Z" fill="#339a94"/><path d="M1025 714 1030 714 1024 719Z" fill="#37a5a0"/><path d="M1030 714 1032 720 1024 719Z" fill="#339b95"/><path d="M1024 719 1032 720 1027 724Z" fill="#36a49e"/><path d="M1032 720 1033 723 1027 724Z" fill="#3db9b2"/><path d="M1027 724 1033 723 1028 729Z" fill="#3bb3ac"/><path d="M1033 723 1034 729 1028 729Z" fill="#329993"/><path d="M1028 729 1034 729 1027 735Z" fill="#2f8f89"/><path d="M1034 729 1033 734 1027 735Z" fill="#319690"/><path d="M1008 584 1015 585 1011 590Z" fill="#30918c"/><path d="M1015 585 1016 588 1011 590Z" fill="#2e8d87"/><path d="M1011 590 1016 588 1012 594Z" fill="#31948e"/><path d="M1016 588 1014 593 1012 594Z" fill="#349e98"/><path d="M1012 594 1014 593 1013 598Z" fill="#329791"/><path d="M1014 593 1017 600 1013 598Z" fill="#349d97"/><path d="M1013 598 1017 600 1012 604Z" fill="#329892"/><path d="M1017 600 1016 602 1012 604Z" fill="#2e8d88"/><path d="M1012 604 1016 602 1014 610Z" fill="#2f908a"/><path d="M1016 602 1020 608 1014 610Z" fill="#2a807b"/><path d="M1014 610 1020 608 1014 615Z" fill="#2b827d"/><path d="M1020 608 1017 614 1014 615Z" fill="#2c8681"/><path d="M1014 615 1017 614 1014 619Z" fill="#329993"/><path d="M1017 614 1018 620 1014 619Z" fill="#349d97"/><path d="M1014 619 1018 620 1014 624Z" fill="#36a49d"/><path d="M1018 620 1020 624 1014 624Z" fill="#329993"/><path d="M1014 624 1020 624 1015 630Z" fill="#2d8984"/><path d="M1020 624 1023 628 1015 630Z" fill="#2f8f89"/><path d="M1015 630 1023 628 1016 635Z" fill="#2b827d"/><path d="M1023 628 1021 635 1016 635Z" fill="#2d8984"/><path d="M1016 635 1021 635 1018 639Z" fill="#339b95"/><path d="M1021 635 1023 639 1018 639Z" fill="#339b95"/><path d="M1018 639 1023 639 1017 644Z" fill="#36a49e"/><path d="M1023 639 1023 644 1017 644Z" fill="#3ab1aa"/><path d="M1017 644 1023 644 1020 648Z" fill="#3ebbb4"/><path d="M1023 644 1026 650 1020 648Z" fill="#3dbab3"/><path d="M1020 648 1026 650 1022 654Z" fill="#3bb4ad"/><path d="M1026 650 1027 656 1022 654Z" fill="#36a49e"/><path d="M1022 654 1027 656 1021 658Z" fill="#31948e"/><path d="M1027 656 1025 657 1021 658Z" fill="#319690"/><path d="M1021 658 1025 657 1021 663Z" fill="#39aea8"/><path d="M1025 657 1028 663 1021 663Z" fill="#3aafa9"/><path d="M1021 663 1028 663 1024 668Z" fill="#319590"/><path d="M1028 663 1028 669 1024 668Z" fill="#2b827d"/><path d="M1024 668 1028 669 1023 674Z" fill="#2c8681"/><path d="M1028 669 1030 674 1023 674Z" fill="#329791"/><path d="M1023 674 1030 674 1024 678Z" fill="#329892"/><path d="M1030 674 1028 678 1024 678Z" fill="#329791"/><path d="M1024 678 1028 678 1025 683Z" fill="#36a39d"/><path d="M1028 678 1031 685 1025 683Z" fill="#31958f"/><path d="M1025 683 1031 685 1025 689Z" fill="#2c8782"/><path d="M1031 685 1030 690 1025 689Z" fill="#2c8782"/><path d="M1025 689 1030 690 1027 694Z" fill="#35a29c"/><path d="M1030 690 1031 695 1027 694Z" fill="#2f8d88"/><path d="M1027 694 1031 695 1027 699Z" fill="#2e8a85"/><path d="M1031 695 1033 700 1027 699Z" fill="#349d97"/><path d="M1027 699 1033 700 1027 704Z" fill="#39ada6"/><path d="M1033 700 1033 702 1027 704Z" fill="#37a6a0"/><path d="M1027 704 1033 702 1028 709Z" fill="#3ab0aa"/><path d="M1033 702 1034 710 1028 709Z" fill="#35a19b"/><path d="M1028 709 1034 710 1030 714Z" fill="#36a39d"/><path d="M1034 710 1035 715 1030 714Z" fill="#35a09a"/><path d="M1030 714 1035 715 1032 720Z" fill="#35a19b"/><path d="M1035 715 1035 719 1032 720Z" fill="#2f8e89"/><path d="M1032 720 1035 719 1033 723Z" fill="#37a6a0"/><path d="M1035 719 1036 723 1033 723Z" fill="#39aba1"/><path d="M1033 723 1036 723 1034 729Z" fill="#3ab0a9"/><path d="M1036 723 1037 730 1034 729Z" fill="#3aaa9c"/><path d="M1034 729 1037 730 1033 734Z" fill="#3aaea5"/><path d="M1037 730 1038 735 1033 734Z" fill="#41bcaa"/><path d="M1015 585 1018 584 1016 588Z" fill="#36a49e"/><path d="M1018 584 1020 589 1016 588Z" fill="#349f99"/><path d="M1016 588 1020 589 1014 593Z" fill="#339b95"/><path d="M1020 589 1019 595 1014 593Z" fill="#349c96"/><path d="M1014 593 1019 595 1017 600Z" fill="#37a7a0"/><path d="M1019 595 1020 600 1017 600Z" fill="#2f8f8a"/><path d="M1017 600 1020 600 1016 602Z" fill="#2b837e"/><path d="M1020 600 1024 603 1016 602Z" fill="#287974"/><path d="M1016 602 1024 603 1020 608Z" fill="#277873"/><path d="M1024 603 1022 608 1020 608Z" fill="#287a75"/><path d="M1020 608 1022 608 1017 614Z" fill="#2c857f"/><path d="M1022 608 1024 616 1017 614Z" fill="#2e8b85"/><path d="M1017 614 1024 616 1018 620Z" fill="#2e8b86"/><path d="M1024 616 1023 618 1018 620Z" fill="#2d8984"/><path d="M1018 620 1023 618 1020 624Z" fill="#31948e"/><path d="M1023 618 1027 623 1020 624Z" fill="#339c96"/><path d="M1020 624 1027 623 1023 628Z" fill="#349f99"/><path d="M1027 623 1027 630 1023 628Z" fill="#30938d"/><path d="M1023 628 1027 630 1021 635Z" fill="#2f8e88"/><path d="M1027 630 1025 632 1021 635Z" fill="#31948e"/><path d="M1021 635 1025 632 1023 639Z" fill="#2f908a"/><path d="M1025 632 1029 640 1023 639Z" fill="#35a09a"/><path d="M1023 639 1029 640 1023 644Z" fill="#3bb2ab"/><path d="M1029 640 1029 644 1023 644Z" fill="#3db8b1"/><path d="M1023 644 1029 644 1026 650Z" fill="#3bb4ad"/><path d="M1029 644 1028 649 1026 650Z" fill="#38aaa4"/><path d="M1026 650 1028 649 1027 656Z" fill="#319690"/><path d="M1028 649 1029 653 1027 656Z" fill="#2f8e89"/><path d="M1027 656 1029 653 1025 657Z" fill="#31938e"/><path d="M1029 653 1030 659 1025 657Z" fill="#339994"/><path d="M1025 657 1030 659 1028 663Z" fill="#319691"/><path d="M1030 659 1032 663 1028 663Z" fill="#2f8f8a"/><path d="M1028 663 1032 663 1028 669Z" fill="#2a7f7a"/><path d="M1032 663 1032 668 1028 669Z" fill="#2a7f7a"/><path d="M1028 669 1032 668 1030 674Z" fill="#2a817c"/><path d="M1032 668 1032 673 1030 674Z" fill="#2c8580"/><path d="M1030 674 1032 673 1028 678Z" fill="#30908b"/><path d="M1032 673 1036 678 1028 678Z" fill="#2d8882"/><path d="M1028 678 1036 678 1031 685Z" fill="#2e8c86"/><path d="M1036 678 1036 684 1031 685Z" fill="#2d8882"/><path d="M1031 685 1036 684 1030 690Z" fill="#2b837e"/><path d="M1036 684 1036 688 1030 690Z" fill="#2a817c"/><path d="M1030 690 1036 688 1031 695Z" fill="#297d78"/><path d="M1036 688 1038 695 1031 695Z" fill="#28756d"/><path d="M1031 695 1038 695 1033 700Z" fill="#2f8e89"/><path d="M1038 695 1037 699 1033 700Z" fill="#35988a"/><path d="M1033 700 1037 699 1033 702Z" fill="#329790"/><path d="M1037 699 1040 703 1033 702Z" fill="#349383"/><path d="M1033 702 1040 703 1034 710Z" fill="#3aa79a"/><path d="M1040 703 1040 709 1034 710Z" fill="#41b49a"/><path d="M1034 710 1040 709 1035 715Z" fill="#3fb6a3"/><path d="M1040 709 1040 714 1035 715Z" fill="#3eaa90"/><path d="M1035 715 1040 714 1035 719Z" fill="#2a796b"/><path d="M1040 714 1041 718 1035 719Z" fill="#2f7e69"/><path d="M1035 719 1041 718 1036 723Z" fill="#369682"/><path d="M1041 718 1041 724 1036 723Z" fill="#3da587"/><path d="M1036 723 1041 724 1037 730Z" fill="#40b097"/><path d="M1041 724 1041 728 1037 730Z" fill="#42af8e"/><path d="M1037 730 1041 728 1038 735Z" fill="#46bd9c"/><path d="M1041 728 1044 734 1038 735Z" fill="#47b68d"/><path d="M1018 584 1025 584 1020 589Z" fill="#37a7a1"/><path d="M1025 584 1026 588 1020 589Z" fill="#36a49e"/><path d="M1020 589 1026 588 1019 595Z" fill="#339a94"/><path d="M1026 588 1026 594 1019 595Z" fill="#37a7a1"/><path d="M1019 595 1026 594 1020 600Z" fill="#349f99"/><path d="M1026 594 1027 598 1020 600Z" fill="#30918c"/><path d="M1020 600 1027 598 1024 603Z" fill="#25726d"/><path d="M1027 598 1027 604 1024 603Z" fill="#2f8e88"/><path d="M1024 603 1027 604 1022 608Z" fill="#2b817d"/><path d="M1027 604 1028 608 1022 608Z" fill="#2c8680"/><path d="M1022 608 1028 608 1024 616Z" fill="#2b837e"/><path d="M1028 608 1029 616 1024 616Z" fill="#30918c"/><path d="M1024 616 1029 616 1023 618Z" fill="#2b827d"/><path d="M1029 616 1028 621 1023 618Z" fill="#2d8882"/><path d="M1023 618 1028 621 1027 623Z" fill="#30918b"/><path d="M1028 621 1032 624 1027 623Z" fill="#31948e"/><path d="M1027 623 1032 624 1027 630Z" fill="#339a94"/><path d="M1032 624 1030 629 1027 630Z" fill="#329791"/><path d="M1027 630 1030 629 1025 632Z" fill="#349f99"/><path d="M1030 629 1033 632 1025 632Z" fill="#37a7a0"/><path d="M1025 632 1033 632 1029 640Z" fill="#36a49e"/><path d="M1033 632 1034 640 1029 640Z" fill="#3aaea8"/><path d="M1029 640 1034 640 1029 644Z" fill="#38aaa4"/><path d="M1034 640 1032 644 1029 644Z" fill="#349f99"/><path d="M1029 644 1032 644 1028 649Z" fill="#339c96"/><path d="M1032 644 1033 648 1028 649Z" fill="#2c8681"/><path d="M1028 649 1033 648 1029 653Z" fill="#2e8b86"/><path d="M1033 648 1035 653 1029 653Z" fill="#2f908b"/><path d="M1029 653 1035 653 1030 659Z" fill="#35a29c"/><path d="M1035 653 1037 659 1030 659Z" fill="#37a7a1"/><path d="M1030 659 1037 659 1032 663Z" fill="#35a09a"/><path d="M1037 659 1036 665 1032 663Z" fill="#308e86"/><path d="M1032 663 1036 665 1032 668Z" fill="#2e8d88"/><path d="M1036 665 1036 670 1032 668Z" fill="#31948c"/><path d="M1032 668 1036 670 1032 673Z" fill="#2f8f8a"/><path d="M1036 670 1038 675 1032 673Z" fill="#3aaca0"/><path d="M1032 673 1038 675 1036 678Z" fill="#38a599"/><path d="M1038 675 1040 679 1036 678Z" fill="#369480"/><path d="M1036 678 1040 679 1036 684Z" fill="#33907f"/><path d="M1040 679 1039 685 1036 684Z" fill="#2f806d"/><path d="M1036 684 1039 685 1036 688Z" fill="#2c7c6d"/><path d="M1039 685 1042 690 1036 688Z" fill="#2e7b66"/><path d="M1036 688 1042 690 1038 695Z" fill="#37957d"/><path d="M1042 690 1042 695 1038 695Z" fill="#48b991"/><path d="M1038 695 1042 695 1037 699Z" fill="#41b091"/><path d="M1042 695 1044 700 1037 699Z" fill="#46b38b"/><path d="M1037 699 1044 700 1040 703Z" fill="#3fa483"/><path d="M1044 700 1043 704 1040 703Z" fill="#44ac80"/><path d="M1040 703 1043 704 1040 709Z" fill="#43ad87"/><path d="M1043 704 1043 710 1040 709Z" fill="#4dc190"/><path d="M1040 709 1043 710 1040 714Z" fill="#4bc093"/><path d="M1043 710 1045 715 1040 714Z" fill="#48b281"/><path d="M1040 714 1045 715 1041 718Z" fill="#3c9872"/><path d="M1045 715 1047 720 1041 718Z" fill="#4ab17a"/><path d="M1041 718 1047 720 1041 724Z" fill="#4bbb88"/><path d="M1047 720 1045 723 1041 724Z" fill="#4db87e"/><path d="M1041 724 1045 723 1041 728Z" fill="#47b081"/><path d="M1045 723 1046 728 1041 728Z" fill="#49af79"/><path d="M1041 728 1046 728 1044 734Z" fill="#46aa78"/><path d="M1046 728 1047 733 1044 734Z" fill="#46a46c"/><path d="M1025 584 1030 583 1026 588Z" fill="#37a8a1"/><path d="M1030 583 1031 590 1026 588Z" fill="#329791"/><path d="M1026 588 1031 590 1026 594Z" fill="#339b95"/><path d="M1031 590 1031 593 1026 594Z" fill="#349e98"/><path d="M1026 594 1031 593 1027 598Z" fill="#3ab0a9"/><path d="M1031 593 1031 599 1027 598Z" fill="#38aaa3"/><path d="M1027 598 1031 599 1027 604Z" fill="#35a29c"/><path d="M1031 599 1033 605 1027 604Z" fill="#3ebcb4"/><path d="M1027 604 1033 605 1028 608Z" fill="#38a8a2"/><path d="M1033 605 1031 608 1028 608Z" fill="#35a19b"/><path d="M1028 608 1031 608 1029 616Z" fill="#2f8e89"/><path d="M1031 608 1035 612 1029 616Z" fill="#329691"/><path d="M1029 616 1035 612 1028 621Z" fill="#2b827d"/><path d="M1035 612 1036 618 1028 621Z" fill="#2a807b"/><path d="M1028 621 1036 618 1032 624Z" fill="#2c8781"/><path d="M1036 618 1037 624 1032 624Z" fill="#31938b"/><path d="M1032 624 1037 624 1030 629Z" fill="#2d8883"/><path d="M1037 624 1037 630 1030 629Z" fill="#2e8a83"/><path d="M1030 629 1037 630 1033 632Z" fill="#349e98"/><path d="M1037 630 1038 634 1033 632Z" fill="#3cad9d"/><path d="M1033 632 1038 634 1034 640Z" fill="#3cb2a6"/><path d="M1038 634 1038 640 1034 640Z" fill="#3daf9c"/><path d="M1034 640 1038 640 1032 644Z" fill="#349b93"/><path d="M1038 640 1038 643 1032 644Z" fill="#318e81"/><path d="M1032 644 1038 643 1033 648Z" fill="#2c847d"/><path d="M1038 643 1041 650 1033 648Z" fill="#328d7b"/><path d="M1033 648 1041 650 1035 653Z" fill="#339383"/><path d="M1041 650 1041 654 1035 653Z" fill="#3fa88b"/><path d="M1035 653 1041 654 1037 659Z" fill="#3ca68f"/><path d="M1041 654 1040 658 1037 659Z" fill="#40ab8c"/><path d="M1037 659 1040 658 1036 665Z" fill="#389c86"/><path d="M1040 658 1043 663 1036 665Z" fill="#3da182"/><path d="M1036 665 1043 663 1036 670Z" fill="#348e78"/><path d="M1043 663 1042 667 1036 670Z" fill="#358b6f"/><path d="M1036 670 1042 667 1038 675Z" fill="#41b195"/><path d="M1042 667 1043 676 1038 675Z" fill="#40a681"/><path d="M1038 675 1043 676 1040 679Z" fill="#34886c"/><path d="M1043 676 1043 678 1040 679Z" fill="#368967"/><path d="M1040 679 1043 678 1039 685Z" fill="#358b6e"/><path d="M1043 678 1044 685 1039 685Z" fill="#368765"/><path d="M1039 685 1044 685 1042 690Z" fill="#317c5d"/><path d="M1044 685 1045 688 1042 690Z" fill="#327955"/><path d="M1042 690 1045 688 1042 695Z" fill="#3d976d"/><path d="M1045 688 1047 695 1042 695Z" fill="#46a670"/><path d="M1042 695 1047 695 1044 700Z" fill="#49b079"/><path d="M1047 695 1046 698 1044 700Z" fill="#4aac6f"/><path d="M1044 700 1046 698 1043 704Z" fill="#46a874"/><path d="M1046 698 1048 705 1043 704Z" fill="#50bc7a"/><path d="M1043 704 1048 705 1043 710Z" fill="#57ce8c"/><path d="M1048 705 1048 708 1043 710Z" fill="#52bc77"/><path d="M1043 710 1048 708 1045 715Z" fill="#53c280"/><path d="M1048 708 1050 715 1045 715Z" fill="#58c677"/><path d="M1045 715 1050 715 1047 720Z" fill="#4eb06b"/><path d="M1050 715 1050 718 1047 720Z" fill="#52b364"/><path d="M1047 720 1050 718 1045 723Z" fill="#4dae68"/><path d="M1050 718 1052 723 1045 723Z" fill="#52b264"/><path d="M1045 723 1052 723 1046 728Z" fill="#4caa66"/><path d="M1052 723 1051 728 1046 728Z" fill="#4ba45b"/><path d="M1046 728 1051 728 1047 733Z" fill="#4ba763"/><path d="M1051 728 1054 733 1047 733Z" fill="#4ba257"/><path d="M1030 583 1034 585 1031 590Z" fill="#2e8c86"/><path d="M1034 585 1034 589 1031 590Z" fill="#2e8d87"/><path d="M1031 590 1034 589 1031 593Z" fill="#2d8984"/><path d="M1034 589 1037 594 1031 593Z" fill="#31958f"/><path d="M1031 593 1037 594 1031 599Z" fill="#37a6a0"/><path d="M1037 594 1035 599 1031 599Z" fill="#349f99"/><path d="M1031 599 1035 599 1033 605Z" fill="#3ebdb5"/><path d="M1035 599 1039 605 1033 605Z" fill="#3cb3aa"/><path d="M1033 605 1039 605 1031 608Z" fill="#38aaa4"/><path d="M1039 605 1039 607 1031 608Z" fill="#369f96"/><path d="M1031 608 1039 607 1035 612Z" fill="#349b94"/><path d="M1039 607 1037 614 1035 612Z" fill="#369f96"/><path d="M1035 612 1037 614 1036 618Z" fill="#349b94"/><path d="M1037 614 1038 620 1036 618Z" fill="#308d84"/><path d="M1036 618 1038 620 1037 624Z" fill="#329287"/><path d="M1038 620 1040 624 1037 624Z" fill="#308a7b"/><path d="M1037 624 1040 624 1037 630Z" fill="#308778"/><path d="M1040 624 1042 629 1037 630Z" fill="#36927a"/><path d="M1037 630 1042 629 1038 634Z" fill="#3ca286"/><path d="M1042 629 1043 633 1038 634Z" fill="#43ac84"/><path d="M1038 634 1043 633 1038 640Z" fill="#48c09c"/><path d="M1043 633 1043 640 1038 640Z" fill="#48b88e"/><path d="M1038 640 1043 640 1038 643Z" fill="#39987c"/><path d="M1043 640 1043 643 1038 643Z" fill="#3c9975"/><path d="M1038 643 1043 643 1041 650Z" fill="#3b9978"/><path d="M1043 643 1046 649 1041 650Z" fill="#41a073"/><path d="M1041 650 1046 649 1041 654Z" fill="#43a77b"/><path d="M1046 649 1047 653 1041 654Z" fill="#44a26f"/><path d="M1041 654 1047 653 1040 658Z" fill="#48b281"/><path d="M1047 653 1047 658 1040 658Z" fill="#4eba7e"/><path d="M1040 658 1047 658 1043 663Z" fill="#4cba84"/><path d="M1047 658 1047 665 1043 663Z" fill="#4db374"/><path d="M1043 663 1047 665 1042 667Z" fill="#3d9467"/><path d="M1047 665 1048 669 1042 667Z" fill="#429a64"/><path d="M1042 667 1048 669 1043 676Z" fill="#3e9567"/><path d="M1048 669 1050 675 1043 676Z" fill="#377d4c"/><path d="M1043 676 1050 675 1043 678Z" fill="#398659"/><path d="M1050 675 1050 678 1043 678Z" fill="#39804d"/><path d="M1043 678 1050 678 1044 685Z" fill="#3c8d5b"/><path d="M1050 678 1049 684 1044 685Z" fill="#419157"/><path d="M1044 685 1049 684 1045 688Z" fill="#3c8c5a"/><path d="M1049 684 1050 688 1045 688Z" fill="#3d8951"/><path d="M1045 688 1050 688 1047 695Z" fill="#3d8b54"/><path d="M1050 688 1052 695 1047 695Z" fill="#4ba35a"/><path d="M1047 695 1052 695 1046 698Z" fill="#4fae65"/><path d="M1052 695 1052 700 1046 698Z" fill="#489c54"/><path d="M1046 698 1052 700 1048 705Z" fill="#4ba55f"/><path d="M1052 700 1055 705 1048 705Z" fill="#4ea75a"/><path d="M1048 705 1055 705 1048 708Z" fill="#4da65a"/><path d="M1055 705 1053 708 1048 708Z" fill="#4a9f55"/><path d="M1048 708 1053 708 1050 715Z" fill="#50ac5d"/><path d="M1053 708 1056 715 1050 715Z" fill="#4ea95b"/><path d="M1050 715 1056 715 1050 718Z" fill="#53b260"/><path d="M1056 715 1055 718 1050 718Z" fill="#55b662"/><path d="M1050 718 1055 718 1052 723Z" fill="#5dc96c"/><path d="M1055 718 1057 723 1052 723Z" fill="#5ac168"/><path d="M1052 723 1057 723 1051 728Z" fill="#4ea85b"/><path d="M1057 723 1056 728 1051 728Z" fill="#4ca458"/><path d="M1051 728 1056 728 1054 733Z" fill="#4ca458"/><path d="M1056 728 1058 734 1054 733Z" fill="#53b360"/><path d="M1034 585 1040 583 1034 589Z" fill="#359d95"/><path d="M1040 583 1041 590 1034 589Z" fill="#379f95"/><path d="M1034 589 1041 590 1037 594Z" fill="#38a49a"/><path d="M1041 590 1040 594 1037 594Z" fill="#3aa69a"/><path d="M1037 594 1040 594 1035 599Z" fill="#33968d"/><path d="M1040 594 1042 598 1035 599Z" fill="#35988d"/><path d="M1035 599 1042 598 1039 605Z" fill="#3baa9f"/><path d="M1042 598 1044 604 1039 605Z" fill="#39a193"/><path d="M1039 605 1044 604 1039 607Z" fill="#369a8e"/><path d="M1044 604 1043 610 1039 607Z" fill="#379c8e"/><path d="M1039 607 1043 610 1037 614Z" fill="#35988e"/><path d="M1043 610 1042 613 1037 614Z" fill="#369d91"/><path d="M1037 614 1042 613 1038 620Z" fill="#308c83"/><path d="M1042 613 1043 620 1038 620Z" fill="#318b7e"/><path d="M1038 620 1043 620 1040 624Z" fill="#308676"/><path d="M1043 620 1044 625 1040 624Z" fill="#369179"/><path d="M1040 624 1044 625 1042 629Z" fill="#368f72"/><path d="M1044 625 1047 631 1042 629Z" fill="#409d71"/><path d="M1042 629 1047 631 1043 633Z" fill="#47ab77"/><path d="M1047 631 1046 634 1043 633Z" fill="#4db578"/><path d="M1043 633 1046 634 1043 640Z" fill="#4fbf86"/><path d="M1046 634 1049 639 1043 640Z" fill="#60c073"/><path d="M1043 640 1049 639 1043 643Z" fill="#50aa6c"/><path d="M1049 639 1048 645 1043 643Z" fill="#60b063"/><path d="M1043 643 1048 645 1046 649Z" fill="#54aa68"/><path d="M1048 645 1050 649 1046 649Z" fill="#72c76a"/><path d="M1046 649 1050 649 1047 653Z" fill="#67bd69"/><path d="M1050 649 1050 653 1047 653Z" fill="#68b660"/><path d="M1047 653 1050 653 1047 658Z" fill="#55aa60"/><path d="M1050 653 1051 660 1047 658Z" fill="#5bb160"/><path d="M1047 658 1051 660 1047 665Z" fill="#56be6e"/><path d="M1051 660 1051 665 1047 665Z" fill="#53b462"/><path d="M1047 665 1051 665 1048 669Z" fill="#52b366"/><path d="M1051 665 1052 669 1048 669Z" fill="#55b662"/><path d="M1048 669 1052 669 1050 675Z" fill="#469751"/><path d="M1052 669 1054 675 1050 675Z" fill="#459450"/><path d="M1050 675 1054 675 1050 678Z" fill="#428f4d"/><path d="M1054 675 1055 679 1050 678Z" fill="#499e55"/><path d="M1050 678 1055 679 1049 684Z" fill="#4ca358"/><path d="M1055 679 1055 683 1049 684Z" fill="#4aa056"/><path d="M1049 684 1055 683 1050 688Z" fill="#45944f"/><path d="M1055 683 1056 690 1050 688Z" fill="#479a53"/><path d="M1050 688 1056 690 1052 695Z" fill="#479952"/><path d="M1056 690 1056 693 1052 695Z" fill="#4ea85a"/><path d="M1052 695 1056 693 1052 700Z" fill="#479953"/><path d="M1056 693 1056 699 1052 700Z" fill="#459550"/><path d="M1052 700 1056 699 1055 705Z" fill="#489b54"/><path d="M1056 699 1058 706 1055 705Z" fill="#479852"/><path d="M1055 705 1058 706 1053 708Z" fill="#3f8849"/><path d="M1058 706 1060 710 1053 708Z" fill="#408b4b"/><path d="M1053 708 1060 710 1056 715Z" fill="#51ae5e"/><path d="M1060 710 1059 714 1056 715Z" fill="#4faa5c"/><path d="M1056 715 1059 714 1055 718Z" fill="#51af5e"/><path d="M1059 714 1061 718 1055 718Z" fill="#4ca458"/><path d="M1055 718 1061 718 1057 723Z" fill="#56b964"/><path d="M1061 718 1062 724 1057 723Z" fill="#58bd66"/><path d="M1057 723 1062 724 1056 728Z" fill="#54b461"/><path d="M1062 724 1061 728 1056 728Z" fill="#57bb65"/><path d="M1056 728 1061 728 1058 734Z" fill="#54b562"/><path d="M1061 728 1064 733 1058 734Z" fill="#51ae5e"/><path d="M1040 583 1044 584 1041 590Z" fill="#379a8d"/><path d="M1044 584 1044 590 1041 590Z" fill="#3ba595"/><path d="M1041 590 1044 590 1040 594Z" fill="#42b8a8"/><path d="M1044 590 1045 595 1040 594Z" fill="#42b6a4"/><path d="M1040 594 1045 595 1042 598Z" fill="#399f91"/><path d="M1045 595 1047 599 1042 598Z" fill="#389888"/><path d="M1042 598 1047 599 1044 604Z" fill="#379889"/><path d="M1047 599 1046 603 1044 604Z" fill="#399a89"/><path d="M1044 604 1046 603 1043 610Z" fill="#3ca594"/><path d="M1046 603 1049 608 1043 610Z" fill="#389685"/><path d="M1043 610 1049 608 1042 613Z" fill="#3aa090"/><path d="M1049 608 1049 613 1042 613Z" fill="#389b8a"/><path d="M1042 613 1049 613 1043 620Z" fill="#39a294"/><path d="M1049 613 1050 620 1043 620Z" fill="#3ba18b"/><path d="M1043 620 1050 620 1044 625Z" fill="#358b70"/><path d="M1050 620 1052 624 1044 625Z" fill="#348260"/><path d="M1044 625 1052 624 1047 631Z" fill="#49aa72"/><path d="M1052 624 1050 630 1047 631Z" fill="#63ba67"/><path d="M1047 631 1050 630 1046 634Z" fill="#66c26d"/><path d="M1050 630 1052 635 1046 634Z" fill="#70bd62"/><path d="M1046 634 1052 635 1049 639Z" fill="#78c767"/><path d="M1052 635 1053 638 1049 639Z" fill="#7abd5f"/><path d="M1049 639 1053 638 1048 645Z" fill="#7ac161"/><path d="M1053 638 1053 644 1048 645Z" fill="#7cc061"/><path d="M1048 645 1053 644 1050 649Z" fill="#7bc061"/><path d="M1053 644 1055 649 1050 649Z" fill="#79bd5f"/><path d="M1050 649 1055 649 1050 653Z" fill="#75b85d"/><path d="M1055 649 1056 654 1050 653Z" fill="#71b159"/><path d="M1050 653 1056 654 1051 660Z" fill="#65ab58"/><path d="M1056 654 1055 660 1051 660Z" fill="#63ae5a"/><path d="M1051 660 1055 660 1051 665Z" fill="#56b05e"/><path d="M1055 660 1057 663 1051 665Z" fill="#51a658"/><path d="M1051 665 1057 663 1052 669Z" fill="#52b260"/><path d="M1057 663 1057 670 1052 669Z" fill="#59bf67"/><path d="M1052 669 1057 670 1054 675Z" fill="#51af5e"/><path d="M1057 670 1059 673 1054 675Z" fill="#53b260"/><path d="M1054 675 1059 673 1055 679Z" fill="#51ae5e"/><path d="M1059 673 1060 680 1055 679Z" fill="#4ba257"/><path d="M1055 679 1060 680 1055 683Z" fill="#4ea85b"/><path d="M1060 680 1059 685 1055 683Z" fill="#53b360"/><path d="M1055 683 1059 685 1056 690Z" fill="#53b260"/><path d="M1059 685 1062 689 1056 690Z" fill="#52b15f"/><path d="M1056 690 1062 689 1056 693Z" fill="#4fab5c"/><path d="M1062 689 1063 694 1056 693Z" fill="#479952"/><path d="M1056 693 1063 694 1056 699Z" fill="#479a53"/><path d="M1063 694 1061 700 1056 699Z" fill="#4a9f55"/><path d="M1056 699 1061 700 1058 706Z" fill="#4ca358"/><path d="M1061 700 1064 705 1058 706Z" fill="#4ba157"/><path d="M1058 706 1064 705 1060 710Z" fill="#4da559"/><path d="M1064 705 1065 710 1060 710Z" fill="#50ad5d"/><path d="M1060 710 1065 710 1059 714Z" fill="#50ac5d"/><path d="M1065 710 1066 714 1059 714Z" fill="#4ba157"/><path d="M1059 714 1066 714 1061 718Z" fill="#459550"/><path d="M1066 714 1064 718 1061 718Z" fill="#44934f"/><path d="M1061 718 1064 718 1062 724Z" fill="#50ad5d"/><path d="M1064 718 1065 725 1062 724Z" fill="#499d55"/><path d="M1062 724 1065 725 1061 728Z" fill="#4ba257"/><path d="M1065 725 1068 730 1061 728Z" fill="#489b53"/><path d="M1061 728 1068 730 1064 733Z" fill="#51ad5d"/><path d="M1068 730 1069 734 1064 733Z" fill="#479952"/><path d="M1044 584 1049 582 1044 590Z" fill="#318474"/><path d="M1049 582 1049 589 1044 590Z" fill="#3ca08c"/><path d="M1044 590 1049 589 1045 595Z" fill="#48c1ab"/><path d="M1049 589 1049 593 1045 595Z" fill="#48c0a8"/><path d="M1045 595 1049 593 1047 599Z" fill="#3da38f"/><path d="M1049 593 1051 598 1047 599Z" fill="#3b9b86"/><path d="M1047 599 1051 598 1046 603Z" fill="#348977"/><path d="M1051 598 1051 603 1046 603Z" fill="#399681"/><path d="M1046 603 1051 603 1049 608Z" fill="#3b9b86"/><path d="M1051 603 1053 610 1049 608Z" fill="#3a9681"/><path d="M1049 608 1053 610 1049 613Z" fill="#389481"/><path d="M1053 610 1054 615 1049 613Z" fill="#399b89"/><path d="M1049 613 1054 615 1050 620Z" fill="#3fab97"/><path d="M1054 615 1055 620 1050 620Z" fill="#3da085"/><path d="M1050 620 1055 620 1052 624Z" fill="#368665"/><path d="M1055 620 1056 624 1052 624Z" fill="#4b9c67"/><path d="M1052 624 1056 624 1050 630Z" fill="#58a05a"/><path d="M1056 624 1055 628 1050 630Z" fill="#61a659"/><path d="M1050 630 1055 628 1052 635Z" fill="#66a453"/><path d="M1055 628 1056 633 1052 635Z" fill="#5f944a"/><path d="M1052 635 1056 633 1053 638Z" fill="#75b65b"/><path d="M1056 633 1058 639 1053 638Z" fill="#7bbf60"/><path d="M1053 638 1058 639 1053 644Z" fill="#75b65c"/><path d="M1058 639 1058 643 1053 644Z" fill="#70af58"/><path d="M1053 644 1058 643 1055 649Z" fill="#7abd5f"/><path d="M1058 643 1060 651 1055 649Z" fill="#74b55b"/><path d="M1055 649 1060 651 1056 654Z" fill="#6ca955"/><path d="M1060 651 1061 653 1056 654Z" fill="#6aa855"/><path d="M1056 654 1061 653 1055 660Z" fill="#68ac58"/><path d="M1061 653 1062 660 1055 660Z" fill="#60aa58"/><path d="M1055 660 1062 660 1057 663Z" fill="#58a959"/><path d="M1062 660 1062 664 1057 663Z" fill="#53b360"/><path d="M1057 663 1062 664 1057 670Z" fill="#55b662"/><path d="M1062 664 1064 669 1057 670Z" fill="#55b863"/><path d="M1057 670 1064 669 1059 673Z" fill="#55b863"/><path d="M1064 669 1064 673 1059 673Z" fill="#55b863"/><path d="M1059 673 1064 673 1060 680Z" fill="#4aa056"/><path d="M1064 673 1065 679 1060 680Z" fill="#4ea85b"/><path d="M1060 680 1065 679 1059 685Z" fill="#54b662"/><path d="M1065 679 1064 684 1059 685Z" fill="#58be66"/><path d="M1059 685 1064 684 1062 689Z" fill="#57bc65"/><path d="M1064 684 1067 689 1062 689Z" fill="#4ea85a"/><path d="M1062 689 1067 689 1063 694Z" fill="#4da659"/><path d="M1067 689 1066 695 1063 694Z" fill="#479952"/><path d="M1063 694 1066 695 1061 700Z" fill="#428f4d"/><path d="M1066 695 1069 700 1061 700Z" fill="#44924f"/><path d="M1061 700 1069 700 1064 705Z" fill="#44924e"/><path d="M1069 700 1068 704 1064 705Z" fill="#40894a"/><path d="M1064 705 1068 704 1065 710Z" fill="#50ad5d"/><path d="M1068 704 1069 708 1065 710Z" fill="#59c168"/><path d="M1065 710 1069 708 1066 714Z" fill="#54b561"/><path d="M1069 708 1070 713 1066 714Z" fill="#4ea75a"/><path d="M1066 714 1070 713 1064 718Z" fill="#479952"/><path d="M1070 713 1071 720 1064 718Z" fill="#479a53"/><path d="M1064 718 1071 720 1065 725Z" fill="#479952"/><path d="M1071 720 1072 726 1065 725Z" fill="#43914e"/><path d="M1065 725 1072 726 1068 730Z" fill="#428e4c"/><path d="M1072 726 1071 728 1068 730Z" fill="#428f4d"/><path d="M1068 730 1071 728 1069 734Z" fill="#44924e"/><path d="M1071 728 1072 735 1069 734Z" fill="#43904d"/><path d="M1049 582 1053 583 1049 589Z" fill="#348875"/><path d="M1053 583 1055 591 1049 589Z" fill="#46b69c"/><path d="M1049 589 1055 591 1049 593Z" fill="#46b89e"/><path d="M1055 591 1056 595 1049 593Z" fill="#41a992"/><path d="M1049 593 1056 595 1051 598Z" fill="#3c9d87"/><path d="M1056 595 1058 599 1051 598Z" fill="#37907c"/><path d="M1051 598 1058 599 1051 603Z" fill="#40a78f"/><path d="M1058 599 1056 605 1051 603Z" fill="#42ac94"/><path d="M1051 603 1056 605 1053 610Z" fill="#3b9b85"/><path d="M1056 605 1057 608 1053 610Z" fill="#3d9f88"/><path d="M1053 610 1057 608 1054 615Z" fill="#3da18d"/><path d="M1057 608 1058 615 1054 615Z" fill="#40ac98"/><path d="M1054 615 1058 615 1055 620Z" fill="#43b59d"/><path d="M1058 615 1060 619 1055 620Z" fill="#43b295"/><path d="M1055 620 1060 619 1056 624Z" fill="#47a87d"/><path d="M1060 619 1059 623 1056 624Z" fill="#4fb37e"/><path d="M1056 624 1059 623 1055 628Z" fill="#6ac271"/><path d="M1059 623 1062 629 1055 628Z" fill="#6fc46c"/><path d="M1055 628 1062 629 1056 633Z" fill="#619a4e"/><path d="M1062 629 1062 635 1056 633Z" fill="#6aa956"/><path d="M1056 633 1062 635 1058 639Z" fill="#74b55b"/><path d="M1062 635 1063 640 1058 639Z" fill="#6fac56"/><path d="M1058 639 1063 640 1058 643Z" fill="#67a051"/><path d="M1063 640 1065 644 1058 643Z" fill="#68a352"/><path d="M1058 643 1065 644 1060 651Z" fill="#6eac56"/><path d="M1065 644 1064 649 1060 651Z" fill="#528845"/><path d="M1060 651 1064 649 1061 653Z" fill="#5d984d"/><path d="M1064 649 1064 653 1061 653Z" fill="#57964d"/><path d="M1061 653 1064 653 1062 660Z" fill="#5aa355"/><path d="M1064 653 1067 659 1062 660Z" fill="#4ea458"/><path d="M1062 660 1067 659 1062 664Z" fill="#52b15f"/><path d="M1067 659 1065 664 1062 664Z" fill="#54b461"/><path d="M1062 664 1065 664 1064 669Z" fill="#53b360"/><path d="M1065 664 1067 668 1064 669Z" fill="#4eaa5b"/><path d="M1064 669 1067 668 1064 673Z" fill="#52b260"/><path d="M1067 668 1067 674 1064 673Z" fill="#4ba558"/><path d="M1064 673 1067 674 1065 679Z" fill="#4da65a"/><path d="M1067 674 1070 680 1065 679Z" fill="#52b25f"/><path d="M1065 679 1070 680 1064 684Z" fill="#58be66"/><path d="M1070 680 1070 683 1064 684Z" fill="#5bc469"/><path d="M1064 684 1070 683 1067 689Z" fill="#56b863"/><path d="M1070 683 1071 688 1067 689Z" fill="#4ea85a"/><path d="M1067 689 1071 688 1066 695Z" fill="#479a53"/><path d="M1071 688 1071 693 1066 695Z" fill="#44934f"/><path d="M1066 695 1071 693 1069 700Z" fill="#3f8849"/><path d="M1071 693 1071 698 1069 700Z" fill="#4aa056"/><path d="M1069 700 1071 698 1068 704Z" fill="#469852"/><path d="M1071 698 1075 703 1068 704Z" fill="#3e8748"/><path d="M1068 704 1075 703 1069 708Z" fill="#408a4a"/><path d="M1075 703 1076 710 1069 708Z" fill="#408b4b"/><path d="M1069 708 1076 710 1070 713Z" fill="#489b53"/><path d="M1076 710 1076 713 1070 713Z" fill="#428e4c"/><path d="M1070 713 1076 713 1071 720Z" fill="#4ba157"/><path d="M1076 713 1076 718 1071 720Z" fill="#4ba157"/><path d="M1071 720 1076 718 1072 726Z" fill="#438f4d"/><path d="M1076 718 1076 724 1072 726Z" fill="#459550"/><path d="M1072 726 1076 724 1071 728Z" fill="#418d4c"/><path d="M1076 724 1078 728 1071 728Z" fill="#489b53"/><path d="M1071 728 1078 728 1072 735Z" fill="#469751"/><path d="M1078 728 1076 734 1072 735Z" fill="#4ca458"/><path d="M1053 583 1059 584 1055 591Z" fill="#44b198"/><path d="M1059 584 1058 589 1055 591Z" fill="#41ab93"/><path d="M1055 591 1058 589 1056 595Z" fill="#3d9e88"/><path d="M1058 589 1061 594 1056 595Z" fill="#3b9984"/><path d="M1056 595 1061 594 1058 599Z" fill="#368c79"/><path d="M1061 594 1061 597 1058 599Z" fill="#378f7b"/><path d="M1058 599 1061 597 1056 605Z" fill="#3c9b85"/><path d="M1061 597 1061 605 1056 605Z" fill="#3b9a84"/><path d="M1056 605 1061 605 1057 608Z" fill="#3ea18a"/><path d="M1061 605 1062 608 1057 608Z" fill="#3fa58e"/><path d="M1057 608 1062 608 1058 615Z" fill="#40a993"/><path d="M1062 608 1063 613 1058 615Z" fill="#3a9d8a"/><path d="M1058 615 1063 613 1060 619Z" fill="#40ae9a"/><path d="M1063 613 1065 618 1060 619Z" fill="#3fa993"/><path d="M1060 619 1065 618 1059 623Z" fill="#48ba94"/><path d="M1065 618 1066 624 1059 623Z" fill="#4ec393"/><path d="M1059 623 1066 624 1062 629Z" fill="#62cb7e"/><path d="M1066 624 1066 629 1062 629Z" fill="#57bb6f"/><path d="M1062 629 1066 629 1062 635Z" fill="#6abd63"/><path d="M1066 629 1066 634 1062 635Z" fill="#6bc969"/><path d="M1062 635 1066 634 1063 640Z" fill="#7bd16b"/><path d="M1066 634 1069 638 1063 640Z" fill="#64bc63"/><path d="M1063 640 1069 638 1065 644Z" fill="#59a154"/><path d="M1069 638 1070 643 1065 644Z" fill="#4da156"/><path d="M1065 644 1070 643 1064 649Z" fill="#519850"/><path d="M1070 643 1069 650 1064 649Z" fill="#3c8746"/><path d="M1064 649 1069 650 1064 653Z" fill="#428245"/><path d="M1069 650 1071 653 1064 653Z" fill="#2a6d34"/><path d="M1064 653 1071 653 1067 659Z" fill="#398f45"/><path d="M1071 653 1071 658 1067 659Z" fill="#2b8738"/><path d="M1067 659 1071 658 1065 664Z" fill="#3b9d49"/><path d="M1071 658 1073 664 1065 664Z" fill="#298636"/><path d="M1065 664 1073 664 1067 668Z" fill="#308a3d"/><path d="M1073 664 1074 670 1067 668Z" fill="#23712e"/><path d="M1067 668 1074 670 1067 674Z" fill="#297834"/><path d="M1074 670 1074 674 1067 674Z" fill="#267a31"/><path d="M1067 674 1074 674 1070 680Z" fill="#32893e"/><path d="M1074 674 1074 680 1070 680Z" fill="#32943f"/><path d="M1070 680 1074 680 1070 683Z" fill="#49b458"/><path d="M1074 680 1075 683 1070 683Z" fill="#44ae53"/><path d="M1070 683 1075 683 1071 688Z" fill="#4cac5a"/><path d="M1075 683 1076 688 1071 688Z" fill="#469c52"/><path d="M1071 688 1076 688 1071 693Z" fill="#479952"/><path d="M1076 688 1075 693 1071 693Z" fill="#469651"/><path d="M1071 693 1075 693 1071 698Z" fill="#4fab5c"/><path d="M1075 693 1079 700 1071 698Z" fill="#50ac5d"/><path d="M1071 698 1079 700 1075 703Z" fill="#4aa056"/><path d="M1079 700 1078 704 1075 703Z" fill="#459651"/><path d="M1075 703 1078 704 1076 710Z" fill="#459450"/><path d="M1078 704 1079 709 1076 710Z" fill="#3f8749"/><path d="M1076 710 1079 709 1076 713Z" fill="#3f8749"/><path d="M1079 709 1079 715 1076 713Z" fill="#43904d"/><path d="M1076 713 1079 715 1076 718Z" fill="#4aa056"/><path d="M1079 715 1082 719 1076 718Z" fill="#51af5e"/><path d="M1076 718 1082 719 1076 724Z" fill="#4ca458"/><path d="M1082 719 1082 724 1076 724Z" fill="#4fa95b"/><path d="M1076 724 1082 724 1078 728Z" fill="#489a53"/><path d="M1082 724 1083 730 1078 728Z" fill="#4aa056"/><path d="M1078 728 1083 730 1076 734Z" fill="#4ca358"/><path d="M1083 730 1084 733 1076 734Z" fill="#4ba157"/><path d="M1059 584 1065 583 1058 589Z" fill="#46b69d"/><path d="M1065 583 1064 589 1058 589Z" fill="#43ae95"/><path d="M1058 589 1064 589 1061 594Z" fill="#41a991"/><path d="M1064 589 1066 593 1061 594Z" fill="#368c78"/><path d="M1061 594 1066 593 1061 597Z" fill="#358b78"/><path d="M1066 593 1067 600 1061 597Z" fill="#37907c"/><path d="M1061 597 1067 600 1061 605Z" fill="#39947f"/><path d="M1067 600 1068 605 1061 605Z" fill="#348975"/><path d="M1061 605 1068 605 1062 608Z" fill="#38927e"/><path d="M1068 605 1067 608 1062 608Z" fill="#37907c"/><path d="M1062 608 1067 608 1063 613Z" fill="#3ea38d"/><path d="M1067 608 1068 614 1063 613Z" fill="#348d7c"/><path d="M1063 613 1068 614 1065 618Z" fill="#379686"/><path d="M1068 614 1071 621 1065 618Z" fill="#41ae94"/><path d="M1065 618 1071 621 1066 624Z" fill="#49b98e"/><path d="M1071 621 1070 624 1066 624Z" fill="#44a778"/><path d="M1066 624 1070 624 1066 629Z" fill="#4bae70"/><path d="M1070 624 1072 631 1066 629Z" fill="#49a461"/><path d="M1066 629 1072 631 1066 634Z" fill="#51ae5e"/><path d="M1072 631 1072 633 1066 634Z" fill="#55b863"/><path d="M1066 634 1072 633 1069 638Z" fill="#59c068"/><path d="M1072 633 1072 638 1069 638Z" fill="#4da65a"/><path d="M1069 638 1072 638 1070 643Z" fill="#4ca559"/><path d="M1072 638 1074 643 1070 643Z" fill="#40974c"/><path d="M1070 643 1074 643 1069 650Z" fill="#317f3b"/><path d="M1074 643 1075 648 1069 650Z" fill="#267531"/><path d="M1069 650 1075 648 1071 653Z" fill="#1e6328"/><path d="M1075 648 1074 655 1071 653Z" fill="#1e6127"/><path d="M1071 653 1074 655 1071 658Z" fill="#277e33"/><path d="M1074 655 1076 660 1071 658Z" fill="#288234"/><path d="M1071 658 1076 660 1073 664Z" fill="#277d33"/><path d="M1076 660 1077 664 1073 664Z" fill="#23732e"/><path d="M1073 664 1077 664 1074 670Z" fill="#226e2d"/><path d="M1077 664 1076 670 1074 670Z" fill="#216b2b"/><path d="M1074 670 1076 670 1074 674Z" fill="#257931"/><path d="M1076 670 1079 673 1074 674Z" fill="#288234"/><path d="M1074 674 1079 673 1074 680Z" fill="#2d913a"/><path d="M1079 673 1078 679 1074 680Z" fill="#2d913b"/><path d="M1074 680 1078 679 1075 683Z" fill="#349341"/><path d="M1078 679 1081 685 1075 683Z" fill="#3fa34d"/><path d="M1075 683 1081 685 1076 688Z" fill="#439e50"/><path d="M1081 685 1082 691 1076 688Z" fill="#489b54"/><path d="M1076 688 1082 691 1075 693Z" fill="#489a53"/><path d="M1082 691 1080 693 1075 693Z" fill="#4ba157"/><path d="M1075 693 1080 693 1079 700Z" fill="#4a9f55"/><path d="M1080 693 1082 698 1079 700Z" fill="#418b4b"/><path d="M1079 700 1082 698 1078 704Z" fill="#418d4c"/><path d="M1082 698 1083 705 1078 704Z" fill="#418b4b"/><path d="M1078 704 1083 705 1079 709Z" fill="#3f8849"/><path d="M1083 705 1083 710 1079 709Z" fill="#428f4d"/><path d="M1079 709 1083 710 1079 715Z" fill="#459550"/><path d="M1083 710 1084 715 1079 715Z" fill="#53b361"/><path d="M1079 715 1084 715 1082 719Z" fill="#58bd66"/><path d="M1084 715 1084 718 1082 719Z" fill="#57bb65"/><path d="M1082 719 1084 718 1082 724Z" fill="#50ab5c"/><path d="M1084 718 1085 724 1082 724Z" fill="#4da75a"/><path d="M1082 724 1085 724 1083 730Z" fill="#50ac5d"/><path d="M1085 724 1086 730 1083 730Z" fill="#54b561"/><path d="M1083 730 1086 730 1084 733Z" fill="#499e55"/><path d="M1086 730 1088 735 1084 733Z" fill="#469651"/><path d="M1065 583 1069 585 1064 589Z" fill="#3fa58e"/><path d="M1069 585 1071 589 1064 589Z" fill="#43ae95"/><path d="M1064 589 1071 589 1066 593Z" fill="#3fa48d"/><path d="M1071 589 1071 594 1066 593Z" fill="#37907c"/><path d="M1066 593 1071 594 1067 600Z" fill="#2f7c6a"/><path d="M1071 594 1072 599 1067 600Z" fill="#348875"/><path d="M1067 600 1072 599 1068 605Z" fill="#31806e"/><path d="M1072 599 1071 604 1068 605Z" fill="#358a76"/><path d="M1068 605 1071 604 1067 608Z" fill="#328270"/><path d="M1071 604 1073 609 1067 608Z" fill="#2f7b6a"/><path d="M1067 608 1073 609 1068 614Z" fill="#30806f"/><path d="M1073 609 1075 613 1068 614Z" fill="#308071"/><path d="M1068 614 1075 613 1071 621Z" fill="#389987"/><path d="M1075 613 1076 619 1071 621Z" fill="#38957e"/><path d="M1071 621 1076 619 1070 624Z" fill="#3e9c77"/><path d="M1076 619 1074 624 1070 624Z" fill="#3c956d"/><path d="M1070 624 1074 624 1072 631Z" fill="#46a267"/><path d="M1074 624 1075 629 1072 631Z" fill="#4ba864"/><path d="M1072 631 1075 629 1072 633Z" fill="#54b562"/><path d="M1075 629 1077 635 1072 633Z" fill="#4faa5c"/><path d="M1072 633 1077 635 1072 638Z" fill="#469751"/><path d="M1077 635 1079 638 1072 638Z" fill="#3d8647"/><path d="M1072 638 1079 638 1074 643Z" fill="#398944"/><path d="M1079 638 1080 645 1074 643Z" fill="#33873f"/><path d="M1074 643 1080 645 1075 648Z" fill="#267530"/><path d="M1080 645 1078 648 1075 648Z" fill="#20692a"/><path d="M1075 648 1078 648 1074 655Z" fill="#1c5c25"/><path d="M1078 648 1080 653 1074 655Z" fill="#1c5a24"/><path d="M1074 655 1080 653 1076 660Z" fill="#23702d"/><path d="M1080 653 1080 659 1076 660Z" fill="#23722e"/><path d="M1076 660 1080 659 1077 664Z" fill="#216a2b"/><path d="M1080 659 1081 664 1077 664Z" fill="#1f6529"/><path d="M1077 664 1081 664 1076 670Z" fill="#226f2d"/><path d="M1081 664 1082 670 1076 670Z" fill="#277f33"/><path d="M1076 670 1082 670 1079 673Z" fill="#267c32"/><path d="M1082 670 1084 673 1079 673Z" fill="#2a8637"/><path d="M1079 673 1084 673 1078 679Z" fill="#2c8a39"/><path d="M1084 673 1085 680 1078 679Z" fill="#3e9e4c"/><path d="M1078 679 1085 680 1081 685Z" fill="#4bb058"/><path d="M1085 680 1087 683 1081 685Z" fill="#50ac5c"/><path d="M1081 685 1087 683 1082 691Z" fill="#4fab5c"/><path d="M1087 683 1086 688 1082 691Z" fill="#4fab5c"/><path d="M1082 691 1086 688 1080 693Z" fill="#499d54"/><path d="M1086 688 1086 694 1080 693Z" fill="#459550"/><path d="M1080 693 1086 694 1082 698Z" fill="#459450"/><path d="M1086 694 1086 699 1082 698Z" fill="#3f8849"/><path d="M1082 698 1086 699 1083 705Z" fill="#418d4c"/><path d="M1086 699 1087 705 1083 705Z" fill="#44934f"/><path d="M1083 705 1087 705 1083 710Z" fill="#459550"/><path d="M1087 705 1088 709 1083 710Z" fill="#44934f"/><path d="M1083 710 1088 709 1084 715Z" fill="#4faa5c"/><path d="M1088 709 1090 713 1084 715Z" fill="#54b562"/><path d="M1084 715 1090 713 1084 718Z" fill="#59c067"/><path d="M1090 713 1089 719 1084 718Z" fill="#50ad5d"/><path d="M1084 718 1089 719 1085 724Z" fill="#4ca559"/><path d="M1089 719 1091 723 1085 724Z" fill="#459550"/><path d="M1085 724 1091 723 1086 730Z" fill="#44944f"/><path d="M1091 723 1091 728 1086 730Z" fill="#44934f"/><path d="M1086 730 1091 728 1088 735Z" fill="#459651"/><path d="M1091 728 1094 733 1088 735Z" fill="#408b4b"/><path d="M1069 585 1075 583 1071 589Z" fill="#38917d"/><path d="M1075 583 1076 590 1071 589Z" fill="#3a9883"/><path d="M1071 589 1076 590 1071 594Z" fill="#3b9b85"/><path d="M1076 590 1077 594 1071 594Z" fill="#399580"/><path d="M1071 594 1077 594 1072 599Z" fill="#378f7b"/><path d="M1077 594 1078 599 1072 599Z" fill="#338471"/><path d="M1072 599 1078 599 1071 604Z" fill="#378f7b"/><path d="M1078 599 1078 605 1071 604Z" fill="#348976"/><path d="M1071 604 1078 605 1073 609Z" fill="#328371"/><path d="M1078 605 1077 608 1073 609Z" fill="#358a77"/><path d="M1073 609 1077 608 1075 613Z" fill="#30806f"/><path d="M1077 608 1079 613 1075 613Z" fill="#2c7567"/><path d="M1075 613 1079 613 1076 619Z" fill="#318678"/><path d="M1079 613 1079 619 1076 619Z" fill="#348b77"/><path d="M1076 619 1079 619 1074 624Z" fill="#358869"/><path d="M1079 619 1079 623 1074 624Z" fill="#3d9670"/><path d="M1074 624 1079 623 1075 629Z" fill="#49ac72"/><path d="M1079 623 1080 628 1075 629Z" fill="#48a467"/><path d="M1075 629 1080 628 1077 635Z" fill="#4ca458"/><path d="M1080 628 1083 635 1077 635Z" fill="#499d54"/><path d="M1077 635 1083 635 1079 638Z" fill="#4ca458"/><path d="M1083 635 1084 639 1079 638Z" fill="#53b360"/><path d="M1079 638 1084 639 1080 645Z" fill="#469f52"/><path d="M1084 639 1085 644 1080 645Z" fill="#469b52"/><path d="M1080 645 1085 644 1078 648Z" fill="#31823c"/><path d="M1085 644 1085 647 1078 648Z" fill="#378742"/><path d="M1078 648 1085 647 1080 653Z" fill="#236a2d"/><path d="M1085 647 1085 653 1080 653Z" fill="#2b7335"/><path d="M1080 653 1085 653 1080 659Z" fill="#20682a"/><path d="M1085 653 1087 660 1080 659Z" fill="#287232"/><path d="M1080 659 1087 660 1081 664Z" fill="#22702d"/><path d="M1087 660 1087 663 1081 664Z" fill="#368b42"/><path d="M1081 664 1087 663 1082 670Z" fill="#2b7f36"/><path d="M1087 663 1089 668 1082 670Z" fill="#49aa57"/><path d="M1082 670 1089 668 1084 673Z" fill="#43a651"/><path d="M1089 668 1089 673 1084 673Z" fill="#51ae5e"/><path d="M1084 673 1089 673 1085 680Z" fill="#4faa5c"/><path d="M1089 673 1091 680 1085 680Z" fill="#499d55"/><path d="M1085 680 1091 680 1087 683Z" fill="#4ca458"/><path d="M1091 680 1092 684 1087 683Z" fill="#50ad5d"/><path d="M1087 683 1092 684 1086 688Z" fill="#50ac5d"/><path d="M1092 684 1091 689 1086 688Z" fill="#479953"/><path d="M1086 688 1091 689 1086 694Z" fill="#499d55"/><path d="M1091 689 1092 694 1086 694Z" fill="#489c54"/><path d="M1086 694 1092 694 1086 699Z" fill="#43914e"/><path d="M1092 694 1092 700 1086 699Z" fill="#4aa056"/><path d="M1086 699 1092 700 1087 705Z" fill="#499e55"/><path d="M1092 700 1095 703 1087 705Z" fill="#53b360"/><path d="M1087 705 1095 703 1088 709Z" fill="#408a4a"/><path d="M1095 703 1093 711 1088 709Z" fill="#397c43"/><path d="M1088 709 1093 711 1090 713Z" fill="#4aa056"/><path d="M1093 711 1094 714 1090 713Z" fill="#4da559"/><path d="M1090 713 1094 714 1089 719Z" fill="#4ca458"/><path d="M1094 714 1096 718 1089 719Z" fill="#459550"/><path d="M1089 719 1096 718 1091 723Z" fill="#408a4a"/><path d="M1096 718 1096 723 1091 723Z" fill="#43914e"/><path d="M1091 723 1096 723 1091 728Z" fill="#459651"/><path d="M1096 723 1097 730 1091 728Z" fill="#44934f"/><path d="M1091 728 1097 730 1094 733Z" fill="#3e8547"/><path d="M1097 730 1099 735 1094 733Z" fill="#3d8346"/><path d="M1075 583 1080 583 1076 590Z" fill="#338673"/><path d="M1080 583 1081 590 1076 590Z" fill="#348774"/><path d="M1076 590 1081 590 1077 594Z" fill="#3c9c86"/><path d="M1081 590 1081 594 1077 594Z" fill="#42ab93"/><path d="M1077 594 1081 594 1078 599Z" fill="#3fa38d"/><path d="M1081 594 1083 599 1078 599Z" fill="#40a890"/><path d="M1078 599 1083 599 1078 605Z" fill="#38927e"/><path d="M1083 599 1084 603 1078 605Z" fill="#37907b"/><path d="M1078 605 1084 603 1077 608Z" fill="#328371"/><path d="M1084 603 1083 608 1077 608Z" fill="#338673"/><path d="M1077 608 1083 608 1079 613Z" fill="#318271"/><path d="M1083 608 1085 614 1079 613Z" fill="#2f7e6f"/><path d="M1079 613 1085 614 1079 619Z" fill="#328879"/><path d="M1085 614 1084 618 1079 619Z" fill="#389781"/><path d="M1079 619 1084 618 1079 623Z" fill="#3e9e7c"/><path d="M1084 618 1085 623 1079 623Z" fill="#43a77e"/><path d="M1079 623 1085 623 1080 628Z" fill="#48ac75"/><path d="M1085 623 1086 629 1080 628Z" fill="#46a165"/><path d="M1080 628 1086 629 1083 635Z" fill="#4ba257"/><path d="M1086 629 1085 633 1083 635Z" fill="#51af5e"/><path d="M1083 635 1085 633 1084 639Z" fill="#56b863"/><path d="M1085 633 1088 640 1084 639Z" fill="#5ac268"/><path d="M1084 639 1088 640 1085 644Z" fill="#52b05f"/><path d="M1088 640 1089 645 1085 644Z" fill="#479952"/><path d="M1085 644 1089 645 1085 647Z" fill="#428e4c"/><path d="M1089 645 1089 650 1085 647Z" fill="#408b4b"/><path d="M1085 647 1089 650 1085 653Z" fill="#3f8849"/><path d="M1089 650 1091 654 1085 653Z" fill="#3c8145"/><path d="M1085 653 1091 654 1087 660Z" fill="#459450"/><path d="M1091 654 1091 660 1087 660Z" fill="#479a53"/><path d="M1087 660 1091 660 1087 663Z" fill="#4fab5c"/><path d="M1091 660 1091 663 1087 663Z" fill="#55b662"/><path d="M1087 663 1091 663 1089 668Z" fill="#56ba64"/><path d="M1091 663 1093 669 1089 668Z" fill="#4faa5c"/><path d="M1089 668 1093 669 1089 673Z" fill="#4da659"/><path d="M1093 669 1092 674 1089 673Z" fill="#4ca358"/><path d="M1089 673 1092 674 1091 680Z" fill="#4faa5b"/><path d="M1092 674 1096 680 1091 680Z" fill="#56b964"/><path d="M1091 680 1096 680 1092 684Z" fill="#56ba64"/><path d="M1096 680 1095 685 1092 684Z" fill="#53b361"/><path d="M1092 684 1095 685 1091 689Z" fill="#4a9f55"/><path d="M1095 685 1095 688 1091 689Z" fill="#4ba257"/><path d="M1091 689 1095 688 1092 694Z" fill="#469852"/><path d="M1095 688 1098 694 1092 694Z" fill="#4a9f56"/><path d="M1092 694 1098 694 1092 700Z" fill="#4ea85a"/><path d="M1098 694 1098 699 1092 700Z" fill="#52b260"/><path d="M1092 700 1098 699 1095 703Z" fill="#5ac168"/><path d="M1098 699 1100 703 1095 703Z" fill="#58bd66"/><path d="M1095 703 1100 703 1093 711Z" fill="#499d55"/><path d="M1100 703 1099 710 1093 711Z" fill="#3e8548"/><path d="M1093 711 1099 710 1094 714Z" fill="#3d8346"/><path d="M1099 710 1100 715 1094 714Z" fill="#3e8648"/><path d="M1094 714 1100 715 1096 718Z" fill="#489c54"/><path d="M1100 715 1099 720 1096 718Z" fill="#469751"/><path d="M1096 718 1099 720 1096 723Z" fill="#44924f"/><path d="M1099 720 1100 723 1096 723Z" fill="#4aa056"/><path d="M1096 723 1100 723 1097 730Z" fill="#4ba156"/><path d="M1100 723 1102 730 1097 730Z" fill="#4ba257"/><path d="M1097 730 1102 730 1099 735Z" fill="#3c8246"/><path d="M1102 730 1104 734 1099 735Z" fill="#3f8849"/><path d="M1080 583 1084 585 1081 590Z" fill="#368d79"/><path d="M1084 585 1083 589 1081 590Z" fill="#378f7b"/><path d="M1081 590 1083 589 1081 594Z" fill="#40a78f"/><path d="M1083 589 1085 593 1081 594Z" fill="#44b198"/><path d="M1081 594 1085 593 1083 599Z" fill="#53c29c"/><path d="M1085 593 1086 598 1083 599Z" fill="#75ca78"/><path d="M1083 599 1086 598 1084 603Z" fill="#5ba162"/><path d="M1086 598 1086 603 1084 603Z" fill="#6cac5a"/><path d="M1084 603 1086 603 1083 608Z" fill="#519e6c"/><path d="M1086 603 1088 610 1083 608Z" fill="#4c8f5e"/><path d="M1083 608 1088 610 1085 614Z" fill="#328474"/><path d="M1088 610 1090 613 1085 614Z" fill="#338979"/><path d="M1085 614 1090 613 1084 618Z" fill="#3fac99"/><path d="M1090 613 1091 620 1084 618Z" fill="#4ccbad"/><path d="M1084 618 1091 620 1085 623Z" fill="#4bbf94"/><path d="M1091 620 1089 623 1085 623Z" fill="#48b285"/><path d="M1085 623 1089 623 1086 629Z" fill="#45a36d"/><path d="M1089 623 1092 628 1086 629Z" fill="#42975f"/><path d="M1086 629 1092 628 1085 633Z" fill="#52b260"/><path d="M1092 628 1092 634 1085 633Z" fill="#52b15f"/><path d="M1085 633 1092 634 1088 640Z" fill="#5cc76b"/><path d="M1092 634 1094 640 1088 640Z" fill="#4faa5c"/><path d="M1088 640 1094 640 1089 645Z" fill="#469751"/><path d="M1094 640 1095 643 1089 645Z" fill="#418d4c"/><path d="M1089 645 1095 643 1089 650Z" fill="#3c8145"/><path d="M1095 643 1095 650 1089 650Z" fill="#418c4b"/><path d="M1089 650 1095 650 1091 654Z" fill="#3f894a"/><path d="M1095 650 1096 655 1091 654Z" fill="#44924f"/><path d="M1091 654 1096 655 1091 660Z" fill="#418d4c"/><path d="M1096 655 1095 659 1091 660Z" fill="#44934f"/><path d="M1091 660 1095 659 1091 663Z" fill="#55b762"/><path d="M1095 659 1098 663 1091 663Z" fill="#4ea75a"/><path d="M1091 663 1098 663 1093 669Z" fill="#4a9f56"/><path d="M1098 663 1097 668 1093 669Z" fill="#459450"/><path d="M1093 669 1097 668 1092 674Z" fill="#489b53"/><path d="M1097 668 1098 674 1092 674Z" fill="#499e55"/><path d="M1092 674 1098 674 1096 680Z" fill="#4ea95b"/><path d="M1098 674 1099 678 1096 680Z" fill="#57bc65"/><path d="M1096 680 1099 678 1095 685Z" fill="#5cc66b"/><path d="M1099 678 1100 685 1095 685Z" fill="#5ac268"/><path d="M1095 685 1100 685 1095 688Z" fill="#50ac5d"/><path d="M1100 685 1100 688 1095 688Z" fill="#4da559"/><path d="M1095 688 1100 688 1098 694Z" fill="#4ca458"/><path d="M1100 688 1103 695 1098 694Z" fill="#4da75a"/><path d="M1098 694 1103 695 1098 699Z" fill="#499d55"/><path d="M1103 695 1103 700 1098 699Z" fill="#459651"/><path d="M1098 699 1103 700 1100 703Z" fill="#4da65a"/><path d="M1103 700 1105 703 1100 703Z" fill="#4ba257"/><path d="M1100 703 1105 703 1099 710Z" fill="#4ca458"/><path d="M1105 703 1102 710 1099 710Z" fill="#479952"/><path d="M1099 710 1102 710 1100 715Z" fill="#3e8548"/><path d="M1102 710 1105 714 1100 715Z" fill="#418b4b"/><path d="M1100 715 1105 714 1099 720Z" fill="#469651"/><path d="M1105 714 1107 720 1099 720Z" fill="#479852"/><path d="M1099 720 1107 720 1100 723Z" fill="#489c54"/><path d="M1100 723 1107 724 1102 730Z" fill="#4aa056"/><path d="M1084 585 1089 584 1083 589Z" fill="#3d9f89"/><path d="M1089 584 1090 590 1083 589Z" fill="#48bda2"/><path d="M1083 589 1090 590 1085 593Z" fill="#5ac595"/><path d="M1090 590 1089 593 1085 593Z" fill="#7fd97e"/><path d="M1085 593 1089 593 1086 598Z" fill="#84d06b"/><path d="M1089 593 1092 598 1086 598Z" fill="#6ca754"/><path d="M1086 598 1092 598 1086 603Z" fill="#6ba754"/><path d="M1092 598 1092 604 1086 603Z" fill="#73b35a"/><path d="M1086 603 1092 604 1088 610Z" fill="#6aa453"/><path d="M1092 604 1094 609 1088 610Z" fill="#6eb463"/><path d="M1088 610 1094 609 1090 613Z" fill="#428f6c"/><path d="M1094 609 1093 614 1090 613Z" fill="#36907f"/><path d="M1090 613 1093 614 1091 620Z" fill="#45bba5"/><path d="M1093 614 1096 620 1091 620Z" fill="#44b395"/><path d="M1091 620 1096 620 1089 623Z" fill="#40a37d"/><path d="M1096 620 1095 625 1089 623Z" fill="#3b936b"/><path d="M1089 623 1095 625 1092 628Z" fill="#3a885b"/><path d="M1095 625 1096 630 1092 628Z" fill="#3b8651"/><path d="M1092 628 1096 630 1092 634Z" fill="#4a9f56"/><path d="M1096 630 1095 634 1092 634Z" fill="#50ac5d"/><path d="M1092 634 1095 634 1094 640Z" fill="#4faa5c"/><path d="M1095 634 1099 640 1094 640Z" fill="#44934f"/><path d="M1094 640 1099 640 1095 643Z" fill="#3e8548"/><path d="M1099 640 1099 644 1095 643Z" fill="#459651"/><path d="M1095 643 1099 644 1095 650Z" fill="#4da659"/><path d="M1099 644 1100 650 1095 650Z" fill="#59c168"/><path d="M1095 650 1100 650 1096 655Z" fill="#53b361"/><path d="M1100 650 1100 654 1096 655Z" fill="#499d54"/><path d="M1096 655 1100 654 1095 659Z" fill="#3d8346"/><path d="M1100 654 1100 658 1095 659Z" fill="#43914e"/><path d="M1095 659 1100 658 1098 663Z" fill="#499d55"/><path d="M1100 658 1100 663 1098 663Z" fill="#479a53"/><path d="M1098 663 1100 663 1097 668Z" fill="#408a4a"/><path d="M1100 663 1102 668 1097 668Z" fill="#3f8849"/><path d="M1097 668 1102 668 1098 674Z" fill="#469852"/><path d="M1102 668 1104 675 1098 674Z" fill="#4ba257"/><path d="M1098 674 1104 675 1099 678Z" fill="#50ad5d"/><path d="M1104 675 1104 678 1099 678Z" fill="#51ae5e"/><path d="M1099 678 1104 678 1100 685Z" fill="#5fcd6e"/><path d="M1104 678 1105 685 1100 685Z" fill="#5bc369"/><path d="M1100 685 1105 685 1100 688Z" fill="#4ca459"/><path d="M1105 685 1107 690 1100 688Z" fill="#459450"/><path d="M1100 688 1107 690 1103 695Z" fill="#4aa056"/><path d="M1089 584 1095 584 1090 590Z" fill="#45b59b"/><path d="M1095 584 1095 589 1090 590Z" fill="#49bda3"/><path d="M1090 590 1095 589 1089 593Z" fill="#62b676"/><path d="M1095 589 1096 595 1089 593Z" fill="#59a46a"/><path d="M1089 593 1096 595 1092 598Z" fill="#5f934a"/><path d="M1096 595 1095 600 1092 598Z" fill="#5d914a"/><path d="M1092 598 1095 600 1092 604Z" fill="#73b25a"/><path d="M1095 600 1097 603 1092 604Z" fill="#80cd6d"/><path d="M1092 604 1097 603 1094 609Z" fill="#79cd77"/><path d="M1097 603 1099 610 1094 609Z" fill="#41a891"/><path d="M1094 609 1099 610 1093 614Z" fill="#389582"/><path d="M1099 610 1098 614 1093 614Z" fill="#389887"/><path d="M1093 614 1098 614 1096 620Z" fill="#42b19a"/><path d="M1098 614 1098 620 1096 620Z" fill="#3ea488"/><path d="M1096 620 1098 620 1095 625Z" fill="#3b9470"/><path d="M1098 620 1101 625 1095 625Z" fill="#398b64"/><path d="M1095 625 1101 625 1096 630Z" fill="#3b8956"/><path d="M1101 625 1101 630 1096 630Z" fill="#469a59"/><path d="M1096 630 1101 630 1095 634Z" fill="#4fa95b"/><path d="M1101 630 1102 632 1095 634Z" fill="#52b260"/><path d="M1095 634 1102 632 1099 640Z" fill="#4a9f55"/><path d="M1102 632 1101 638 1099 640Z" fill="#499d54"/><path d="M1099 640 1101 638 1099 644Z" fill="#499d54"/><path d="M1101 638 1103 643 1099 644Z" fill="#4aa056"/><path d="M1099 644 1103 643 1100 650Z" fill="#53b260"/><path d="M1103 643 1103 649 1100 650Z" fill="#5ac168"/><path d="M1100 650 1103 649 1100 654Z" fill="#50ac5d"/><path d="M1103 649 1106 655 1100 654Z" fill="#489c54"/><path d="M1100 654 1106 655 1100 658Z" fill="#4ba257"/><path d="M1100 658 1106 659 1100 663Z" fill="#52b260"/><path d="M1100 663 1107 664 1102 668Z" fill="#3e8749"/><path d="M1095 584 1101 585 1095 589Z" fill="#44b198"/><path d="M1101 585 1101 588 1095 589Z" fill="#43af97"/><path d="M1095 589 1101 588 1096 595Z" fill="#44b299"/><path d="M1101 588 1102 594 1096 595Z" fill="#3a9782"/><path d="M1096 595 1102 594 1095 600Z" fill="#2e7564"/><path d="M1102 594 1102 597 1095 600Z" fill="#307e6c"/><path d="M1095 600 1102 597 1097 603Z" fill="#3c957d"/><path d="M1102 597 1101 604 1097 603Z" fill="#3a9681"/><path d="M1097 603 1101 604 1099 610Z" fill="#45b49b"/><path d="M1101 604 1103 608 1099 610Z" fill="#3ea18b"/><path d="M1099 610 1103 608 1098 614Z" fill="#37927f"/><path d="M1103 608 1105 613 1098 614Z" fill="#348c7b"/><path d="M1098 614 1105 613 1098 620Z" fill="#369382"/><path d="M1105 613 1106 620 1098 620Z" fill="#3b9d85"/><path d="M1098 620 1106 620 1101 625Z" fill="#3f9e76"/><path d="M1106 620 1104 625 1101 625Z" fill="#3f9a6d"/><path d="M1101 625 1104 625 1101 630Z" fill="#459e63"/><path d="M1104 625 1107 629 1101 630Z" fill="#4aa662"/><path d="M1101 630 1107 629 1102 632Z" fill="#4aa156"/><path d="M1102 632 1107 634 1101 638Z" fill="#54b561"/><path d="M1101 585 1102 584 1101 588Z" fill="#3b9a85"/><path d="M1102 584 1105 588 1101 588Z" fill="#3d9f89"/><path d="M1101 588 1105 588 1102 594Z" fill="#3ea28b"/><path d="M1102 594 1106 593 1102 597Z" fill="#368d79"/><path d="M1102 597 1105 598 1101 604Z" fill="#37907c"/><path d="M1105 598 1106 604 1101 604Z" fill="#3b9b85"/><path d="M1101 604 1106 604 1103 608Z" fill="#3c9c86"/></g><text x="909" y="728" text-anchor="middle" font-size="8.6" fill="#e6e6e6">−84.41</text><text x="937" y="738" text-anchor="middle" font-size="8.6" fill="#e6e6e6">−84.40</text><text x="966" y="748" text-anchor="middle" font-size="8.6" fill="#e6e6e6">−84.39</text><text x="1000" y="758" text-anchor="middle" font-size="8.6" fill="#e6e6e6">−84.38</text><text x="1113" y="698" text-anchor="middle" font-size="8.6" fill="#e6e6e6">36.73</text><text x="1098" y="714" text-anchor="middle" font-size="8.6" fill="#e6e6e6">36.72</text><text x="1082" y="729" text-anchor="middle" font-size="8.6" fill="#e6e6e6">36.71</text><text x="1066" y="747" text-anchor="middle" font-size="8.6" fill="#e6e6e6">36.70</text><text x="1125" y="601.0" text-anchor="middle" font-size="8.6" fill="#e6e6e6">700</text><text x="1125" y="613.4" text-anchor="middle" font-size="8.6" fill="#e6e6e6">650</text><text x="1125" y="625.8" text-anchor="middle" font-size="8.6" fill="#e6e6e6">600</text><text x="1125" y="638.2" text-anchor="middle" font-size="8.6" fill="#e6e6e6">550</text><text x="1125" y="650.6" text-anchor="middle" font-size="8.6" fill="#e6e6e6">500</text><text x="1125" y="663.0" text-anchor="middle" font-size="8.6" fill="#e6e6e6">450</text><text x="1125" y="675.4" text-anchor="middle" font-size="8.6" fill="#e6e6e6">400</text></g></svg><div class="a" style="left:1048px;top:846px;width:39px;height:23px;background:#54687A;border-radius:0 0 3px 3px"></div><div class="a" style="left:1048px;top:848.2px;width:39px;height:21px;font-size:13.5px;line-height:21px;text-align:center;color:#E0E1E3;white-space:nowrap"><span style="display:inline-block;transform:scaleY(1.12);transform-origin:0 15.2px">Plots</span></div><div class="a" style="left:1048px;top:846px;width:39px;height:3px;background:#259AE9;"></div><div class="a" style="left:1089px;top:848px;width:105px;height:21px;background:#455364;border-radius:0 0 3px 3px"></div><div class="a" style="left:1089px;top:848.2px;width:105px;height:21px;font-size:13.5px;line-height:21px;text-align:center;color:#E0E1E3;white-space:nowrap"><span style="display:inline-block;transform:scaleY(1.12);transform-origin:0 15.2px">IPython console</span></div><div class="a" style="left:1196px;top:848px;width:52px;height:21px;background:#455364;border-radius:0 0 3px 3px"></div><div class="a" style="left:1196px;top:848.2px;width:52px;height:21px;font-size:13.5px;line-height:21px;text-align:center;color:#E0E1E3;white-space:nowrap"><span style="display:inline-block;transform:scaleY(1.12);transform-origin:0 15.2px">History</span></div><svg style="left:651px;top:879px" width="12" height="13" viewBox="0 0 12 13"><path d="M6 0.9 L11.1 3.7 V9.3 L6 12.1 L0.9 9.3 V3.7Z M1 3.7 L6 6.4 L11 3.7 M6 6.4 V12" fill="none" stroke="#ffffff" stroke-width="1.9" stroke-linejoin="round"/></svg><div class="st" style="left:673px;letter-spacing:0.48px">conda: spyder_dev (Python 3.8.5)</div><svg style="left:897px;top:880px" width="14" height="13" viewBox="0 0 14 13"><path d="M3.2 0.9 L0.9 3.4 L3.2 5.9 M6.8 0.9 L9.1 3.4 L6.8 5.9" fill="none" stroke="#ffffff" stroke-width="1.8"/><path d="M5.2 9.3 L8 12 L13.3 6.6" fill="none" stroke="#ffffff" stroke-width="1.9"/></svg><div class="st" style="left:920px">LSP Python: ready</div><svg style="left:1058px;top:879px" width="14" height="14" viewBox="0 0 14 14"><circle cx="3.4" cy="3" r="2.3" fill="#ffffff"/><circle cx="10.5" cy="3" r="2.3" fill="#ffffff"/><circle cx="7" cy="11.5" r="2.2" fill="#ffffff"/><path d="M3.4 3 L7 8.5 L10.5 3 M7 8.5 V11.5" fill="none" stroke="#ffffff" stroke-width="1.7"/></svg><div class="st" style="left:1082px">master</div><div class="st" style="left:1143px">Line 10, Col 1</div><div class="st" style="left:1245px">UTF-8</div><div class="st" style="left:1302px">LF</div><div class="st" style="left:1334px">RW</div><div class="st" style="left:1374px">Mem 64%</div></body></html>
